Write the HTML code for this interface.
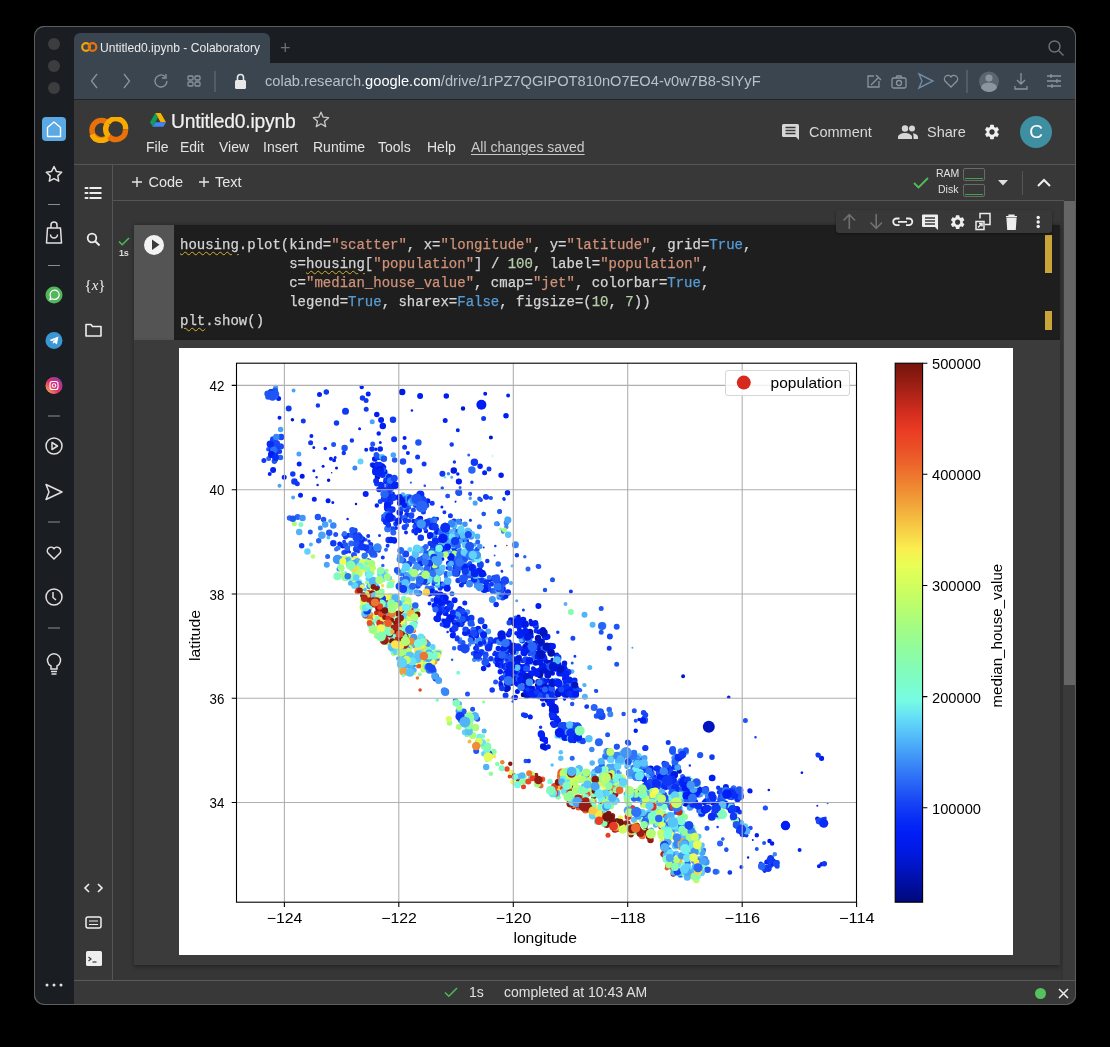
<!DOCTYPE html>
<html><head><meta charset="utf-8">
<style>
*{margin:0;padding:0;box-sizing:border-box}
html,body{width:1110px;height:1047px;background:#000;overflow:hidden;font-family:"Liberation Sans",sans-serif}
.a{position:absolute}
#win{left:34px;top:26px;width:1042px;height:979px;border-radius:10px;background:#1a1d21;overflow:hidden;box-shadow:inset 0 0 0 1px #4a4b4d}
.dot{width:12px;height:12px;border-radius:50%;background:#3c3d3f;left:14px}
#tab{left:40px;top:7px;width:196px;height:30px;background:#3b4550;border-radius:6px 6px 0 0}
#addr{left:40px;top:37px;width:1002px;height:36px;background:#3b4550}
#colab{left:40px;top:73px;width:1002px;height:906px;background:#383838;border-top:1px solid #232323}
.mi{color:#e3e3e3;font-size:14px}
.ic{fill:none;stroke:#8a949e;stroke-width:1.3}
.si{fill:none;stroke:#e0e0e0;stroke-width:1.5}
.code{font-family:"Liberation Mono",monospace;font-size:14px;color:#d4d4d4;white-space:pre;line-height:19px;-webkit-text-stroke:0.25px currentColor}
.s{color:#ce9178}.k{color:#569cd6}.n{color:#b5cea8}
.sq{text-decoration:underline wavy #d6b030;text-decoration-thickness:1px;text-underline-offset:1.5px}
</style></head><body>
<div id="root" style="position:absolute;left:0;top:0;width:1110px;height:1047px;will-change:transform">
<div id="win" class="a">
  <div class="a dot" style="top:12px"></div>
  <div class="a dot" style="top:34px"></div>
  <div class="a dot" style="top:56px"></div>
  <div id="tab" class="a">
    <svg class="a" style="left:7px;top:8px" width="17" height="12" viewBox="0 0 17 12"><circle cx="5" cy="6" r="3.8" fill="none" stroke="#f0a30a" stroke-width="2.2"/><circle cx="11.5" cy="6" r="3.8" fill="none" stroke="#e8710a" stroke-width="2.2"/></svg>
    <div class="a" style="left:26px;top:8px;font-size:12.1px;color:#ebebeb;white-space:nowrap">Untitled0.ipynb - Colaboratory</div>
  </div>
  <div class="a" style="left:246px;top:14px;color:#6b7178;font-size:18px;line-height:16px">+</div>
  <svg class="a" style="left:1013px;top:13px" width="18" height="18" viewBox="0 0 18 18"><circle cx="7.5" cy="7.5" r="5.5" fill="none" stroke="#6e7379" stroke-width="1.4"/><path d="M11.5 11.5l5 5" stroke="#6e7379" stroke-width="1.4"/></svg>
  <div id="addr" class="a">
    <svg class="a" style="left:0;top:0" width="1002" height="36">
      <path class="ic" d="M23 11l-5.5 7 5.5 7"/>
      <path class="ic" d="M50 11l5.5 7-5.5 7"/>
      <path class="ic" d="M91 13.5a6 6 0 1 0 2 4.5M92 11v4h-4"/>
      <rect class="ic" x="114" y="13" width="5" height="4" rx="1"/><rect class="ic" x="121" y="13" width="5" height="4" rx="1"/><rect class="ic" x="114" y="19" width="5" height="4" rx="1"/><rect class="ic" x="121" y="19" width="5" height="4" rx="1"/>
      <path d="M141 8v21" stroke="#6b7580" stroke-width="1"/>
      <rect x="161" y="17" width="11" height="9" rx="1.5" fill="#e8e8e8"/><path d="M163.5 17.5v-3a3 3 0 0 1 6 0v3" fill="none" stroke="#e8e8e8" stroke-width="1.6"/>
      <path class="ic" d="M800 13h-6v11h11v-6M797 22l8-8M802 12l5 5"/>
      <rect class="ic" x="818" y="15" width="14" height="10" rx="1.5"/><circle class="ic" cx="825" cy="20" r="2.5"/><path class="ic" d="M822 15l1-2h4l1 2"/>
      <path d="M845 11l14 7-14 7 3-7z" fill="none" stroke="#6f8ba3" stroke-width="1.4"/>
      <path class="ic" d="M877 24l-6-6a3.5 3.5 0 0 1 6-4a3.5 3.5 0 0 1 6 4z"/>
      <path d="M893 7v23" stroke="#6b7580" stroke-width="1"/>
      <circle cx="915" cy="18.5" r="10" fill="#5a6570"/><circle cx="915" cy="15" r="3.6" fill="#8c959e"/><path d="M907 25a8 5.5 0 0 1 16 0a10 10 0 0 1-16 0z" fill="#8c959e"/>
      <path class="ic" d="M947 10v11M943 17l4 4 4-4M941 23v3h12v-3"/>
      <path class="ic" d="M973 13h14M973 18h14M973 23h14M977 11v4M983 16v4M978 21v4"/>
    </svg>
    <div class="a" style="left:191px;top:10px;font-size:14.65px;color:#b9c0c7;white-space:nowrap;letter-spacing:0px">colab.research.<span style="color:#fff">google.com</span>/drive/1rPZ7QGIPOT810nO7EO4-v0w7B8-SIYyF</div>
  </div>
  <div id="colab" class="a"></div>
</div>
<!-- colab header -->
<div class="a" style="left:74px;top:164px;width:1002px;height:1px;background:#555"></div>
<svg class="a" style="left:88px;top:117px" width="42" height="26" viewBox="0 0 42 26">
  <path d="M21.2 7.2A9.6 9.6 0 1 0 21.2 18.8" fill="none" stroke="#e8710a" stroke-width="5.4"/>
  <path d="M4 17.5A9.6 9.6 0 0 0 21.2 18.8" fill="none" stroke="#f9ab00" stroke-width="5.4"/>
  <path d="M19.8 6.2A9.6 9.6 0 0 1 37.5 12.5" fill="none" stroke="#f9ab00" stroke-width="5.4"/>
  <path d="M19.8 6.2A9.6 9.6 0 0 0 21 19.5" fill="none" stroke="#f9ab00" stroke-width="5.4"/>
  <path d="M37.5 12.5A9.6 9.6 0 0 1 21 19.5" fill="none" stroke="#e8710a" stroke-width="5.4"/>
</svg>
<svg class="a" style="left:150px;top:113px" width="16" height="14" viewBox="0 0 16 14">
  <path d="M5.3 0h5.4l5.3 9.2h-5.4z" fill="#f4b400"/>
  <path d="M5.3 0l2.7 4.6-5.3 9.2L0 9.2z" fill="#0f9d58"/>
  <path d="M2.7 13.8l2.7-4.6H16l-2.7 4.6z" fill="#4285f4"/>
</svg>
<div class="a" style="left:171px;top:110.5px;font-size:19.3px;color:#f1f1f1;white-space:nowrap;letter-spacing:-0.2px;-webkit-text-stroke:0.2px #f1f1f1">Untitled0.ipynb</div>
<svg class="a" style="left:312px;top:111px" width="18" height="17" viewBox="0 0 18 17"><path d="M9 1.2l2.2 5 5.4.5-4.1 3.6 1.2 5.3L9 12.8l-4.7 2.8 1.2-5.3L1.4 6.7l5.4-.5z" fill="none" stroke="#c8c8c8" stroke-width="1.3" stroke-linejoin="round"/></svg>
<div class="a mi" style="left:146px;top:139px">File</div>
<div class="a mi" style="left:180px;top:139px">Edit</div>
<div class="a mi" style="left:219px;top:139px">View</div>
<div class="a mi" style="left:263px;top:139px">Insert</div>
<div class="a mi" style="left:313px;top:139px">Runtime</div>
<div class="a mi" style="left:378px;top:139px">Tools</div>
<div class="a mi" style="left:427px;top:139px">Help</div>
<div class="a mi" style="left:471px;top:139px;color:#c9c9c9;text-decoration:underline;text-underline-offset:2px">All changes saved</div>
<svg class="a" style="left:782px;top:124px" width="18" height="16" viewBox="0 0 18 16"><path d="M1.5 0h14a1.5 1.5 0 0 1 1.5 1.5V16l-3-3H1.5A1.5 1.5 0 0 1 0 11.5v-10A1.5 1.5 0 0 1 1.5 0z" fill="#d6d6d6"/><path d="M3.5 3.5h10M3.5 6.5h10M3.5 9.5h10" stroke="#383838" stroke-width="1.5"/></svg>
<div class="a mi" style="left:809px;top:124px;font-size:14.5px;color:#d8d8d8">Comment</div>
<svg class="a" style="left:898px;top:125px" width="20" height="14" viewBox="0 0 20 14"><circle cx="7" cy="3.5" r="3.2" fill="#d6d6d6"/><circle cx="14" cy="3.5" r="3" fill="#d6d6d6"/><path d="M0 14v-2c0-2.5 4-4 7-4s7 1.5 7 4v2z" fill="#d6d6d6"/><path d="M15 8.2c2.5.3 5 1.5 5 3.8v2h-4.5v-2c0-1.5-.2-2.7-.5-3.8z" fill="#d6d6d6"/></svg>
<div class="a mi" style="left:927px;top:124px;font-size:14.5px;color:#d8d8d8">Share</div>
<svg class="a" style="left:983px;top:123px" width="18" height="18" viewBox="0 0 24 24"><path fill="#f0f0f0" d="M19.14 12.94c.04-.3.06-.61.06-.94 0-.32-.02-.64-.07-.94l2.03-1.58a.49.49 0 0 0 .12-.61l-1.92-3.32a.488.488 0 0 0-.59-.22l-2.39.96c-.5-.38-1.03-.7-1.62-.94l-.36-2.54a.484.484 0 0 0-.48-.41h-3.84c-.24 0-.43.17-.47.41l-.36 2.54c-.59.24-1.13.57-1.62.94l-2.39-.96c-.22-.08-.47 0-.59.22L2.74 8.87c-.12.21-.08.47.12.61l2.03 1.58c-.05.3-.09.63-.09.94s.02.64.07.94l-2.03 1.58a.49.49 0 0 0-.12.61l1.92 3.32c.12.22.37.29.59.22l2.39-.96c.5.38 1.03.7 1.62.94l.36 2.54c.05.24.24.41.48.41h3.84c.24 0 .44-.17.47-.41l.36-2.54c.59-.24 1.13-.56 1.62-.94l2.39.96c.22.08.47 0 .59-.22l1.92-3.32c.12-.22.07-.47-.12-.61l-2.01-1.58zM12 15.6c-1.98 0-3.6-1.62-3.6-3.6s1.62-3.6 3.6-3.6 3.6 1.62 3.6 3.6-1.62 3.6-3.6 3.6z"/></svg>
<div class="a" style="left:1020px;top:116px;width:32px;height:32px;border-radius:50%;background:#3f8fa2;color:#fff;font-size:19px;text-align:center;line-height:32px">C</div>
<!-- left colab sidebar -->
<div class="a" style="left:112px;top:165px;width:1px;height:815px;background:#555"></div>
<div class="a" style="left:113px;top:200px;width:951px;height:1px;background:#555"></div>
<svg class="a" style="left:131.5px;top:177px" width="10" height="10"><path d="M5 0v10M0 5h10" stroke="#e6e6e6" stroke-width="1.4"/></svg><div class="a mi" style="left:148.5px;top:174px;font-size:14.5px;color:#e6e6e6">Code</div>
<svg class="a" style="left:198.5px;top:177px" width="10" height="10"><path d="M5 0v10M0 5h10" stroke="#e6e6e6" stroke-width="1.4"/></svg><div class="a mi" style="left:215px;top:174px;font-size:14.5px;color:#e6e6e6">Text</div>
<svg class="a" style="left:913px;top:177px" width="16" height="12" viewBox="0 0 16 12"><path d="M1 6l4.5 4.5L15 1" fill="none" stroke="#4fbf5a" stroke-width="1.8"/></svg>
<div class="a" style="left:936px;top:167px;font-size:10.5px;color:#e0e0e0">RAM</div>
<div class="a" style="left:938px;top:183px;font-size:10.5px;color:#e0e0e0">Disk</div>
<div class="a" style="left:963px;top:168px;width:22px;height:13px;border:1px solid #6a6a6a;border-radius:2px"><div class="a" style="left:1px;bottom:1px;width:18px;height:1px;background:#3fa34d"></div></div>
<div class="a" style="left:963px;top:184px;width:22px;height:13px;border:1px solid #6a6a6a;border-radius:2px"><div class="a" style="left:1px;bottom:1px;width:18px;height:1px;background:#3fa34d"></div></div>
<svg class="a" style="left:998px;top:180px" width="10" height="6"><path d="M0 0h10L5 5.5z" fill="#e0e0e0"/></svg>
<div class="a" style="left:1022px;top:171px;width:1px;height:24px;background:#555"></div>
<svg class="a" style="left:1037px;top:178px" width="14" height="9"><path d="M1 8l6-6 6 6" fill="none" stroke="#f0f0f0" stroke-width="2"/></svg>
<!-- opera sidebar icons -->
<div class="a" style="left:42px;top:117px;width:24px;height:24px;border-radius:4px;background:#5aa8e4"></div>
<svg class="a" style="left:34px;top:100px" width="40" height="900" viewBox="0 0 40 900">
  <path d="M13.5 27.5l6.5-5.5 6.5 5.5v9h-13z" fill="none" stroke="#fff" stroke-width="1.4" stroke-linejoin="round"/>
  <path class="si" stroke-linejoin="round" d="M20 66.5l2.4 4.9 5.3.8-3.9 3.7.9 5.3-4.7-2.5-4.7 2.5.9-5.3-3.9-3.7 5.3-.8z"/>
  <path d="M14 104.5h12M14 165.5h12M14 316h12M14 422h12M14 528h12" stroke="#8a8e93" stroke-width="1.2"/>
  <path class="si" stroke-linejoin="round" d="M13.5 128h13l1 15h-15zM17 128v-3a3 3 0 0 1 6 0v3M16.5 134.5a3.5 3.5 0 0 0 7 0"/>
  <circle cx="20" cy="195" r="8.5" fill="#52b65c"/><path d="M16 199.5l.7-2.3a4.6 4.6 0 1 1 1.7 1.6z" fill="none" stroke="#fff" stroke-width="1.2"/>
  <circle cx="20" cy="240.5" r="8.5" fill="#3b97d3"/><path d="M15.5 240l9-3.5-1.6 8-2.6-2-1.5 1.5.2-2.5 3-2.5-4 2.2z" fill="#fff"/>
  <defs><linearGradient id="ig" x1="0" y1="1" x2="1" y2="0"><stop offset="0" stop-color="#fdc549"/><stop offset=".45" stop-color="#e1306c"/><stop offset="1" stop-color="#833ab4"/></linearGradient></defs>
  <circle cx="20" cy="285.5" r="8.5" fill="url(#ig)"/><rect x="16" y="281.5" width="8" height="8" rx="2.3" fill="none" stroke="#fff" stroke-width="1.1"/><circle cx="20" cy="285.5" r="1.8" fill="none" stroke="#fff" stroke-width="1.1"/>
  <circle class="si" cx="20" cy="346" r="8"/><path class="si" stroke-linejoin="round" d="M18 342.5v7l5.5-3.5z"/>
  <path class="si" stroke-linejoin="round" d="M12 384.5l16 7.5-16 7.5 3-7.5z"/>
  <path class="si" d="M20 459l-6-6a3.6 3.6 0 0 1 6-4.3a3.6 3.6 0 0 1 6 4.3z" stroke-linejoin="round"/>
  <circle class="si" cx="20" cy="497" r="8"/><path class="si" d="M19 492v5.5l3 2.5"/>
  <path class="si" d="M17 566a6.5 6.5 0 1 1 6 0v3h-6zM17 571.5h6M17.5 574h5"/>
  <circle cx="13" cy="885" r="1.5" fill="#e0e0e0"/><circle cx="20" cy="885" r="1.5" fill="#e0e0e0"/><circle cx="27" cy="885" r="1.5" fill="#e0e0e0"/>
</svg>
<!-- colab sidebar icons -->
<svg class="a" style="left:74px;top:165px" width="38" height="815" viewBox="0 0 38 815">
  <path d="M11.5 23h2M11.5 28h2M11.5 33h2" stroke="#eee" stroke-width="2" stroke-linecap="round"/><path d="M15.5 23h12M15.5 28h12M15.5 33h12" stroke="#eee" stroke-width="1.8"/>
  <circle cx="18" cy="73" r="4.3" fill="none" stroke="#eee" stroke-width="1.8"/><path d="M21 76l4.5 4.5" stroke="#eee" stroke-width="2"/>
  
  <path d="M12 159.5h5l1.5 2h8.5v9.5h-15z" fill="none" stroke="#eee" stroke-width="1.6" stroke-linejoin="round"/>
  <path d="M15 719l-4 4 4 4M24 719l4 4-4 4" fill="none" stroke="#eee" stroke-width="1.6"/>
  <rect x="12" y="752" width="15" height="11" rx="2" fill="none" stroke="#eee" stroke-width="1.5"/><path d="M15 756h9M15 759.5h9" stroke="#eee" stroke-width="1.2"/>
  <rect x="12" y="786" width="16" height="15" rx="1.5" fill="#eee"/><path d="M14.5 792l2.5 2-2.5 2" fill="none" stroke="#383838" stroke-width="1.2"/><path d="M18.5 797h4" stroke="#383838" stroke-width="1.2"/>
</svg>
<div class="a" style="left:84px;top:276px;width:22px;text-align:center;font-family:'Liberation Serif',serif;font-size:15px;color:#eee;line-height:18px"><span style="font-style:normal">{</span><i>x</i><span>}</span></div>
<!-- scrollbar -->
<div class="a" style="left:1061px;top:201px;width:15px;height:779px;background:#3a3a3a"></div>
<div class="a" style="left:1061px;top:201px;width:2px;height:779px;background:#343434"></div>
<div class="a" style="left:1064px;top:201px;width:11.5px;height:484px;background:#656565"></div>
<!-- cell -->
<div class="a" style="left:113px;top:201px;width:948px;height:779px;background:#363636"></div>
<div class="a" style="left:134px;top:225px;width:926px;height:115px;background:#1e1e1e;box-shadow:0 0 4px rgba(0,0,0,.35)"></div>
<div class="a" style="left:134px;top:225px;width:40px;height:115px;background:#545454"></div>
<div class="a" style="left:144px;top:235px;width:20px;height:20px;border-radius:50%;background:#f3f3f3"></div>
<svg class="a" style="left:150px;top:239px" width="10" height="12"><path d="M2 0.5v10.5l7.5-5.25z" fill="#3a3a3a"/></svg>
<svg class="a" style="left:118px;top:237px" width="12" height="10"><path d="M1 4.5l3.2 3.2L11 1" fill="none" stroke="#4cbb55" stroke-width="1.5"/></svg>
<div class="a" style="left:119px;top:248px;font-size:9px;font-weight:bold;color:#ddd;letter-spacing:-0.3px">1s</div>
<div class="a" style="left:1045px;top:235px;width:7px;height:38px;background:#c9a53a"></div>
<div class="a" style="left:1045px;top:311px;width:7px;height:19px;background:#c9a53a"></div>
<div class="a code" style="left:180px;top:236px"><span class="sq">housing</span>.plot(kind=<span class="s">"scatter"</span>, x=<span class="s">"longitude"</span>, y=<span class="s">"latitude"</span>, grid=<span class="k">True</span>,
             s=<span class="sq">housing</span>[<span class="s">"population"</span>] / <span class="n">100</span>, label=<span class="s">"population"</span>,
             c=<span class="s">"median_house_value"</span>, cmap=<span class="s">"jet"</span>, colorbar=<span class="k">True</span>,
             legend=<span class="k">True</span>, sharex=<span class="k">False</span>, figsize=(<span class="n">10</span>, <span class="n">7</span>))
<span class="sq">plt</span>.show()</div>
<!-- cell toolbar -->
<div class="a" style="left:836px;top:210px;width:216px;height:23px;border-radius:3px;background:#383838;box-shadow:0 1px 3px rgba(0,0,0,.4)"></div>
<svg class="a" style="left:836px;top:210px" width="216" height="23" viewBox="0 0 216 23">
  <path d="M13.3 19V5M7.5 10.5l5.8-5.8 5.8 5.8" fill="none" stroke="#707070" stroke-width="1.6"/>
  <path d="M40.2 4v14M34.5 12.5l5.7 5.8 5.8-5.8" fill="none" stroke="#707070" stroke-width="1.6"/>
  <path d="M63.5 8.5h-3a3.3 3.3 0 0 0 0 6.6h3M70 8.5h3a3.3 3.3 0 0 1 0 6.6h-3M62 11.8h9" fill="none" stroke="#eee" stroke-width="1.8"/>
  <path d="M87 4.5h14a1 1 0 0 1 1 1V20l-3-3H87a1 1 0 0 1-1-1V5.5a1 1 0 0 1 1-1z" fill="#eee"/><path d="M89 8h10M89 11h10M89 14h10" stroke="#383838" stroke-width="1.3"/>
  <g transform="translate(113,3.5) scale(0.72)"><path fill="#eee" d="M19.14 12.94c.04-.3.06-.61.06-.94 0-.32-.02-.64-.07-.94l2.03-1.58a.49.49 0 0 0 .12-.61l-1.92-3.32a.488.488 0 0 0-.59-.22l-2.39.96c-.5-.38-1.03-.7-1.62-.94l-.36-2.54a.484.484 0 0 0-.48-.41h-3.84c-.24 0-.43.17-.47.41l-.36 2.54c-.59.24-1.13.57-1.62.94l-2.39-.96c-.22-.08-.47 0-.59.22L2.74 8.87c-.12.21-.08.47.12.61l2.03 1.58c-.05.3-.09.63-.09.94s.02.64.07.94l-2.03 1.58a.49.49 0 0 0-.12.61l1.92 3.32c.12.22.37.29.59.22l2.39-.96c.5.38 1.03.7 1.62.94l.36 2.54c.05.24.24.41.48.41h3.84c.24 0 .44-.17.47-.41l.36-2.54c.59-.24 1.13-.56 1.62-.94l2.39.96c.22.08.47 0 .59-.22l1.92-3.32c.12-.22.07-.47-.12-.61l-2.01-1.58zM12 15.6c-1.98 0-3.6-1.62-3.6-3.6s1.62-3.6 3.6-3.6 3.6 1.62 3.6 3.6-1.62 3.6-3.6 3.6z"/></g>
  <path d="M144 8.5V3.5h10v11h-5M140 11.5h8v8h-8zM142 17.5l4-4M143 13.5h3v3" fill="none" stroke="#eee" stroke-width="1.5"/>
  <path d="M170 6.5h11M173 6.5V5h5v1.5M171 8h9l-.8 11.5h-7.4z" fill="#eee" stroke="#eee" stroke-width="1.2"/>
  <circle cx="202.2" cy="7.5" r="1.7" fill="#eee"/><circle cx="202.2" cy="12" r="1.7" fill="#eee"/><circle cx="202.2" cy="16.5" r="1.7" fill="#eee"/>
</svg>
<!-- output card -->
<div class="a" style="left:134px;top:340px;width:926px;height:625px;background:#3b3b3b;box-shadow:0 2px 4px rgba(0,0,0,.35)"></div>
<!--FIG--><svg class="a" style="left:179px;top:348px" width="834" height="607" viewBox="179 348 834 607">
<rect x="179" y="348" width="834" height="607" fill="#fff"/>
<svg x="236.5" y="363.2" width="620.0" height="539.0" viewBox="236.5 363.2 620.0 539.0" overflow="hidden">
<g fill="none" stroke-linecap="round"><path stroke="#0017d2" stroke-width="1.5" d="M331.7 472.8h0"/><path stroke="#1039f5" stroke-width="1.5" d="M455.4 502h0"/><path stroke="#77fcdf" stroke-width="1.5" d="M492.5 455.9h0"/><path stroke="#a72116" stroke-width="1.5" d="M506.8 545.6h0"/><path stroke="#0323f5" stroke-width="2" d="M424.9 485.8h0"/><path stroke="#1039f5" stroke-width="2" d="M455.6 501.6h0m28.1 45.8h0"/><path stroke="#2864f6" stroke-width="2" d="M410.8 482.7h0m0.2-0.1h0m83.6 73h0"/><path stroke="#0017d2" stroke-width="2.5" d="M356 504.1h0"/><path stroke="#001df5" stroke-width="2.5" d="M411.9 410.5h0"/><path stroke="#0323f5" stroke-width="2.5" d="M316.6 477.3h0m1 7.6h0m30 34.1h0"/><path stroke="#1039f5" stroke-width="2.5" d="M495.3 546h0m6.5 25.1h0"/><path stroke="#2055f5" stroke-width="2.5" d="M424.7 485.8h0"/><path stroke="#49a4f8" stroke-width="2.5" d="M512.6 565.7h0"/><path stroke="#68e3f4" stroke-width="2.5" d="M444.9 477.3h0"/><path stroke="#0017d2" stroke-width="3" d="M336.5 468.1h0"/><path stroke="#001df5" stroke-width="3" d="M323.1 466.3h0"/><path stroke="#0323f5" stroke-width="3" d="M313.8 447.6h0m0 23.2h0m19 31.7h0m2.4-45.1h0m24.4-28.7h0m20.7 13.8h0m61.6 64.5h0"/><path stroke="#092df5" stroke-width="3" d="M446.4 528h0"/><path stroke="#1039f5" stroke-width="3" d="M442.4 487.9h0m18.2 32.4h0m0.1 0h0m3.4 23.2h0m6.2-23.2h0m0.2 0h0"/><path stroke="#2055f5" stroke-width="3" d="M442 487.9h0"/><path stroke="#2864f6" stroke-width="3" d="M460.1 487.5h0m8.6-32.6h0"/><path stroke="#3986f7" stroke-width="3" d="M470.3 498.1h0"/><path stroke="#49a4f8" stroke-width="3" d="M451.7 477.3h0m18.4 21.1h0"/><path stroke="#0017d2" stroke-width="3.5" d="M292.4 419.8h0m36.2 60.4h0"/><path stroke="#001df5" stroke-width="3.5" d="M375.9 449.2h0m60.2 89.8h0m21.7-64.9h0"/><path stroke="#0323f5" stroke-width="3.5" d="M325.2 448.6h0"/><path stroke="#092df5" stroke-width="3.5" d="M440.8 538.7h0"/><path stroke="#1039f5" stroke-width="3.5" d="M387.8 516.7h0m66.6-54.8h0m15.9 32.1h0m1.6-11.8h0m0 0h0m32 16.5h0m0.2 0.5h0"/><path stroke="#2864f6" stroke-width="3.5" d="M524.8 556.8h0"/><path stroke="#3986f7" stroke-width="3.5" d="M448.4 473.8h0m62.7 109.2h0"/><path stroke="#0017d2" stroke-width="4" d="M490.9 437.6h0"/><path stroke="#001df5" stroke-width="4" d="M435.4 536.5h0m49.8-142.7h0"/><path stroke="#001df5" stroke-width="4" d="M334.1 460.3h0m70.5-22.4h0m37.8 121h0m4.8-6.2h0"/><path stroke="#0323f5" stroke-width="4" d="M269.7 474.1h0m0.6-27h0m9.2-29.3h0m31.9 18.2h0m19.5 22.7h0m35.3-8.9h0m41.7 3.2h0m8.1 80.4h0m27.2 17h0m7.5 9.2h0m7.1-129.3h0m50.3-34.9h0"/><path stroke="#092df5" stroke-width="4" d="M395.9 528h0m33.4 9.3h0m30.3 11.7h0"/><path stroke="#1039f5" stroke-width="4" d="M276.4 449.6h0m109.5 51.2h0m5.7-4.5h0m9.8 20.8h0m35.7 1.6h0m7.3-6.5h0m36.5-12.2h0m2.7 13.8h0"/><path stroke="#1847f5" stroke-width="4" d="M386.4 479.5h0m16.5 15.7h0m6.3 12.5h0m37.2 28.1h0"/><path stroke="#2055f5" stroke-width="4" d="M376.5 463.3h0m13.5 64.1h0m80.1-33.7h0m20.5 4.4h0m0.4-0.1h0"/><path stroke="#2864f6" stroke-width="4" d="M271.1 454.8h0m3.8-9.3h0m133.1 61.4h0m11.3 13.9h0m42.9 19.9h0m3.1-0.9h0m7.6-5.3h0"/><path stroke="#49a4f8" stroke-width="4" d="M279.5 485.8h0m13.6 11.8h0m0.5-107h0"/><path stroke="#0017d2" stroke-width="4.5" d="M434.8 525h0m28.2-116.6h0"/><path stroke="#001ae3" stroke-width="4.5" d="M437.4 530h0"/><path stroke="#001df5" stroke-width="4.5" d="M270.5 454.6h0m104 15h0m9.6-2.4h0m29.3 53.8h0m39.8 16.3h0"/><path stroke="#001df5" stroke-width="4.5" d="M385.3 481.7h0m14.8 21.9h0"/><path stroke="#0323f5" stroke-width="4.5" d="M273.5 450h0m88.2-63h0m15.1 118.4h0m1.9-71.9h0m9.3 67.2h0m1-14.6h0m0.3 10h0m5.4 0.5h0m20.1 6h0m11.2 28.5h0"/><path stroke="#092df5" stroke-width="4.5" d="M385.7 489.4h0m7 4.4h0m26.2 9.1h0"/><path stroke="#1039f5" stroke-width="4.5" d="M275.5 452.4h0m42.4-46.9h0m25.9 47.5h0m8.1-12.6h0m26.1 17.7h0m11.9 49.4h0m17.1-2.4h0m2 15.6h0m38.6-24.7h0m4.1-51.6h0m2.9 107.7h0m32.7 8.9h0m12.2-49.6h0m17.4 43.8h0"/><path stroke="#1847f5" stroke-width="4.5" d="M276.2 452h0"/><path stroke="#2055f5" stroke-width="4.5" d="M268.3 449.2h0m5.4-57.2h0m116.9 148.2h0m16.3-14.9h0m40.8-29.4h0m5.8 25.2h0m25.9-22.4h0m4.3 15.2h0m54.1 52.3h0"/><path stroke="#2864f6" stroke-width="4.5" d="M416.4 523.3h0"/><path stroke="#3073f6" stroke-width="4.5" d="M408.9 502.4h0m45.2 47.6h0"/><path stroke="#3986f7" stroke-width="4.5" d="M411.2 517.2h0"/><path stroke="#4195f7" stroke-width="4.5" d="M412.4 503.3h0"/><path stroke="#49a4f8" stroke-width="4.5" d="M418.8 529h0"/><path stroke="#001ae3" stroke-width="5" d="M302.2 476.2h0m75.5-9.1h0"/><path stroke="#001df5" stroke-width="5" d="M387.6 495.6h0"/><path stroke="#001df5" stroke-width="5" d="M278.6 398.6h0m49.5 102.2h0m50.4-30.4h0m4.1-12h0m8.5 80.8h0"/><path stroke="#0323f5" stroke-width="5" d="M284.2 477.3h0m15-13.4h0m1.3 31.3h0m13.8 4h0m5.2-104.6h0m48.7-0.5h0m37.3 115.2h0m6.1-8.3h0m33.6-80.4h0m39.4 52.2h0m23 19.9h0"/><path stroke="#092df5" stroke-width="5" d="M387.3 504.6h0m2.1 8h0m10.2-9.3h0"/><path stroke="#1039f5" stroke-width="5" d="M263.9 460.6h0m9.6-9.1h0m6.1 0h0m17.7 32.3h0m6-62.9h0m7.3 21.9h0m55.5-42.2h0m0.1 8.6h0m16.2 79h0m3.3-8.4h0m6.2 1.3h0m2.5 58.5h0m10.2-92.3h0m9.2 83.8h0m3.8-74h0m5.8 54.9h0m0.7-48.1h0m7.7 59.4h0m0.4-20h0m7.6 36.5h0m10.6-24h0m3.7 5.3h0m29.5-102.6h0m3 78.8h0m2.4-28.4h0"/><path stroke="#1847f5" stroke-width="5" d="M275.6 459.6h0m96.6 5.1h0m2.3 6.6h0m5.7 30.1h0m6.3 4h0m6-25.5h0m0.5 48.9h0m7.4-19.2h0m13 0.5h0m3.2 12.9h0m4.1-26.9h0m6.1 9.3h0m11.8 48.1h0"/><path stroke="#2055f5" stroke-width="5" d="M270.9 391.4h0m4.7 60.6h0m58-7.6h0m39.1-0.3h0m15.1 41.2h0m2.7 7.7h0m65.2 47.1h0m43.9-28.7h0"/><path stroke="#2864f6" stroke-width="5" d="M268.7 458.4h0m114.9 57.8h0m32.6-14.2h0m63.2 24.8h0"/><path stroke="#3986f7" stroke-width="5" d="M354.9 468.1h0"/><path stroke="#4195f7" stroke-width="5" d="M434.8 534.2h0"/><path stroke="#49a4f8" stroke-width="5" d="M275.7 387.3h0m23.2 66.8h0m73.3-32.4h0m34.4 75.3h0m68.5 6.1h0m0.1 0.2h0"/><path stroke="#51b4f9" stroke-width="5" d="M386.8 474.9h0m16.1 19.8h0"/><path stroke="#58c3f9" stroke-width="5" d="M458.6 547.1h0"/><path stroke="#0014c0" stroke-width="5.5" d="M377.5 477.1h0"/><path stroke="#001ae3" stroke-width="5.5" d="M373.5 465.6h0m8.8 0.4h0"/><path stroke="#001df5" stroke-width="5.5" d="M276.1 445.9h0m98.6 13h0m1.6 9.6h0m0.5-53.9h0m14.2 71.6h0m29.4 32.2h0m31.5 17.7h0m49.2-60.9h0m4.9-59.5h0"/><path stroke="#001df5" stroke-width="5.5" d="M384.8 471.7h0m7.6 25.6h0m1.9 43.6h0m7.6-40.7h0m17.4 30.1h0m0.6-11.6h0m17 13.4h0m9.4-136.2h0"/><path stroke="#0323f5" stroke-width="5.5" d="M271.5 450.6h0m5.1-3.5h0m102.4 10.1h0m1.2-8.3h0m0.4 35.7h0m2.7-16.4h0m3.7 37.9h0m7-22.3h0m25.2 43.8h0m8.5-26.5h0m16.9 46.1h0m13.9-65.8h0m21.6-15.1h0m27.4 26.4h0"/><path stroke="#092df5" stroke-width="5.5" d="M275.5 448.8h0m0.2 5.4h0m4.5-7.9h0m91.8 2.6h0m4.8 24.5h0m0.3-8.6h0m1.9 24.7h0m0.6-25h0m0.3 0.5h0m8.9 34.9h0m2.7-16.5h0m15.5 31.5h0m12.6 5.7h0m25.4 23.8h0m6.2-1.5h0m2.8 5.1h0"/><path stroke="#1039f5" stroke-width="5.5" d="M274.9 441h0m17.9 33.1h0m33.5-82.2h0m10.2 31.1h0m26-25.1h0m14.3 85.9h0m10.5 13.8h0m0.3 23.3h0m2.3-24.6h0m0.7 6h0m1.1 37.7h0m14.9-29.8h0m10 16.2h0m13.6 17h0m13.8 8.9h0m41.7-55.5h0"/><path stroke="#1847f5" stroke-width="5.5" d="M377.3 456.9h0m6.5 62.7h0m3.3-15.9h0m1.1 2.1h0m33.4-1.7h0"/><path stroke="#2055f5" stroke-width="5.5" d="M272.4 445.6h0m2 15.6h0m101.9-6.5h0m7.2 15.1h0m4.6 39h0m1.7-24.5h0m4.8-24.3h0m10 39h0m0.6 8h0m1-8.1h0m2.1 4.1h0m25.8 16.3h0"/><path stroke="#2864f6" stroke-width="5.5" d="M275.2 396.8h0m0.8 60h0m0.2-14.1h0m0.3-48.1h0m4 62.9h0m130.8 58.2h0m14.6 31h0m72.3 17.2h0"/><path stroke="#3073f6" stroke-width="5.5" d="M273.9 442.1h0m160.6 97.1h0"/><path stroke="#3986f7" stroke-width="5.5" d="M274.4 447.9h0"/><path stroke="#49a4f8" stroke-width="5.5" d="M274.5 443h0m6.1-13.5h0m112.7 25.6h0m7.5 45.9h0"/><path stroke="#001df5" stroke-width="6" d="M270.4 444h0m167.9 103h0"/><path stroke="#001df5" stroke-width="6" d="M420.1 395.9h0m34.6 150.4h0m4.3-64.9h0"/><path stroke="#0323f5" stroke-width="6" d="M273.1 470h0m92.6 24h0m15.4-73.9h0m4.1 74.8h0m1.8 13.6h0m4.5-29h0"/><path stroke="#092df5" stroke-width="6" d="M376.1 481.1h0m2.8-7.1h0m3.7 1h0m3.6 15.5h0m0.6 16.2h0m4.7-8.5h0m24.4 32.1h0m0.1-25.3h0"/><path stroke="#1039f5" stroke-width="6" d="M288.7 408.4h0m100.7 74.1h0m4.3 15.5h0m0.4-58.8h0m11.1 60.5h0m4.3-28.9h0m2.6 30.2h0m30.3-27.2h0"/><path stroke="#1847f5" stroke-width="6" d="M274 448.5h0m7.1-1.9h0m106.6 82.6h0m21.7-30.2h0m2 16.2h0m4-15.5h0"/><path stroke="#2055f5" stroke-width="6" d="M273.7 445.6h0m1.3 3.9h0m0.1-59h0m171.8 145.8h0"/><path stroke="#2864f6" stroke-width="6" d="M393.3 532.5h0m11.1-14.6h0m1.7-15.6h0m4.5-0.2h0"/><path stroke="#3073f6" stroke-width="6" d="M408.3 498.1h0m26.1 22.6h0"/><path stroke="#3986f7" stroke-width="6" d="M409.9 503.3h0m10.2-6.6h0"/><path stroke="#4195f7" stroke-width="6" d="M408.8 497.9h0"/><path stroke="#49a4f8" stroke-width="6" d="M402.9 502.2h0"/><path stroke="#58c3f9" stroke-width="6" d="M381.9 457.1h0"/><path stroke="#60d3fa" stroke-width="6" d="M360.5 461.4h0"/><path stroke="#001ae3" stroke-width="6.5" d="M402.2 391.9h0m51.6 78.5h0"/><path stroke="#001df5" stroke-width="6.5" d="M430.2 535.3h0"/><path stroke="#001df5" stroke-width="6.5" d="M382.8 425.9h0m7.7 91.9h0m30.8-18.8h0"/><path stroke="#0323f5" stroke-width="6.5" d="M399.8 512.4h0m0.5-9.5h0m7-2h0m58.4 40.1h0"/><path stroke="#092df5" stroke-width="6.5" d="M271.8 443.8h0m109.7 41.8h0m7 11.3h0m0.7-19.8h0m3.2 32.3h0"/><path stroke="#1039f5" stroke-width="6.5" d="M271.1 392.2h0m23.3 89.2h0m93.9 7.6h0m0.3 51.1h0m4.4-120.3h0m9.9 85.5h0m21.1-1.9h0m34.5-11.2h0"/><path stroke="#1847f5" stroke-width="6.5" d="M273.2 439.5h0m3.6 3.9h0m4.4-6.4h0m111.5 81.3h0m10.3-56.9h0"/><path stroke="#2055f5" stroke-width="6.5" d="M267.6 393.8h0m0.8 2.8h0m7.2-3.2h0m69 54.7h0m39.3 10.6h0m34.5-16.2h0m6.1 83.4h0m15.6 14.5h0m18.9-47.7h0"/><path stroke="#2864f6" stroke-width="6.5" d="M273.9 450.5h0m169.4 84.6h0"/><path stroke="#3073f6" stroke-width="6.5" d="M273.4 449.5h0m116.8 31.1h0"/><path stroke="#3986f7" stroke-width="6.5" d="M276.3 437h0m128.7 64.5h0"/><path stroke="#4195f7" stroke-width="6.5" d="M403 506.6h0"/><path stroke="#49a4f8" stroke-width="6.5" d="M408.8 496.9h0"/><path stroke="#001df5" stroke-width="7" d="M416.6 526.1h0"/><path stroke="#001df5" stroke-width="7" d="M271.5 454.5h0m116 50.3h0m11.9-7.3h0"/><path stroke="#0323f5" stroke-width="7" d="M375.6 471.9h0m68.6 79.5h0m14.2-12h0"/><path stroke="#092df5" stroke-width="7" d="M270.1 443.9h0m5.4 13.7h0m115.6 30h0m27.2 15.3h0m17 38.4h0"/><path stroke="#1039f5" stroke-width="7" d="M345.5 411.3h0m38.8 87.5h0m5 12.6h0m1.1 5.8h0m19.8-18.7h0"/><path stroke="#1847f5" stroke-width="7" d="M394.3 478.3h0"/><path stroke="#2055f5" stroke-width="7" d="M272 393.9h0"/><path stroke="#2864f6" stroke-width="7" d="M429.6 521.3h0"/><path stroke="#3073f6" stroke-width="7" d="M387.7 528.7h0m27.8-26h0"/><path stroke="#3986f7" stroke-width="7" d="M515.4 544.8h0"/><path stroke="#4195f7" stroke-width="7" d="M448 534.8h0"/><path stroke="#49a4f8" stroke-width="7" d="M419.4 495.6h0"/><path stroke="#58c3f9" stroke-width="7" d="M411.4 501.7h0"/><path stroke="#0017d2" stroke-width="7.5" d="M450.1 543.5h0m11.2-4.4h0"/><path stroke="#001ae3" stroke-width="7.5" d="M380.1 469.8h0m21.6 31.4h0"/><path stroke="#0323f5" stroke-width="7.5" d="M379.8 471.7h0m15.5 13.6h0m23.2 35.9h0m25.6 17.4h0"/><path stroke="#092df5" stroke-width="7.5" d="M386.5 521.5h0m45.7 5h0m25.6 13.3h0"/><path stroke="#1039f5" stroke-width="7.5" d="M387.1 492h0m87.3-29.8h0"/><path stroke="#2055f5" stroke-width="7.5" d="M272.5 397.1h0"/><path stroke="#2864f6" stroke-width="7.5" d="M471.9 470h0"/><path stroke="#092df5" stroke-width="8" d="M420.4 494.4h0"/><path stroke="#1039f5" stroke-width="8" d="M422.2 499.8h0"/><path stroke="#2864f6" stroke-width="8.5" d="M384.6 493.9h0"/><path stroke="#3073f6" stroke-width="8.5" d="M387.2 515.3h0"/><path stroke="#49a4f8" stroke-width="8.5" d="M420.7 503.2h0"/><path stroke="#001ae3" stroke-width="9" d="M418.9 500.8h0"/><path stroke="#51b4f9" stroke-width="9" d="M420.5 502.6h0"/><path stroke="#0323f5" stroke-width="9.5" d="M389.6 517.3h0"/><path stroke="#1039f5" stroke-width="9.5" d="M458.5 538.6h0"/><path stroke="#3986f7" stroke-width="9.5" d="M414.4 499.8h0"/><path stroke="#001df5" stroke-width="10" d="M481.4 404.8h0"/><path stroke="#1847f5" stroke-width="10" d="M422.1 501.2h0"/><path stroke="#2055f5" stroke-width="10.5" d="M416.7 498.8h0"/><path stroke="#2864f6" stroke-width="12" d="M421.7 506.5h0"/><path stroke="#1039f5" stroke-width="3" d="M349.7 551.9h0m6-5.5h0m23.8-10.8h0m86.9 35.1h0m19.8 10.1h0"/><path stroke="#2055f5" stroke-width="3" d="M348.8 547h0m9.6-13.5h0m12.2 12.5h0"/><path stroke="#2864f6" stroke-width="3" d="M463.6 572.1h0"/><path stroke="#51b4f9" stroke-width="3" d="M498.5 524.2h0"/><path stroke="#001df5" stroke-width="3.5" d="M359.3 542.2h0"/><path stroke="#0323f5" stroke-width="3.5" d="M479.4 581.9h0"/><path stroke="#092df5" stroke-width="3.5" d="M502.5 593.1h0"/><path stroke="#1039f5" stroke-width="3.5" d="M356.6 545.3h0m12.4-4.1h0m115 41.3h0"/><path stroke="#1847f5" stroke-width="3.5" d="M493.1 577.1h0"/><path stroke="#2055f5" stroke-width="3.5" d="M365.9 539.7h0"/><path stroke="#2864f6" stroke-width="3.5" d="M382.8 565.5h0"/><path stroke="#3073f6" stroke-width="3.5" d="M362 539.4h0m92.8 19.5h0m49.1 39.6h0"/><path stroke="#3986f7" stroke-width="3.5" d="M461 523.5h0m4.4 32.7h0m32.2-33.3h0"/><path stroke="#51b4f9" stroke-width="3.5" d="M453.1 558.6h0"/><path stroke="#81fcbc" stroke-width="3.5" d="M353.3 571.8h0"/><path stroke="#92fc9b" stroke-width="3.5" d="M360.3 581.8h0"/><path stroke="#99fc91" stroke-width="3.5" d="M500.9 529.2h0"/><path stroke="#abfc7b" stroke-width="3.5" d="M366.6 582.5h0"/><path stroke="#b4fd73" stroke-width="3.5" d="M462.3 525.8h0"/><path stroke="#fbe74d" stroke-width="3.5" d="M363 568.8h0"/><path stroke="#f9d849" stroke-width="3.5" d="M382.6 585.7h0"/><path stroke="#001ae3" stroke-width="4" d="M460.8 565.9h0"/><path stroke="#001df5" stroke-width="4" d="M467.4 571.4h0"/><path stroke="#001df5" stroke-width="4" d="M458.5 565.4h0m14.9 6h0"/><path stroke="#0323f5" stroke-width="4" d="M453.7 543.4h0m33.4 42.9h0m6.3-8.8h0"/><path stroke="#092df5" stroke-width="4" d="M375.3 551h0m30.7-18.5h0m41.7 35.6h0m8-13h0m0.7 8.1h0m2-1.6h0m5.9 16.2h0m2.4-1.5h0m18.1 6h0"/><path stroke="#1039f5" stroke-width="4" d="M368.2 536h0m14.6 21.4h0m4.8-11.7h0"/><path stroke="#1847f5" stroke-width="4" d="M344.1 541.8h0m2.4 10.3h0m110.4 6.3h0"/><path stroke="#2055f5" stroke-width="4" d="M358.2 551.6h0m66.9-22.7h0m28.8 28.1h0m7.7 5h0m36.5 29.9h0"/><path stroke="#2864f6" stroke-width="4" d="M350.5 543.8h0m35.5 6h0"/><path stroke="#3073f6" stroke-width="4" d="M503 531.7h0"/><path stroke="#3986f7" stroke-width="4" d="M454.4 529h0m16.4 18.9h0"/><path stroke="#4195f7" stroke-width="4" d="M442.7 530.7h0"/><path stroke="#49a4f8" stroke-width="4" d="M330.1 521.1h0m122 16.6h0m22.6 7h0"/><path stroke="#51b4f9" stroke-width="4" d="M310.9 544.4h0m140.8-0.4h0m3.4-13.2h0m6.5 21.5h0m20.4 25.9h0m17.6 17.5h0"/><path stroke="#58c3f9" stroke-width="4" d="M328.4 537.6h0m55.2 103.5h0m59.1-99.5h0"/><path stroke="#60d3fa" stroke-width="4" d="M463.7 544h0"/><path stroke="#68e3f4" stroke-width="4" d="M345.5 573.3h0m115.5-31.3h0"/><path stroke="#7dfcc8" stroke-width="4" d="M383.4 580.3h0m122.4-55.4h0"/><path stroke="#99fc91" stroke-width="4" d="M386.7 570.7h0"/><path stroke="#a3fc85" stroke-width="4" d="M507.8 533.2h0"/><path stroke="#b4fd73" stroke-width="4" d="M355.2 569.5h0"/><path stroke="#001df5" stroke-width="4.5" d="M421.4 521.6h0"/><path stroke="#001df5" stroke-width="4.5" d="M445.9 546.2h0m50.4 58.3h0m8.9-8.9h0"/><path stroke="#0323f5" stroke-width="4.5" d="M465.6 579.1h0m4.7-29.1h0"/><path stroke="#092df5" stroke-width="4.5" d="M378.7 550.4h0m39.4-26.9h0m20.8 26.6h0m14.6 7.3h0m1.9-5.7h0m19.9 30.2h0m9.1-7.5h0"/><path stroke="#1039f5" stroke-width="4.5" d="M355.1 533.3h0m3.4 6.2h0m115.4 19h0m12.8 25.3h0"/><path stroke="#1847f5" stroke-width="4.5" d="M356.9 536.4h0m17.6 12h0m26.3-39.2h0m13.7 17.2h0m49.4 33.9h0m0.7 12.2h0m3.7-7.8h0"/><path stroke="#2055f5" stroke-width="4.5" d="M341.5 545.5h0m2.1-10.8h0m113.9-3.7h0m8.5 5.2h0m4 27h0m27.3-39.2h0"/><path stroke="#2864f6" stroke-width="4.5" d="M344.6 577h0"/><path stroke="#3073f6" stroke-width="4.5" d="M336.2 549.2h0m18.5 26.5h0m4.4-41.1h0m112.4 42h0m1.4-25.8h0m14.9 34.7h0m9.8-8.9h0"/><path stroke="#3986f7" stroke-width="4.5" d="M454.3 546.6h0m25.8 24.7h0m26.2-44.3h0"/><path stroke="#4195f7" stroke-width="4.5" d="M499.5 582.9h0"/><path stroke="#49a4f8" stroke-width="4.5" d="M462.6 536.5h0m1.3 45.7h0m4.5-49.8h0m3 23.3h0"/><path stroke="#51b4f9" stroke-width="4.5" d="M359.4 585.1h0m90.9-32.6h0m22.7 7.7h0"/><path stroke="#58c3f9" stroke-width="4.5" d="M369 585.5h0m72.5-56.6h0m29.2 29.7h0"/><path stroke="#60d3fa" stroke-width="4.5" d="M367.6 578.9h0m110.7-18.9h0"/><path stroke="#7afcd3" stroke-width="4.5" d="M355.6 568.4h0m4.2 12.8h0m29.4 2.8h0"/><path stroke="#92fc9b" stroke-width="4.5" d="M340 575.9h0"/><path stroke="#99fc91" stroke-width="4.5" d="M473.1 534.4h0"/><path stroke="#a3fc85" stroke-width="4.5" d="M373.3 587h0"/><path stroke="#abfc7b" stroke-width="4.5" d="M341.2 567.1h0m1.8 6.9h0"/><path stroke="#bdfd6b" stroke-width="4.5" d="M313 556.6h0"/><path stroke="#e4fe56" stroke-width="4.5" d="M353.9 580.4h0"/><path stroke="#001df5" stroke-width="5" d="M489.9 579.5h0"/><path stroke="#0323f5" stroke-width="5" d="M343 546h0m24.3 14.5h0m80.9-19.7h0m0.3 22.2h0m12.8-5h0"/><path stroke="#092df5" stroke-width="5" d="M339.7 544.1h0m9-8.9h0m3.4 0.1h0m3 8.3h0m106.3 41.3h0m2.9-3.2h0m12.5 3.4h0m11.1 2.3h0m15.5 1h0m0.8 7.7h0"/><path stroke="#1039f5" stroke-width="5" d="M345.5 537h0m11.7 10.4h0m0.8-6.5h0m12.8 3.7h0m24.9-20.8h0m49.3 24.5h0m10.1 19.4h0m3.3 0.4h0m4.5 10.3h0m8.3-5.8h0m20.3 11.6h0"/><path stroke="#1847f5" stroke-width="5" d="M343.8 552.5h0m8.6 14.8h0m2.8-37.1h0m103.7 39.9h0m6.2 5.4h0m35.4 13.7h0m2 8.7h0"/><path stroke="#2055f5" stroke-width="5" d="M310.3 531.9h0m25.4 2.5h0m15.5 0.5h0m16.7 16h0m48.9-29.7h0m44.7 35.5h0m8.4 25.5h0m7.3-33h0m1.3 10h0m28 22h0"/><path stroke="#2864f6" stroke-width="5" d="M327.6 556.6h0m43-9h0m78.6-6.5h0m28.5 0.9h0m3.1 23.9h0m19 20.3h0"/><path stroke="#3073f6" stroke-width="5" d="M338.1 548h0m6.4-14.6h0m102.9-1.6h0m9.1 37.6h0m13.5-14.8h0m19.3 23h0"/><path stroke="#3986f7" stroke-width="5" d="M320.3 527.9h0m18.7 41h0m130.1-34.8h0m8.1 37.9h0m7.2 8.6h0m9.4 10.9h0m5.2 5.8h0"/><path stroke="#4195f7" stroke-width="5" d="M447.8 539.2h0m4.5 19.1h0m0.7-5h0m1.6-11.4h0m4.8 16.5h0m5 4.5h0m10.9-6.2h0m21.1-33h0m1 68.2h0"/><path stroke="#49a4f8" stroke-width="5" d="M351.8 581h0m16.6-11.4h0m79.9-17.2h0m3.5 9.8h0m8.7-21.3h0"/><path stroke="#51b4f9" stroke-width="5" d="M451.1 531.4h0"/><path stroke="#58c3f9" stroke-width="5" d="M443.7 544.3h0m35.3 14.1h0"/><path stroke="#60d3fa" stroke-width="5" d="M450.5 554.3h0"/><path stroke="#68e3f4" stroke-width="5" d="M382.9 571.8h0"/><path stroke="#71f2ea" stroke-width="5" d="M348.9 558.5h0"/><path stroke="#77fcdf" stroke-width="5" d="M351.4 578.5h0"/><path stroke="#7afcd3" stroke-width="5" d="M343 560.7h0m42.6 16.7h0"/><path stroke="#7dfcc8" stroke-width="5" d="M300.9 524.6h0m206-5.8h0"/><path stroke="#81fcbc" stroke-width="5" d="M349.6 565.5h0m6.9-3h0"/><path stroke="#92fc9b" stroke-width="5" d="M353.8 574.4h0"/><path stroke="#99fc91" stroke-width="5" d="M349.3 558.8h0m101-3.8h0"/><path stroke="#a3fc85" stroke-width="5" d="M504.5 530h0"/><path stroke="#abfc7b" stroke-width="5" d="M294.4 523.8h0"/><path stroke="#bdfd6b" stroke-width="5" d="M376.3 635.7h0"/><path stroke="#c6fd64" stroke-width="5" d="M340.6 574.9h0m15.3 7.3h0"/><path stroke="#fbe74d" stroke-width="5" d="M389.7 578.5h0"/><path stroke="#001df5" stroke-width="5.5" d="M404.4 505.2h0m54.6 56.1h0"/><path stroke="#0323f5" stroke-width="5.5" d="M355.9 549.1h0m109.2 21.2h0m40.6 26h0"/><path stroke="#092df5" stroke-width="5.5" d="M364.7 555.5h0m87.2-11.3h0m5.3 29.7h0m21.3-3.4h0m17.6 33.9h0"/><path stroke="#1039f5" stroke-width="5.5" d="M301.7 545.7h0m45.6 4.5h0m11.5-4.7h0m2.5-4.3h0m4.3 7h0m22.8-23.3h0m17.1-4.5h0m52.6 60.2h0m2-12.6h0"/><path stroke="#1847f5" stroke-width="5.5" d="M456.4 565.9h0m17.6 8h0m5.2 6.7h0"/><path stroke="#2055f5" stroke-width="5.5" d="M323.6 519.5h0m21.9 25.6h0m29.3 10h0m94.2-3.3h0"/><path stroke="#2864f6" stroke-width="5.5" d="M289.5 517.9h0m29.2 22.9h0m28.6 7.4h0m17.6 7.2h0m7.6-0.4h0m96.9-23.3h0"/><path stroke="#3073f6" stroke-width="5.5" d="M368.9 561.2h0m88.6-18.2h0m1.9 8.7h0m18.7 22.9h0"/><path stroke="#3986f7" stroke-width="5.5" d="M462.1 534.4h0m44.3-11.6h0"/><path stroke="#4195f7" stroke-width="5.5" d="M446.6 547.8h0m18.4-23.6h0m6.2 12.9h0m5.4 48.9h0m3.1-39.5h0"/><path stroke="#49a4f8" stroke-width="5.5" d="M447.4 542.8h0"/><path stroke="#51b4f9" stroke-width="5.5" d="M342.8 560.3h0m108.5-19.7h0m7.4 30.6h0m9.1-24.1h0m31.5 48.2h0"/><path stroke="#58c3f9" stroke-width="5.5" d="M361.9 585.5h0"/><path stroke="#60d3fa" stroke-width="5.5" d="M452.7 545.5h0"/><path stroke="#7afcd3" stroke-width="5.5" d="M460.2 532.1h0"/><path stroke="#8cfca6" stroke-width="5.5" d="M386.8 576.6h0"/><path stroke="#92fc9b" stroke-width="5.5" d="M381.9 591.3h0"/><path stroke="#a3fc85" stroke-width="5.5" d="M365 559.5h0"/><path stroke="#abfc7b" stroke-width="5.5" d="M371.9 573.1h0"/><path stroke="#b4fd73" stroke-width="5.5" d="M370.1 587.2h0"/><path stroke="#bdfd6b" stroke-width="5.5" d="M348.1 564.1h0"/><path stroke="#c6fd64" stroke-width="5.5" d="M369.8 565.4h0m6.6 16.4h0"/><path stroke="#d0fd5e" stroke-width="5.5" d="M392.2 581.8h0"/><path stroke="#e4fe56" stroke-width="5.5" d="M353.9 583.3h0"/><path stroke="#f7f551" stroke-width="5.5" d="M364.2 570.1h0"/><path stroke="#fbe74d" stroke-width="5.5" d="M369 571.1h0"/><path stroke="#001df5" stroke-width="6" d="M502 590h0"/><path stroke="#0323f5" stroke-width="6" d="M452.6 554.9h0m13.7 20.4h0m13.4-4.7h0m5.4 16.8h0"/><path stroke="#092df5" stroke-width="6" d="M362.4 539.2h0m123.8 43.2h0"/><path stroke="#1039f5" stroke-width="6" d="M356.3 549.6h0m3.5-4.6h0m121.8 35.8h0"/><path stroke="#1847f5" stroke-width="6" d="M356.8 547.4h0m17.6 1.9h0m30.2-22.1h0"/><path stroke="#2055f5" stroke-width="6" d="M354 555.1h0m6.3-17.6h0m108.2 38h0m24.3 15.4h0m8.6 3.4h0"/><path stroke="#2864f6" stroke-width="6" d="M297.6 517.1h0m53.6 26.3h0m25.9 44.6h0m80.7-42.4h0m37.2 45.7h0m7.7-6.8h0"/><path stroke="#3073f6" stroke-width="6" d="M364.4 556.1h0m89.1-11.7h0m21.2 9.5h0"/><path stroke="#3986f7" stroke-width="6" d="M369.3 586.3h0m89.1-64.5h0m6.9 16.1h0m11.4 43.9h0"/><path stroke="#4195f7" stroke-width="6" d="M453.5 542.2h0"/><path stroke="#49a4f8" stroke-width="6" d="M326.8 564.8h0m134.6-35.1h0m10.3 24.4h0"/><path stroke="#51b4f9" stroke-width="6" d="M477.3 536.6h0m0.7 21.5h0m20.4 32.8h0"/><path stroke="#58c3f9" stroke-width="6" d="M441.5 533.4h0m0.5 5.8h0m19.7-7.8h0m0.9 4.4h0m9.5-1.7h0"/><path stroke="#60d3fa" stroke-width="6" d="M443.7 528.3h0m16 32.9h0"/><path stroke="#68e3f4" stroke-width="6" d="M342.4 558.8h0m37.7 15.7h0"/><path stroke="#71f2ea" stroke-width="6" d="M345.6 576.4h0m12 6h0"/><path stroke="#77fcdf" stroke-width="6" d="M364.8 562h0m22.8 16.1h0"/><path stroke="#7dfcc8" stroke-width="6" d="M352.6 564.5h0"/><path stroke="#86fcb1" stroke-width="6" d="M357 571.1h0m1.6-3.3h0"/><path stroke="#92fc9b" stroke-width="6" d="M370.5 584.9h0"/><path stroke="#abfc7b" stroke-width="6" d="M454.5 553.4h0"/><path stroke="#b4fd73" stroke-width="6" d="M349.3 565.7h0"/><path stroke="#c6fd64" stroke-width="6" d="M369.9 566.2h0m3.2 1.9h0"/><path stroke="#001df5" stroke-width="6.5" d="M499.2 587.7h0"/><path stroke="#0323f5" stroke-width="6.5" d="M390.9 540h0"/><path stroke="#092df5" stroke-width="6.5" d="M474.1 579.6h0m33.7 12.8h0"/><path stroke="#1039f5" stroke-width="6.5" d="M333.3 543.3h0m25.7-6.9h0m7 11h0m54.8-9.6h0m42.6 42.3h0"/><path stroke="#1847f5" stroke-width="6.5" d="M472.9 569.5h0m15.2 19.2h0"/><path stroke="#2055f5" stroke-width="6.5" d="M292.8 518.7h0m25.1-1.6h0m11.3 15.6h0m23.2-2.4h0m3.9 13.6h0m108.6 14.9h0m8.4 9.3h0"/><path stroke="#2864f6" stroke-width="6.5" d="M441 532.4h0m18.5 22.2h0"/><path stroke="#3073f6" stroke-width="6.5" d="M467.9 553h0"/><path stroke="#3986f7" stroke-width="6.5" d="M333.3 525.4h0"/><path stroke="#4195f7" stroke-width="6.5" d="M302.5 517.9h0m151.5 41.3h0m1.9-24h0m9.5 18.5h0m3.8 18.7h0"/><path stroke="#49a4f8" stroke-width="6.5" d="M325.2 524.6h0"/><path stroke="#51b4f9" stroke-width="6.5" d="M299.2 531.9h0"/><path stroke="#58c3f9" stroke-width="6.5" d="M357.2 566.2h0m27.5 9.2h0m83.2-44.7h0m7.8 45.1h0m32.5-41h0"/><path stroke="#60d3fa" stroke-width="6.5" d="M307.4 551.4h0m136.5-22.2h0"/><path stroke="#68e3f4" stroke-width="6.5" d="M452 536.6h0"/><path stroke="#77fcdf" stroke-width="6.5" d="M340.6 566.9h0"/><path stroke="#81fcbc" stroke-width="6.5" d="M352.5 568.6h0"/><path stroke="#86fcb1" stroke-width="6.5" d="M372.7 580.8h0"/><path stroke="#a3fc85" stroke-width="6.5" d="M341.4 568.4h0m123.6-23.2h0"/><path stroke="#f7f551" stroke-width="6.5" d="M355.6 559.1h0"/><path stroke="#001df5" stroke-width="7" d="M447.5 547.1h0"/><path stroke="#001df5" stroke-width="7" d="M398.4 520.9h0m46.9 5.4h0"/><path stroke="#0323f5" stroke-width="7" d="M464.6 566.9h0m34.5 21.6h0"/><path stroke="#092df5" stroke-width="7" d="M456.6 565.8h0"/><path stroke="#1039f5" stroke-width="7" d="M465.4 571.6h0"/><path stroke="#1847f5" stroke-width="7" d="M454.2 562.8h0m14.1-28.4h0m12.1 30.2h0"/><path stroke="#2055f5" stroke-width="7" d="M372.1 552.4h0m128.8 36.5h0"/><path stroke="#2864f6" stroke-width="7" d="M454.9 542.7h0m3.2 17.3h0"/><path stroke="#3986f7" stroke-width="7" d="M469.5 583.9h0m2.9-28.7h0"/><path stroke="#4195f7" stroke-width="7" d="M358.7 583.9h0m133.7 15.7h0"/><path stroke="#49a4f8" stroke-width="7" d="M507.9 520.1h0"/><path stroke="#51b4f9" stroke-width="7" d="M357.4 561.4h0m96.5-36.4h0"/><path stroke="#58c3f9" stroke-width="7" d="M465.5 544.7h0"/><path stroke="#60d3fa" stroke-width="7" d="M354.6 585.4h0m13.8-11.5h0m92.5-44.8h0m3.2 23.2h0"/><path stroke="#71f2ea" stroke-width="7" d="M477.7 559.3h0"/><path stroke="#7dfcc8" stroke-width="7" d="M390.8 584.8h0"/><path stroke="#c6fd64" stroke-width="7" d="M359.3 573.6h0m9.5-10.6h0"/><path stroke="#001ae3" stroke-width="7.5" d="M456.5 571.8h0"/><path stroke="#001df5" stroke-width="7.5" d="M450.9 557h0m31.2 16.5h0"/><path stroke="#0323f5" stroke-width="7.5" d="M471.9 567.6h0"/><path stroke="#1039f5" stroke-width="7.5" d="M361.9 546.7h0m64.8-23.9h0m7 24.7h0m1.3-20.5h0"/><path stroke="#1847f5" stroke-width="7.5" d="M356.3 537.8h0"/><path stroke="#2055f5" stroke-width="7.5" d="M458 567.5h0"/><path stroke="#3986f7" stroke-width="7.5" d="M451.6 523.6h0"/><path stroke="#49a4f8" stroke-width="7.5" d="M321.9 535.2h0"/><path stroke="#60d3fa" stroke-width="7.5" d="M336.9 559.7h0"/><path stroke="#7afcd3" stroke-width="7.5" d="M346.1 560.3h0m27.9 22.1h0"/><path stroke="#7dfcc8" stroke-width="7.5" d="M377.3 591.6h0"/><path stroke="#8cfca6" stroke-width="7.5" d="M345.4 577.6h0m35.2-6.8h0"/><path stroke="#0323f5" stroke-width="8" d="M474.7 573.3h0m9.7 15.8h0"/><path stroke="#1039f5" stroke-width="8" d="M455 541.1h0m43.4 43.7h0"/><path stroke="#2055f5" stroke-width="8" d="M455.3 572.8h0m7.8 5.7h0"/><path stroke="#3073f6" stroke-width="8" d="M497.6 586.4h0"/><path stroke="#4195f7" stroke-width="8" d="M479.8 587.3h0"/><path stroke="#49a4f8" stroke-width="8" d="M353.6 563.9h0"/><path stroke="#60d3fa" stroke-width="8" d="M375.4 582h0"/><path stroke="#81fcbc" stroke-width="8" d="M337.4 576.2h0"/><path stroke="#dafe59" stroke-width="8" d="M345.5 559.3h0m17.3 3.8h0"/><path stroke="#001df5" stroke-width="8.5" d="M440.1 548.4h0"/><path stroke="#1847f5" stroke-width="8.5" d="M504.8 580.4h0"/><path stroke="#3073f6" stroke-width="8.5" d="M459.7 562.6h0m10.5-6.8h0"/><path stroke="#3986f7" stroke-width="8.5" d="M377.5 547.5h0"/><path stroke="#4195f7" stroke-width="8.5" d="M476.8 555h0"/><path stroke="#60d3fa" stroke-width="8.5" d="M472.8 554.9h0"/><path stroke="#2055f5" stroke-width="9" d="M469.6 546.2h0m26.4 32.9h0"/><path stroke="#51b4f9" stroke-width="9" d="M373 581.2h0"/><path stroke="#001df5" stroke-width="9.5" d="M442.9 538.4h0"/><path stroke="#4195f7" stroke-width="9.5" d="M337.5 559.4h0m83.7-35.4h0"/><path stroke="#092df5" stroke-width="10" d="M445.2 527.8h0"/><path stroke="#b4fd73" stroke-width="2.5" d="M392.8 637.8h0"/><path stroke="#7afcd3" stroke-width="3" d="M387.4 578.4h0"/><path stroke="#d0fd5e" stroke-width="3" d="M389.4 634.9h0"/><path stroke="#eefe55" stroke-width="3" d="M400.2 607.5h0"/><path stroke="#f7f551" stroke-width="3" d="M383.3 627.6h0"/><path stroke="#eb4726" stroke-width="3" d="M401.3 637.8h0"/><path stroke="#85190f" stroke-width="3" d="M402 641h0"/><path stroke="#49a4f8" stroke-width="3.5" d="M347.8 565h0"/><path stroke="#60d3fa" stroke-width="3.5" d="M391.3 618.5h0"/><path stroke="#68e3f4" stroke-width="3.5" d="M368.9 625.5h0"/><path stroke="#7afcd3" stroke-width="3.5" d="M400.2 611.7h0"/><path stroke="#86fcb1" stroke-width="3.5" d="M367.5 601.9h0m14.4 33.3h0"/><path stroke="#99fc91" stroke-width="3.5" d="M401.7 651.8h0"/><path stroke="#a3fc85" stroke-width="3.5" d="M407.8 613.5h0"/><path stroke="#abfc7b" stroke-width="3.5" d="M397.8 625.2h0"/><path stroke="#c6fd64" stroke-width="3.5" d="M384.3 641h0"/><path stroke="#fbe74d" stroke-width="3.5" d="M394.2 616.7h0"/><path stroke="#f6ca45" stroke-width="3.5" d="M404.2 646.8h0"/><path stroke="#ee8231" stroke-width="3.5" d="M398.7 644.9h0"/><path stroke="#ec682c" stroke-width="3.5" d="M374.8 601h0"/><path stroke="#ea3e25" stroke-width="3.5" d="M370.6 597h0"/><path stroke="#ea3824" stroke-width="3.5" d="M405.8 641.2h0"/><path stroke="#a72116" stroke-width="3.5" d="M382.4 617.2h0"/><path stroke="#961d13" stroke-width="3.5" d="M394.1 626.3h0m7.2-13.9h0"/><path stroke="#85190f" stroke-width="3.5" d="M388 622h0"/><path stroke="#74140c" stroke-width="3.5" d="M397.2 630.4h0"/><path stroke="#3073f6" stroke-width="4" d="M403.9 642.4h0"/><path stroke="#49a4f8" stroke-width="4" d="M371.4 600.5h0"/><path stroke="#51b4f9" stroke-width="4" d="M364.8 589.5h0"/><path stroke="#58c3f9" stroke-width="4" d="M368.1 602.4h0m34.4 14.9h0m2.2 35.6h0m6.3-46.7h0"/><path stroke="#68e3f4" stroke-width="4" d="M363.6 613.4h0"/><path stroke="#77fcdf" stroke-width="4" d="M390.7 628.5h0"/><path stroke="#7afcd3" stroke-width="4" d="M368.7 610.7h0m33.9-10h0"/><path stroke="#8cfca6" stroke-width="4" d="M378.9 619h0m28.4 9.9h0"/><path stroke="#99fc91" stroke-width="4" d="M363 599.2h0"/><path stroke="#a3fc85" stroke-width="4" d="M364.2 602.7h0m36.8 4h0m13.8 19.7h0m15.6 26.3h0"/><path stroke="#b4fd73" stroke-width="4" d="M391 645.4h0m3.2-42.2h0m18.8 60.3h0"/><path stroke="#e4fe56" stroke-width="4" d="M385.1 628.5h0"/><path stroke="#eefe55" stroke-width="4" d="M410.5 612.7h0"/><path stroke="#f7f551" stroke-width="4" d="M371.7 589.3h0"/><path stroke="#fbe74d" stroke-width="4" d="M419.2 653.7h0"/><path stroke="#f3ae3d" stroke-width="4" d="M377.6 608h0"/><path stroke="#ee8231" stroke-width="4" d="M387.8 612.7h0"/><path stroke="#ec5c29" stroke-width="4" d="M395.4 632.4h0"/><path stroke="#eb4726" stroke-width="4" d="M369.3 597h0"/><path stroke="#ea3e25" stroke-width="4" d="M373.8 587.9h0"/><path stroke="#ea3824" stroke-width="4" d="M400.8 633.3h0m13.1-2.2h0"/><path stroke="#d93020" stroke-width="4" d="M412 609.7h0"/><path stroke="#961d13" stroke-width="4" d="M404.5 642.8h0"/><path stroke="#85190f" stroke-width="4" d="M383.4 610h0m13.5 9.9h0"/><path stroke="#74140c" stroke-width="4" d="M364.7 595.8h0m10 32.9h0m9.7-13.3h0m9.9 12.8h0m10.6 12.9h0"/><path stroke="#2864f6" stroke-width="4.5" d="M385.3 616.3h0"/><path stroke="#3073f6" stroke-width="4.5" d="M371.3 619.4h0"/><path stroke="#3986f7" stroke-width="4.5" d="M437.5 659h0"/><path stroke="#4195f7" stroke-width="4.5" d="M394.5 602.9h0"/><path stroke="#49a4f8" stroke-width="4.5" d="M376.7 621.3h0"/><path stroke="#51b4f9" stroke-width="4.5" d="M368.7 611.9h0m29.5 46.5h0"/><path stroke="#60d3fa" stroke-width="4.5" d="M370.7 605.5h0m19.1-27.6h0m16.7 89.3h0"/><path stroke="#68e3f4" stroke-width="4.5" d="M406.6 661.3h0m15.9-10.6h0"/><path stroke="#71f2ea" stroke-width="4.5" d="M403 657.1h0"/><path stroke="#77fcdf" stroke-width="4.5" d="M366.8 615.7h0m7.8 5.4h0m5.9-43.6h0"/><path stroke="#7dfcc8" stroke-width="4.5" d="M400.9 628.7h0"/><path stroke="#81fcbc" stroke-width="4.5" d="M383.4 637.1h0m20.7-6.6h0"/><path stroke="#86fcb1" stroke-width="4.5" d="M366.1 563.5h0m50.1 51.9h0"/><path stroke="#92fc9b" stroke-width="4.5" d="M372.3 621.8h0m16.2-35.5h0m5.7 24.3h0m3.4 16.3h0"/><path stroke="#99fc91" stroke-width="4.5" d="M387.8 643.3h0m19.9 18.6h0"/><path stroke="#a3fc85" stroke-width="4.5" d="M374.5 630.8h0m19.2 10.9h0m26.5 1.6h0"/><path stroke="#abfc7b" stroke-width="4.5" d="M343.3 574.7h0m63.1 33.1h0m15.8 48.8h0"/><path stroke="#b4fd73" stroke-width="4.5" d="M376.6 594.6h0"/><path stroke="#bdfd6b" stroke-width="4.5" d="M406.4 630.6h0m7.9 42.1h0"/><path stroke="#c6fd64" stroke-width="4.5" d="M394 654.1h0m13.6-7.2h0"/><path stroke="#eefe55" stroke-width="4.5" d="M374.1 603.5h0"/><path stroke="#f7f551" stroke-width="4.5" d="M391.4 614.8h0m37 40.8h0m0.2-3.3h0"/><path stroke="#fbe74d" stroke-width="4.5" d="M389.7 606.8h0"/><path stroke="#f3ae3d" stroke-width="4.5" d="M404.2 607.5h0"/><path stroke="#f1a039" stroke-width="4.5" d="M408.3 608.2h0"/><path stroke="#ee8231" stroke-width="4.5" d="M400.6 643.6h0"/><path stroke="#eb4726" stroke-width="4.5" d="M405.4 645.9h0"/><path stroke="#ea3824" stroke-width="4.5" d="M380.3 609.8h0"/><path stroke="#c82a1d" stroke-width="4.5" d="M395 624.5h0m0.9 6.1h0m17.2 15.5h0"/><path stroke="#85190f" stroke-width="4.5" d="M383.3 616.2h0m19.5-5.9h0m13.1 31.4h0"/><path stroke="#74140c" stroke-width="4.5" d="M380.4 609.2h0m7.6 8.3h0m1.3 1.4h0m5.3 9h0m3.5-25.1h0m1.1 26h0"/><path stroke="#3986f7" stroke-width="5" d="M412.4 668.5h0"/><path stroke="#49a4f8" stroke-width="5" d="M392.2 601.7h0m9.2 59.5h0"/><path stroke="#51b4f9" stroke-width="5" d="M350.4 583.3h0m63.9 86.6h0"/><path stroke="#60d3fa" stroke-width="5" d="M394.1 628.4h0"/><path stroke="#68e3f4" stroke-width="5" d="M406.3 631h0m8.4-19.2h0"/><path stroke="#71f2ea" stroke-width="5" d="M396.1 620.5h0m2.6 10.1h0m11.5-24.5h0"/><path stroke="#77fcdf" stroke-width="5" d="M402.6 605.4h0m5.3 57.6h0m1-51.6h0m8 30.7h0"/><path stroke="#7afcd3" stroke-width="5" d="M380.5 606h0m15.9 42.9h0"/><path stroke="#81fcbc" stroke-width="5" d="M366.8 616.8h0m16.2-8.6h0m53.5 44.2h0"/><path stroke="#86fcb1" stroke-width="5" d="M381.8 614.6h0"/><path stroke="#8cfca6" stroke-width="5" d="M401.4 669.1h0"/><path stroke="#92fc9b" stroke-width="5" d="M395 641.7h0m11.9 30h0m3.3-65.1h0m7.3 4h0"/><path stroke="#99fc91" stroke-width="5" d="M385 602.2h0m18.3 14.5h0m1.6 3.4h0m4.6 21.9h0m1.6-36.6h0"/><path stroke="#a3fc85" stroke-width="5" d="M393.2 653.1h0m1.9-38.2h0m6.5 14.9h0m6.6 28.8h0"/><path stroke="#abfc7b" stroke-width="5" d="M374 599.7h0m40.1 44h0"/><path stroke="#b4fd73" stroke-width="5" d="M382.4 609.7h0m25.8 23.6h0"/><path stroke="#bdfd6b" stroke-width="5" d="M407.7 608.4h0m10.4 35.8h0"/><path stroke="#c6fd64" stroke-width="5" d="M365.7 605.8h0m21 11.9h0"/><path stroke="#d0fd5e" stroke-width="5" d="M382.1 618.7h0"/><path stroke="#dafe59" stroke-width="5" d="M362.3 586.8h0"/><path stroke="#e4fe56" stroke-width="5" d="M373.8 616.1h0"/><path stroke="#eefe55" stroke-width="5" d="M369.7 600.4h0"/><path stroke="#f7f551" stroke-width="5" d="M388.3 609.2h0m16.3 32.1h0"/><path stroke="#fbe74d" stroke-width="5" d="M397.3 599.2h0m3.5 10.3h0m2.6-2.9h0"/><path stroke="#f9d849" stroke-width="5" d="M402.8 648.7h0"/><path stroke="#f5bc41" stroke-width="5" d="M396.9 642.2h0"/><path stroke="#f1a039" stroke-width="5" d="M386.6 640.8h0"/><path stroke="#ee8231" stroke-width="5" d="M414 643.4h0"/><path stroke="#eb4726" stroke-width="5" d="M380.6 615.9h0m9.6 3.1h0"/><path stroke="#ea3824" stroke-width="5" d="M368.5 592.6h0m4 33.4h0m35.3-19.3h0"/><path stroke="#d93020" stroke-width="5" d="M383.9 614.2h0m6.3 7.1h0m2.7 4.8h0m3.2-2h0"/><path stroke="#c82a1d" stroke-width="5" d="M376.5 612.8h0"/><path stroke="#b72619" stroke-width="5" d="M400.9 636.5h0"/><path stroke="#961d13" stroke-width="5" d="M366.5 603.3h0m4.8-2h0m23 26.4h0m2.7-1.2h0m1.1 8.4h0m3.4 8.9h0m10.2-3.8h0"/><path stroke="#85190f" stroke-width="5" d="M377 588.6h0m18.6 41.2h0m12.5 11.7h0"/><path stroke="#74140c" stroke-width="5" d="M386.8 605.8h0m8.8-8.7h0"/><path stroke="#49a4f8" stroke-width="5.5" d="M381.7 624h0m23.5 18.7h0"/><path stroke="#58c3f9" stroke-width="5.5" d="M392.2 637.2h0m17.5 29.1h0m19.7-19.9h0"/><path stroke="#60d3fa" stroke-width="5.5" d="M395.3 643.9h0m11.9-41.5h0m7.8 20.6h0"/><path stroke="#68e3f4" stroke-width="5.5" d="M417.6 652.1h0m14.8 4.3h0"/><path stroke="#71f2ea" stroke-width="5.5" d="M392.5 649.9h0"/><path stroke="#77fcdf" stroke-width="5.5" d="M385.5 608.4h0m16 39.1h0"/><path stroke="#7afcd3" stroke-width="5.5" d="M394.4 634h0m26.4 22h0"/><path stroke="#7dfcc8" stroke-width="5.5" d="M372.2 627h0m31.4-28.6h0m30.9 54.9h0"/><path stroke="#81fcbc" stroke-width="5.5" d="M367.5 569.3h0m30.7 65.9h0m26.2 8.6h0"/><path stroke="#86fcb1" stroke-width="5.5" d="M384 633.1h0m8.6-16.8h0"/><path stroke="#8cfca6" stroke-width="5.5" d="M364.2 567.7h0m15.5 61.8h0m5.9-17.3h0"/><path stroke="#92fc9b" stroke-width="5.5" d="M364.2 604.3h0m14.3 17h0m10.5-15.1h0"/><path stroke="#99fc91" stroke-width="5.5" d="M399.3 635.9h0"/><path stroke="#abfc7b" stroke-width="5.5" d="M398.5 627.4h0"/><path stroke="#b4fd73" stroke-width="5.5" d="M349.7 576.8h0m14.2 34.5h0m2.5-17.7h0m37.8 63h0m2.6-40.9h0m14.7 41.3h0m13.6-4.9h0"/><path stroke="#d0fd5e" stroke-width="5.5" d="M414.6 615.6h0m24.7 36.3h0"/><path stroke="#dafe59" stroke-width="5.5" d="M378.9 604.2h0m32.3 20.9h0m13.6 30.8h0"/><path stroke="#eefe55" stroke-width="5.5" d="M376.8 605.1h0m31.4 13h0m18.6 41.1h0"/><path stroke="#f6ca45" stroke-width="5.5" d="M364.2 597.7h0"/><path stroke="#f3ae3d" stroke-width="5.5" d="M369.5 609.2h0m9.9-2.5h0"/><path stroke="#ef8f35" stroke-width="5.5" d="M370.5 614.5h0m21.3-8.5h0"/><path stroke="#ee8231" stroke-width="5.5" d="M385.3 603.6h0m13.8 23.7h0"/><path stroke="#ed752f" stroke-width="5.5" d="M370.1 618.3h0"/><path stroke="#ec682c" stroke-width="5.5" d="M396.3 627.9h0"/><path stroke="#eb5127" stroke-width="5.5" d="M426.2 641.9h0"/><path stroke="#ea3e25" stroke-width="5.5" d="M357.4 591.6h0"/><path stroke="#ea3824" stroke-width="5.5" d="M363.7 596h0m18.9 17.5h0"/><path stroke="#d93020" stroke-width="5.5" d="M358.5 590h0m26 24.7h0m14.6 22.4h0"/><path stroke="#c82a1d" stroke-width="5.5" d="M367.4 599.5h0m38 46.4h0"/><path stroke="#a72116" stroke-width="5.5" d="M380.5 602.3h0"/><path stroke="#961d13" stroke-width="5.5" d="M370.8 601h0m14.3 12.8h0m0.1-12.8h0m6.3 19.4h0m3.4 8.4h0"/><path stroke="#85190f" stroke-width="5.5" d="M372.2 592.9h0m1.1-6.2h0m10.2 52.8h0m10.7-15.7h0"/><path stroke="#74140c" stroke-width="5.5" d="M386.4 621.3h0m3.2-2.4h0"/><path stroke="#3073f6" stroke-width="6" d="M373.6 602.5h0"/><path stroke="#4195f7" stroke-width="6" d="M371.6 625h0m14.6-20.6h0m41.6 39.5h0"/><path stroke="#49a4f8" stroke-width="6" d="M388.8 611.5h0m45.7 47.7h0"/><path stroke="#51b4f9" stroke-width="6" d="M347.8 560h0m41.2 74.2h0m23.3-16.2h0"/><path stroke="#60d3fa" stroke-width="6" d="M395.6 651.9h0m8.4-20h0m28.6 15.1h0"/><path stroke="#68e3f4" stroke-width="6" d="M404 603.3h0m20.4 57.8h0"/><path stroke="#7afcd3" stroke-width="6" d="M406.3 630.9h0"/><path stroke="#7dfcc8" stroke-width="6" d="M384.9 618.6h0m10.8 19h0"/><path stroke="#81fcbc" stroke-width="6" d="M367.6 599h0m15.7 6.8h0"/><path stroke="#86fcb1" stroke-width="6" d="M371.4 626.8h0m6.5-8.1h0m9.4-4.5h0"/><path stroke="#8cfca6" stroke-width="6" d="M386.7 624.3h0"/><path stroke="#99fc91" stroke-width="6" d="M362.9 598.2h0m33.2 43.1h0m11.8-30h0m5.4 28.1h0"/><path stroke="#a3fc85" stroke-width="6" d="M371.6 630.4h0m18.7-32.2h0m18.7 38.8h0"/><path stroke="#abfc7b" stroke-width="6" d="M409.3 630h0"/><path stroke="#bdfd6b" stroke-width="6" d="M396.8 641h0"/><path stroke="#c6fd64" stroke-width="6" d="M397.8 630.2h0"/><path stroke="#d0fd5e" stroke-width="6" d="M392.4 641.6h0m19.5-11.9h0"/><path stroke="#e4fe56" stroke-width="6" d="M363.4 604.7h0"/><path stroke="#eefe55" stroke-width="6" d="M369.6 621.9h0m9.8-16h0m35.1 58.4h0"/><path stroke="#f7f551" stroke-width="6" d="M403.7 642.4h0m4.1-0.5h0"/><path stroke="#f6ca45" stroke-width="6" d="M399.8 636.4h0m0.2 1.6h0m3.1 4.6h0"/><path stroke="#f5bc41" stroke-width="6" d="M416.5 638.9h0"/><path stroke="#f1a039" stroke-width="6" d="M434.5 661.7h0"/><path stroke="#ee8231" stroke-width="6" d="M385.1 605.3h0"/><path stroke="#ed752f" stroke-width="6" d="M404.6 646.6h0"/><path stroke="#eb5127" stroke-width="6" d="M369.7 622.9h0"/><path stroke="#ea3824" stroke-width="6" d="M401 625.2h0"/><path stroke="#d93020" stroke-width="6" d="M365.2 615.5h0"/><path stroke="#b72619" stroke-width="6" d="M422.5 647.3h0"/><path stroke="#a72116" stroke-width="6" d="M386.4 619.4h0m1.6 1.7h0"/><path stroke="#961d13" stroke-width="6" d="M359.9 590.5h0m20.2 12.8h0m0.5 2.5h0m6.4 11.9h0m4 3.6h0"/><path stroke="#85190f" stroke-width="6" d="M375.6 603.3h0m17.1-2.2h0m10.6 37.4h0"/><path stroke="#74140c" stroke-width="6" d="M363.1 595.3h0m26.6 23.6h0m2.4 22.3h0m6.2-27.6h0m19.2 0.9h0"/><path stroke="#2864f6" stroke-width="6.5" d="M415.3 605.6h0"/><path stroke="#3073f6" stroke-width="6.5" d="M347.8 576.3h0"/><path stroke="#4195f7" stroke-width="6.5" d="M383.9 604.7h0m1.2-7.3h0m19.2 51.7h0m4.5 16h0m1.2-51.9h0"/><path stroke="#49a4f8" stroke-width="6.5" d="M398.7 603.2h0m3.3 51.4h0m8.8 14.5h0"/><path stroke="#51b4f9" stroke-width="6.5" d="M392.9 645.7h0m11.5 21.5h0"/><path stroke="#58c3f9" stroke-width="6.5" d="M364.6 614.3h0m73.6 39.5h0"/><path stroke="#60d3fa" stroke-width="6.5" d="M356.3 577.6h0m43.8 87.2h0m4.4-48.9h0m1.5 34.3h0m7.6 13.6h0m4.6-5.4h0"/><path stroke="#7afcd3" stroke-width="6.5" d="M364 599.2h0"/><path stroke="#7dfcc8" stroke-width="6.5" d="M384.6 611h0"/><path stroke="#81fcbc" stroke-width="6.5" d="M405 651.7h0"/><path stroke="#86fcb1" stroke-width="6.5" d="M384.4 611.5h0m28.8 14.1h0"/><path stroke="#8cfca6" stroke-width="6.5" d="M392.5 614.2h0"/><path stroke="#92fc9b" stroke-width="6.5" d="M400.1 630.3h0"/><path stroke="#99fc91" stroke-width="6.5" d="M377.4 635.7h0m26.7-11.9h0"/><path stroke="#a3fc85" stroke-width="6.5" d="M375 628.8h0m34.4-10.9h0m14.2 51.3h0"/><path stroke="#abfc7b" stroke-width="6.5" d="M386.1 631h0m21 6.8h0"/><path stroke="#b4fd73" stroke-width="6.5" d="M391 596.6h0m14.3 51.9h0"/><path stroke="#d0fd5e" stroke-width="6.5" d="M411.6 655.2h0"/><path stroke="#dafe59" stroke-width="6.5" d="M437.7 655.4h0"/><path stroke="#f7f551" stroke-width="6.5" d="M386.8 596.9h0m15.2 24.2h0"/><path stroke="#f1a039" stroke-width="6.5" d="M422.3 638.4h0"/><path stroke="#ee8231" stroke-width="6.5" d="M388.3 615.1h0"/><path stroke="#d93020" stroke-width="6.5" d="M381.8 613.2h0"/><path stroke="#961d13" stroke-width="6.5" d="M368.2 598.3h0m10.6 6.3h0m19.3 15.8h0"/><path stroke="#85190f" stroke-width="6.5" d="M400.7 618.1h0m4.5 18.5h0"/><path stroke="#1039f5" stroke-width="7" d="M382.5 598.7h0"/><path stroke="#4195f7" stroke-width="7" d="M413.7 637.2h0"/><path stroke="#51b4f9" stroke-width="7" d="M387 608.2h0"/><path stroke="#68e3f4" stroke-width="7" d="M397.3 632.1h0m23.6 4.8h0"/><path stroke="#71f2ea" stroke-width="7" d="M359.8 565.9h0m9.6 8.8h0m11.4 19.3h0"/><path stroke="#7afcd3" stroke-width="7" d="M422.3 655.9h0"/><path stroke="#7dfcc8" stroke-width="7" d="M389.6 611h0m20.9 34.1h0"/><path stroke="#86fcb1" stroke-width="7" d="M368.2 611.6h0m38 52h0"/><path stroke="#92fc9b" stroke-width="7" d="M403.7 648.5h0"/><path stroke="#99fc91" stroke-width="7" d="M404.2 636.9h0"/><path stroke="#a3fc85" stroke-width="7" d="M371.8 563.5h0m2.1 67.2h0m13.4-54h0"/><path stroke="#b4fd73" stroke-width="7" d="M363 607.3h0m45.1-6.7h0"/><path stroke="#e4fe56" stroke-width="7" d="M406.3 604.9h0m5.7 50.9h0"/><path stroke="#eefe55" stroke-width="7" d="M342.8 561.6h0"/><path stroke="#fbe74d" stroke-width="7" d="M423.6 642.2h0"/><path stroke="#f9d849" stroke-width="7" d="M393.5 645.6h0"/><path stroke="#ee8231" stroke-width="7" d="M388.2 632h0"/><path stroke="#eb4726" stroke-width="7" d="M389.9 626.4h0"/><path stroke="#d93020" stroke-width="7" d="M379.8 622.9h0"/><path stroke="#961d13" stroke-width="7" d="M378.7 608.3h0"/><path stroke="#85190f" stroke-width="7" d="M389.6 634.1h0"/><path stroke="#74140c" stroke-width="7" d="M374.3 599.1h0m18 31.7h0"/><path stroke="#1039f5" stroke-width="7.5" d="M367.2 611h0"/><path stroke="#3986f7" stroke-width="7.5" d="M387.4 629.5h0"/><path stroke="#51b4f9" stroke-width="7.5" d="M412.7 664.3h0m7.9-1.8h0"/><path stroke="#58c3f9" stroke-width="7.5" d="M374.6 595.8h0"/><path stroke="#60d3fa" stroke-width="7.5" d="M424.9 666h0"/><path stroke="#68e3f4" stroke-width="7.5" d="M365.6 607.7h0m35.1 30.9h0"/><path stroke="#71f2ea" stroke-width="7.5" d="M369.7 605.4h0"/><path stroke="#7afcd3" stroke-width="7.5" d="M405.4 629.2h0"/><path stroke="#7dfcc8" stroke-width="7.5" d="M389.4 632.2h0m3.1 14.8h0"/><path stroke="#81fcbc" stroke-width="7.5" d="M383 639.6h0"/><path stroke="#92fc9b" stroke-width="7.5" d="M407.5 610.1h0"/><path stroke="#b4fd73" stroke-width="7.5" d="M357.2 569.2h0"/><path stroke="#bdfd6b" stroke-width="7.5" d="M394.8 605.6h0"/><path stroke="#d0fd5e" stroke-width="7.5" d="M363.7 601.1h0"/><path stroke="#dafe59" stroke-width="7.5" d="M411.3 616.3h0"/><path stroke="#eefe55" stroke-width="7.5" d="M431.5 661.3h0"/><path stroke="#fbe74d" stroke-width="7.5" d="M383.1 617.7h0"/><path stroke="#f9d849" stroke-width="7.5" d="M353.8 568.2h0m73.2 86.5h0"/><path stroke="#f6ca45" stroke-width="7.5" d="M366.7 597h0"/><path stroke="#f5bc41" stroke-width="7.5" d="M410.7 613.2h0"/><path stroke="#b72619" stroke-width="7.5" d="M398.3 639.7h0"/><path stroke="#4195f7" stroke-width="8" d="M389.9 612h0"/><path stroke="#51b4f9" stroke-width="8" d="M395.4 597.7h0"/><path stroke="#58c3f9" stroke-width="8" d="M391.7 647.2h0"/><path stroke="#68e3f4" stroke-width="8" d="M420.6 643.6h0"/><path stroke="#71f2ea" stroke-width="8" d="M405.8 607.5h0"/><path stroke="#7dfcc8" stroke-width="8" d="M413.3 625.6h0"/><path stroke="#81fcbc" stroke-width="8" d="M384 630.5h0"/><path stroke="#86fcb1" stroke-width="8" d="M405.9 671.8h0"/><path stroke="#abfc7b" stroke-width="8" d="M379.4 580.2h0"/><path stroke="#b4fd73" stroke-width="8" d="M414.4 617.2h0"/><path stroke="#f7f551" stroke-width="8" d="M380.9 628.3h0"/><path stroke="#f1a039" stroke-width="8" d="M409.5 655.4h0"/><path stroke="#ed752f" stroke-width="8" d="M391.8 613.6h0"/><path stroke="#eb4726" stroke-width="8" d="M382.4 613.6h0"/><path stroke="#49a4f8" stroke-width="8.5" d="M404.6 642.3h0"/><path stroke="#81fcbc" stroke-width="8.5" d="M381.5 603.8h0"/><path stroke="#8cfca6" stroke-width="8.5" d="M391.3 603.5h0"/><path stroke="#a3fc85" stroke-width="8.5" d="M379.3 594.4h0"/><path stroke="#abfc7b" stroke-width="8.5" d="M409.6 645.5h0"/><path stroke="#fbe74d" stroke-width="8.5" d="M395.2 644.5h0"/><path stroke="#f1a039" stroke-width="8.5" d="M403.5 671.6h0"/><path stroke="#2864f6" stroke-width="9" d="M409.6 629.6h0"/><path stroke="#58c3f9" stroke-width="9" d="M410 672.2h0"/><path stroke="#7afcd3" stroke-width="9" d="M433.4 655.5h0"/><path stroke="#7dfcc8" stroke-width="9" d="M404.2 640.5h0"/><path stroke="#8cfca6" stroke-width="9" d="M389.8 626.1h0"/><path stroke="#961d13" stroke-width="9" d="M373.5 602.1h0m10.8 38.1h0"/><path stroke="#49a4f8" stroke-width="9.5" d="M406.4 650.3h0"/><path stroke="#86fcb1" stroke-width="9.5" d="M350.8 565.3h0"/><path stroke="#a3fc85" stroke-width="9.5" d="M391.9 608.6h0"/><path stroke="#86fcb1" stroke-width="10" d="M380.9 636.5h0"/><path stroke="#dafe59" stroke-width="10" d="M425.6 666.4h0"/><path stroke="#fbe74d" stroke-width="10" d="M418.8 650.2h0"/><path stroke="#2055f5" stroke-width="2.5" d="M452.1 659.8h0"/><path stroke="#001ae3" stroke-width="3" d="M497.3 638.7h0"/><path stroke="#092df5" stroke-width="3" d="M483 636.9h0m31.5 26.7h0"/><path stroke="#2864f6" stroke-width="3" d="M500.3 664.3h0"/><path stroke="#3986f7" stroke-width="3" d="M484.3 660.5h0"/><path stroke="#92fc9b" stroke-width="3" d="M483.6 701.9h0"/><path stroke="#85190f" stroke-width="3" d="M381.1 610.3h0"/><path stroke="#74140c" stroke-width="3" d="M377.1 607.9h0"/><path stroke="#001df5" stroke-width="3.5" d="M486.6 655.5h0"/><path stroke="#001df5" stroke-width="3.5" d="M508.9 663.7h0m5.5 13.3h0"/><path stroke="#0323f5" stroke-width="3.5" d="M510.9 650h0"/><path stroke="#092df5" stroke-width="3.5" d="M481.2 643.7h0m13.8 8.5h0m14.5 23.1h0"/><path stroke="#1039f5" stroke-width="3.5" d="M448.7 602.8h0"/><path stroke="#2055f5" stroke-width="3.5" d="M438.3 572h0"/><path stroke="#7afcd3" stroke-width="3.5" d="M403.3 675.4h0m33.9 24.5h0"/><path stroke="#dafe59" stroke-width="3.5" d="M488.2 740.3h0"/><path stroke="#ed752f" stroke-width="3.5" d="M417.4 678.1h0"/><path stroke="#ea3e25" stroke-width="3.5" d="M420.1 689.9h0"/><path stroke="#85190f" stroke-width="3.5" d="M406.5 644.3h0"/><path stroke="#74140c" stroke-width="3.5" d="M364 598.4h0"/><path stroke="#001df5" stroke-width="4" d="M442.6 608h0m16.1 17.2h0"/><path stroke="#001df5" stroke-width="4" d="M431.5 593.8h0m33.5 21.7h0"/><path stroke="#0323f5" stroke-width="4" d="M446.2 599.5h0m14.1 23.8h0"/><path stroke="#092df5" stroke-width="4" d="M437.9 599.1h0m5.3 5.4h0m26.1 30h0m24.8 19.7h0"/><path stroke="#1039f5" stroke-width="4" d="M482.6 632h0m13.3 7.2h0m28.8 26.3h0m3 24h0"/><path stroke="#1847f5" stroke-width="4" d="M460.9 620.5h0m58.2 52.7h0"/><path stroke="#2055f5" stroke-width="4" d="M488.2 645.3h0m8.7 19.1h0"/><path stroke="#2864f6" stroke-width="4" d="M421.9 559.3h0m9.1 11.9h0m1.3 28.9h0m7.2-5.7h0m45.5 41.1h0"/><path stroke="#3073f6" stroke-width="4" d="M414 568.5h0m53.8 65.7h0m29.9 25.6h0"/><path stroke="#3986f7" stroke-width="4" d="M469.5 644.7h0"/><path stroke="#4195f7" stroke-width="4" d="M437 675.8h0"/><path stroke="#51b4f9" stroke-width="4" d="M400.4 550.7h0"/><path stroke="#58c3f9" stroke-width="4" d="M422.3 573.6h0m2.3-24.1h0"/><path stroke="#77fcdf" stroke-width="4" d="M493.6 751h0"/><path stroke="#7afcd3" stroke-width="4" d="M458.2 672.8h0"/><path stroke="#7dfcc8" stroke-width="4" d="M486.9 760.3h0"/><path stroke="#86fcb1" stroke-width="4" d="M419.8 674.5h0"/><path stroke="#fbe74d" stroke-width="4" d="M494.3 756.3h0"/><path stroke="#f5bc41" stroke-width="4" d="M469.5 741.6h0"/><path stroke="#ef8f35" stroke-width="4" d="M403.8 644.7h0"/><path stroke="#ea3e25" stroke-width="4" d="M368.8 600.1h0m140.8 176.3h0"/><path stroke="#a72116" stroke-width="4" d="M392.6 626.8h0"/><path stroke="#961d13" stroke-width="4" d="M367.7 600h0"/><path stroke="#85190f" stroke-width="4" d="M372.8 603.4h0m22.4 22.3h0"/><path stroke="#001df5" stroke-width="4.5" d="M440.2 603h0m22.6 17.4h0"/><path stroke="#001df5" stroke-width="4.5" d="M450.4 616.7h0m12-6.8h0"/><path stroke="#0323f5" stroke-width="4.5" d="M453.8 622.7h0m7.6-7.6h0m9.5 21.7h0m6-4.3h0m14.6 10h0m13.7 30.3h0m8.4 24.7h0"/><path stroke="#092df5" stroke-width="4.5" d="M440.7 609.5h0m9.6-6.2h0m4 26.5h0m45.4 31.3h0m14.5 8.8h0"/><path stroke="#1039f5" stroke-width="4.5" d="M510.2 660.1h0m26.2 32h0"/><path stroke="#2055f5" stroke-width="4.5" d="M424.9 577.7h0m48 75.7h0m28 3.7h0m24.8 103.9h0"/><path stroke="#2864f6" stroke-width="4.5" d="M403 570.9h0m11 93.3h0m14.2-97.1h0m25.9 81.2h0m56.3 24.2h0"/><path stroke="#3073f6" stroke-width="4.5" d="M437.7 680.2h0m8.3-103.6h0m64.5 80.4h0"/><path stroke="#3986f7" stroke-width="4.5" d="M400.2 572.2h0m74 87.6h0"/><path stroke="#4195f7" stroke-width="4.5" d="M399.3 555.9h0m32.6-6h0"/><path stroke="#49a4f8" stroke-width="4.5" d="M421.6 568.5h0"/><path stroke="#51b4f9" stroke-width="4.5" d="M399.6 582.9h0m16.9-13.5h0m10.5-15.8h0m39.8 181.1h0"/><path stroke="#58c3f9" stroke-width="4.5" d="M410.7 593h0m36.3-38.8h0"/><path stroke="#77fcdf" stroke-width="4.5" d="M411.4 643.1h0"/><path stroke="#7afcd3" stroke-width="4.5" d="M416.6 585.9h0"/><path stroke="#7dfcc8" stroke-width="4.5" d="M408.5 590h0"/><path stroke="#81fcbc" stroke-width="4.5" d="M409.3 652.4h0"/><path stroke="#86fcb1" stroke-width="4.5" d="M482.9 736.3h0m14.4 27.8h0"/><path stroke="#92fc9b" stroke-width="4.5" d="M490.9 773.7h0"/><path stroke="#abfc7b" stroke-width="4.5" d="M466.6 727.4h0"/><path stroke="#b4fd73" stroke-width="4.5" d="M466.3 718.3h0"/><path stroke="#bdfd6b" stroke-width="4.5" d="M412.6 571.1h0"/><path stroke="#f3ae3d" stroke-width="4.5" d="M392.4 631.8h0"/><path stroke="#ee8231" stroke-width="4.5" d="M502.3 762.3h0"/><path stroke="#a72116" stroke-width="4.5" d="M363.6 595.4h0"/><path stroke="#961d13" stroke-width="4.5" d="M389.9 619.8h0"/><path stroke="#85190f" stroke-width="4.5" d="M363.3 598.5h0m37.4 39.7h0m1.1 3.6h0m108.5 121.9h0"/><path stroke="#74140c" stroke-width="4.5" d="M379.6 606.9h0m23 26.5h0"/><path stroke="#0017d2" stroke-width="5" d="M455.9 623.1h0"/><path stroke="#001ae3" stroke-width="5" d="M501.9 659.6h0"/><path stroke="#001df5" stroke-width="5" d="M459.7 608.6h0m38.7 45.8h0"/><path stroke="#001df5" stroke-width="5" d="M435.2 608.4h0m11.2 0.2h0m29.2 39.7h0"/><path stroke="#0323f5" stroke-width="5" d="M436.4 601.6h0m4.1-15.8h0m10.3 21.5h0m12.7 13.4h0m66.8 96.2h0"/><path stroke="#092df5" stroke-width="5" d="M437.9 596.8h0m0.6 18.6h0m26.1 17.6h0m0.2-29.9h0m52.7 61.4h0m5.3-3.8h0"/><path stroke="#1039f5" stroke-width="5" d="M434 583.4h0m5.7 14.7h0m0.4-9.9h0m68.7 75.6h0"/><path stroke="#1847f5" stroke-width="5" d="M437.1 564.8h0m5.5 37.7h0m69.2 80.4h0"/><path stroke="#2055f5" stroke-width="5" d="M426.9 566.4h0m19.1 7.2h0m9.4 41.2h0m12.1 79.1h0m5.1 15.4h0m23-27.2h0"/><path stroke="#2864f6" stroke-width="5" d="M410.5 578.5h0m9.9 2.7h0m5.7 1.8h0m21.7 1.1h0m4.2 9.7h0"/><path stroke="#3073f6" stroke-width="5" d="M401.9 578.9h0m36.7 3.4h0m58.7 76.6h0"/><path stroke="#3986f7" stroke-width="5" d="M501.5 640h0"/><path stroke="#4195f7" stroke-width="5" d="M449.2 565h0"/><path stroke="#49a4f8" stroke-width="5" d="M435.3 552.2h0m9.4 33.7h0m32.8 155.7h0"/><path stroke="#51b4f9" stroke-width="5" d="M427.3 556.1h0m56.9 174.8h0"/><path stroke="#58c3f9" stroke-width="5" d="M410.4 570.9h0m11.3-11.8h0m9.6 3.3h0"/><path stroke="#60d3fa" stroke-width="5" d="M409.9 549.4h0"/><path stroke="#77fcdf" stroke-width="5" d="M478.2 742.3h0"/><path stroke="#81fcbc" stroke-width="5" d="M416 557.6h0m16.8 4.1h0"/><path stroke="#8cfca6" stroke-width="5" d="M467.9 734.8h0"/><path stroke="#92fc9b" stroke-width="5" d="M407.5 650h0"/><path stroke="#a3fc85" stroke-width="5" d="M410.4 572.7h0m12.3-11.8h0"/><path stroke="#abfc7b" stroke-width="5" d="M427.5 552.3h0"/><path stroke="#e4fe56" stroke-width="5" d="M412.2 575.6h0"/><path stroke="#eb5127" stroke-width="5" d="M418.6 666h0"/><path stroke="#a72116" stroke-width="5" d="M404.5 642.6h0m0.8 3.7h0"/><path stroke="#85190f" stroke-width="5" d="M373.1 600.1h0m1.9 3.8h0m9.7 13.7h0m18.1 23.2h0"/><path stroke="#74140c" stroke-width="5" d="M397.4 631.7h0"/><path stroke="#001df5" stroke-width="5.5" d="M509 663.3h0"/><path stroke="#001df5" stroke-width="5.5" d="M434.2 593.1h0m14.6 9.9h0m34.8 65.5h0"/><path stroke="#0323f5" stroke-width="5.5" d="M442.4 584.2h0m22.7 49h0m19.7-6.7h0m13.5 21.9h0"/><path stroke="#092df5" stroke-width="5.5" d="M519.3 667.5h0"/><path stroke="#1039f5" stroke-width="5.5" d="M477.5 645.3h0m13.4 13.4h0m1.3 31.4h0m8.1-18.3h0m25.1 43.7h0"/><path stroke="#1847f5" stroke-width="5.5" d="M405.3 574.8h0m32.6 4h0m13.4 26.3h0m32.2 35.3h0"/><path stroke="#2055f5" stroke-width="5.5" d="M419.4 593.1h0m1.9-17.5h0m1.3-17.6h0m16.5-2.5h0m20.1 65.9h0m3.6 21.3h0m14.7 76.2h0m33.1-52.3h0"/><path stroke="#2864f6" stroke-width="5.5" d="M416.8 564.7h0m2.3-5.1h0m36.4 141.2h0m46.5-40.9h0"/><path stroke="#3073f6" stroke-width="5.5" d="M401.1 573.6h0m26.3 14.6h0m0.1-33.3h0m22.6 13.5h0m55.3 96.8h0"/><path stroke="#3986f7" stroke-width="5.5" d="M412.8 578.6h0m3.1-10.4h0m51.5 43.7h0"/><path stroke="#4195f7" stroke-width="5.5" d="M398.2 572.6h0m32.1-13.9h0m28 152.2h0m27.3 37.3h0"/><path stroke="#49a4f8" stroke-width="5.5" d="M432.3 588.6h0m9 12.8h0m28.3 125.2h0"/><path stroke="#51b4f9" stroke-width="5.5" d="M437.6 585.2h0m12-11.3h0m1.5-10.3h0m8.1 140.2h0"/><path stroke="#58c3f9" stroke-width="5.5" d="M399.6 587.7h0m11.4 2.1h0m1.4-28.2h0m15.1 30.4h0m11.7-19.8h0"/><path stroke="#60d3fa" stroke-width="5.5" d="M403.3 570.5h0m80.5 183.2h0m1.8-5.4h0"/><path stroke="#7afcd3" stroke-width="5.5" d="M432.1 588.8h0m5.2-6h0m29.8 143.2h0"/><path stroke="#7dfcc8" stroke-width="5.5" d="M473.5 734.9h0"/><path stroke="#8cfca6" stroke-width="5.5" d="M406.6 581.9h0"/><path stroke="#92fc9b" stroke-width="5.5" d="M404.7 652.1h0m14.1 8h0m2.5 0.4h0"/><path stroke="#99fc91" stroke-width="5.5" d="M404.9 652.5h0"/><path stroke="#a3fc85" stroke-width="5.5" d="M415.9 584.9h0m33.6 138h0m11.7-9.4h0m26.4 41.5h0"/><path stroke="#c6fd64" stroke-width="5.5" d="M409.3 650.8h0"/><path stroke="#dafe59" stroke-width="5.5" d="M415.7 662.6h0"/><path stroke="#e4fe56" stroke-width="5.5" d="M511.6 772.4h0"/><path stroke="#f9d849" stroke-width="5.5" d="M424.6 648.4h0"/><path stroke="#eb4726" stroke-width="5.5" d="M507 769h0"/><path stroke="#d93020" stroke-width="5.5" d="M387.9 618.4h0"/><path stroke="#b72619" stroke-width="5.5" d="M372 602.8h0"/><path stroke="#a72116" stroke-width="5.5" d="M369.5 600.1h0m36.7 44.5h0"/><path stroke="#961d13" stroke-width="5.5" d="M364.8 597.6h0"/><path stroke="#0017d2" stroke-width="6" d="M474.2 630.3h0"/><path stroke="#001df5" stroke-width="6" d="M454.6 600.3h0"/><path stroke="#0323f5" stroke-width="6" d="M445.3 612.9h0m22.6 18.8h0m10.3-2.9h0"/><path stroke="#092df5" stroke-width="6" d="M420.9 563.5h0m8.5 29.9h0m26.5 20.4h0"/><path stroke="#1039f5" stroke-width="6" d="M481.6 652h0m24 43.5h0m2-8.7h0m9.6-17.6h0"/><path stroke="#1847f5" stroke-width="6" d="M417.9 585.7h0m67.7 68.7h0m5-14.6h0m17.9 17.8h0"/><path stroke="#2055f5" stroke-width="6" d="M403.4 560.7h0m22.7-7.3h0m37.6 158.1h0m12.5 39.5h0"/><path stroke="#2864f6" stroke-width="6" d="M416.2 548.6h0m7.8 0.1h0m7.5 39.7h0m8.1-15.7h0m69 84.1h0"/><path stroke="#3073f6" stroke-width="6" d="M427.6 581.5h0m1.2-5h0m42.1 45.7h0m9.9 9.6h0"/><path stroke="#3986f7" stroke-width="6" d="M413.2 561h0m5.1 32.6h0m25.7-8.7h0m71 88.8h0"/><path stroke="#4195f7" stroke-width="6" d="M412.3 572.6h0m16.5 94.7h0m5.6-94.9h0m82.8 87.7h0"/><path stroke="#49a4f8" stroke-width="6" d="M406.8 575h0m0.7 6.2h0m9 11h0m19.6-31.6h0"/><path stroke="#51b4f9" stroke-width="6" d="M404.1 584.7h0m2.1 80.6h0m5.3-87h0m30-6.7h0m18 137.9h0"/><path stroke="#58c3f9" stroke-width="6" d="M439 569h0m3.8-1.3h0"/><path stroke="#60d3fa" stroke-width="6" d="M413.1 656.1h0m51.7 76.1h0"/><path stroke="#68e3f4" stroke-width="6" d="M420.7 652.6h0"/><path stroke="#7afcd3" stroke-width="6" d="M415.1 551.6h0"/><path stroke="#7dfcc8" stroke-width="6" d="M501.6 768.3h0"/><path stroke="#81fcbc" stroke-width="6" d="M411.3 571.3h0"/><path stroke="#86fcb1" stroke-width="6" d="M400.2 588.8h0"/><path stroke="#8cfca6" stroke-width="6" d="M425.5 666.2h0m68.2 85.6h0"/><path stroke="#a3fc85" stroke-width="6" d="M401 661.1h0m58.3 46.7h0"/><path stroke="#abfc7b" stroke-width="6" d="M458.8 726.9h0"/><path stroke="#d0fd5e" stroke-width="6" d="M422.4 645.3h0"/><path stroke="#dafe59" stroke-width="6" d="M420.1 644.2h0m28.7 74.7h0"/><path stroke="#f7f551" stroke-width="6" d="M420 661.3h0"/><path stroke="#a72116" stroke-width="6" d="M396.1 627h0"/><path stroke="#001ae3" stroke-width="6.5" d="M443.7 596.3h0"/><path stroke="#001df5" stroke-width="6.5" d="M438.8 598.6h0"/><path stroke="#092df5" stroke-width="6.5" d="M500.3 662.9h0m6.7 4.7h0"/><path stroke="#1039f5" stroke-width="6.5" d="M449.8 606.9h0m21.5 11h0"/><path stroke="#1847f5" stroke-width="6.5" d="M409 563.9h0m24.8 4.2h0"/><path stroke="#2055f5" stroke-width="6.5" d="M397.1 570.2h0m34.5-18.6h0m1.8 119.1h0m28.3 45.7h0"/><path stroke="#2864f6" stroke-width="6.5" d="M403 584.7h0m29.9-11.2h0"/><path stroke="#3073f6" stroke-width="6.5" d="M419.4 583.4h0m16.4-15.5h0"/><path stroke="#3986f7" stroke-width="6.5" d="M425.2 556.5h0m12.8 2.3h0"/><path stroke="#4195f7" stroke-width="6.5" d="M427.5 667.5h0m1.9 0.9h0"/><path stroke="#49a4f8" stroke-width="6.5" d="M431.7 561.2h0"/><path stroke="#51b4f9" stroke-width="6.5" d="M406.2 587.7h0m8.3 56.3h0m4.5-66.8h0m67.2 189.8h0"/><path stroke="#58c3f9" stroke-width="6.5" d="M418.2 653.4h0"/><path stroke="#60d3fa" stroke-width="6.5" d="M399.8 559.3h0"/><path stroke="#68e3f4" stroke-width="6.5" d="M423.3 640.4h0"/><path stroke="#71f2ea" stroke-width="6.5" d="M479.4 737.1h0"/><path stroke="#81fcbc" stroke-width="6.5" d="M431.6 553.6h0"/><path stroke="#86fcb1" stroke-width="6.5" d="M428.1 649.9h0m36.3 74.3h0m4.5 2.2h0"/><path stroke="#99fc91" stroke-width="6.5" d="M469.3 732h0"/><path stroke="#b4fd73" stroke-width="6.5" d="M425.1 581h0"/><path stroke="#bdfd6b" stroke-width="6.5" d="M426.1 653h0m19.1-98.4h0"/><path stroke="#c6fd64" stroke-width="6.5" d="M434.7 565h0"/><path stroke="#ea3e25" stroke-width="6.5" d="M379.8 606.5h0"/><path stroke="#b72619" stroke-width="6.5" d="M364.4 598.8h0"/><path stroke="#a72116" stroke-width="6.5" d="M375 604.4h0m1.7-3.9h0"/><path stroke="#74140c" stroke-width="6.5" d="M384.9 610.4h0"/><path stroke="#001df5" stroke-width="7" d="M447.2 588.3h0"/><path stroke="#1039f5" stroke-width="7" d="M429.7 563.3h0m4.1-6h0m2.1 120.7h0m53 76h0"/><path stroke="#1847f5" stroke-width="7" d="M399 586.3h0m6.7-32.2h0m74.3 89.3h0m1.1-22.6h0"/><path stroke="#2864f6" stroke-width="7" d="M400.8 550.4h0m11.1 8.5h0m0.6 27.4h0m14.4-16.7h0m8.2 10.8h0"/><path stroke="#3073f6" stroke-width="7" d="M425.2 562h0m4.2 108.3h0"/><path stroke="#3986f7" stroke-width="7" d="M472.1 641.1h0"/><path stroke="#4195f7" stroke-width="7" d="M444.2 690.8h0m34.4-50.4h0"/><path stroke="#49a4f8" stroke-width="7" d="M412.4 577.1h0m22.5-17.5h0m3.8 121h0m1.5-125.8h0"/><path stroke="#51b4f9" stroke-width="7" d="M420.3 549.9h0m17.7 22.4h0"/><path stroke="#58c3f9" stroke-width="7" d="M469.1 718.3h0"/><path stroke="#60d3fa" stroke-width="7" d="M405.4 591h0"/><path stroke="#71f2ea" stroke-width="7" d="M487 749.7h0"/><path stroke="#77fcdf" stroke-width="7" d="M487.3 745.8h0"/><path stroke="#81fcbc" stroke-width="7" d="M422.8 641.8h0"/><path stroke="#86fcb1" stroke-width="7" d="M437 578.9h0"/><path stroke="#99fc91" stroke-width="7" d="M484.2 746.3h0"/><path stroke="#b4fd73" stroke-width="7" d="M472.6 735.8h0"/><path stroke="#961d13" stroke-width="7" d="M399.1 633.2h0"/><path stroke="#0323f5" stroke-width="7.5" d="M512.6 669.5h0"/><path stroke="#1039f5" stroke-width="7.5" d="M458.9 611.7h0"/><path stroke="#1847f5" stroke-width="7.5" d="M429 666.4h0m11.5-59.3h0m6.2 17.6h0"/><path stroke="#2864f6" stroke-width="7.5" d="M406.2 579.8h0m90.2 80.9h0"/><path stroke="#3073f6" stroke-width="7.5" d="M432.3 573.8h0"/><path stroke="#3986f7" stroke-width="7.5" d="M400.5 559.6h0m60.8 159.9h0"/><path stroke="#4195f7" stroke-width="7.5" d="M416.8 567.1h0"/><path stroke="#49a4f8" stroke-width="7.5" d="M423.9 574.4h0m11 101.5h0"/><path stroke="#51b4f9" stroke-width="7.5" d="M429 653.3h0m18.7-72.2h0"/><path stroke="#58c3f9" stroke-width="7.5" d="M405.2 582.8h0m4.4 72.5h0m5.9-101.3h0"/><path stroke="#68e3f4" stroke-width="7.5" d="M428.8 579.2h0m53.5 163.5h0"/><path stroke="#71f2ea" stroke-width="7.5" d="M439.1 548.3h0"/><path stroke="#81fcbc" stroke-width="7.5" d="M456.3 703.1h0"/><path stroke="#86fcb1" stroke-width="7.5" d="M487.6 747h0"/><path stroke="#abfc7b" stroke-width="7.5" d="M475.5 727.6h0"/><path stroke="#d0fd5e" stroke-width="7.5" d="M421.1 578.7h0"/><path stroke="#dafe59" stroke-width="7.5" d="M478.9 741.6h0"/><path stroke="#eefe55" stroke-width="7.5" d="M469.6 714.9h0"/><path stroke="#f9d849" stroke-width="7.5" d="M426.3 592.3h0"/><path stroke="#ef8f35" stroke-width="7.5" d="M411.1 641.2h0"/><path stroke="#ec5c29" stroke-width="7.5" d="M388.1 623.2h0"/><path stroke="#eb5127" stroke-width="7.5" d="M399.7 634.1h0"/><path stroke="#001df5" stroke-width="8" d="M440 595.5h0"/><path stroke="#0323f5" stroke-width="8" d="M509.2 660.4h0"/><path stroke="#1039f5" stroke-width="8" d="M403.1 589.1h0m20.4-8.3h0m16.7 20.2h0"/><path stroke="#1847f5" stroke-width="8" d="M431.7 668.6h0"/><path stroke="#2055f5" stroke-width="8" d="M514.8 675.8h0"/><path stroke="#2864f6" stroke-width="8" d="M419.9 579.9h0"/><path stroke="#3986f7" stroke-width="8" d="M445.3 691.9h0"/><path stroke="#4195f7" stroke-width="8" d="M457.2 615.6h0"/><path stroke="#49a4f8" stroke-width="8" d="M428 657.9h0"/><path stroke="#58c3f9" stroke-width="8" d="M417.5 659h0m51.4 72.5h0"/><path stroke="#60d3fa" stroke-width="8" d="M417 548.6h0m49 172.8h0"/><path stroke="#7dfcc8" stroke-width="8" d="M429.2 655.6h0"/><path stroke="#8cfca6" stroke-width="8" d="M468.9 725.6h0"/><path stroke="#a3fc85" stroke-width="8" d="M469.5 721.6h0"/><path stroke="#abfc7b" stroke-width="8" d="M400.8 652.8h0m13.3-79.7h0"/><path stroke="#fbe74d" stroke-width="8" d="M400.4 645.3h0"/><path stroke="#ed752f" stroke-width="8" d="M374.9 602.6h0"/><path stroke="#001ae3" stroke-width="8.5" d="M450.4 618.2h0"/><path stroke="#51b4f9" stroke-width="8.5" d="M474.9 716.2h0"/><path stroke="#60d3fa" stroke-width="8.5" d="M406 566.9h0"/><path stroke="#68e3f4" stroke-width="8.5" d="M412.3 661.5h0"/><path stroke="#77fcdf" stroke-width="8.5" d="M418.1 643.5h0"/><path stroke="#abfc7b" stroke-width="8.5" d="M425.7 574.8h0"/><path stroke="#bdfd6b" stroke-width="8.5" d="M467.1 719.9h0"/><path stroke="#c6fd64" stroke-width="8.5" d="M406.5 660.1h0"/><path stroke="#ef8f35" stroke-width="8.5" d="M476.2 745.9h0"/><path stroke="#ed752f" stroke-width="8.5" d="M423.9 656h0"/><path stroke="#1039f5" stroke-width="9" d="M459.9 716.4h0"/><path stroke="#2055f5" stroke-width="9" d="M513.5 679.3h0"/><path stroke="#49a4f8" stroke-width="9.5" d="M437.8 561.3h0"/><path stroke="#b4fd73" stroke-width="9.5" d="M405.3 641.5h0"/><path stroke="#e4fe56" stroke-width="9.5" d="M488.3 756.9h0"/><path stroke="#60d3fa" stroke-width="10" d="M402.1 662.6h0"/><path stroke="#8cfca6" stroke-width="10" d="M469.3 717.5h0"/><path stroke="#51b4f9" stroke-width="11" d="M464.9 721.9h0"/><path stroke="#49a4f8" stroke-width="2" d="M632.4 647.8h0"/><path stroke="#0014c0" stroke-width="2.5" d="M539.8 696.4h0"/><path stroke="#0323f5" stroke-width="2.5" d="M442.5 587.6h0"/><path stroke="#092df5" stroke-width="2.5" d="M447.6 632h0"/><path stroke="#1039f5" stroke-width="2.5" d="M502 571.4h0"/><path stroke="#0014c0" stroke-width="3" d="M570.2 688.5h0"/><path stroke="#001df5" stroke-width="3" d="M540.4 630h0"/><path stroke="#0323f5" stroke-width="3" d="M499.9 652.8h0"/><path stroke="#1039f5" stroke-width="3" d="M523.4 610.1h0m51.5 46.2h0"/><path stroke="#2055f5" stroke-width="3" d="M481.1 659.1h0m91.1 3.9h0"/><path stroke="#2864f6" stroke-width="3" d="M445.9 613h0"/><path stroke="#49a4f8" stroke-width="3" d="M516.7 600.8h0"/><path stroke="#58c3f9" stroke-width="3" d="M512 566h0"/><path stroke="#0011af" stroke-width="3.5" d="M526.7 663.3h0"/><path stroke="#0014c0" stroke-width="3.5" d="M529.7 654.8h0"/><path stroke="#001ae3" stroke-width="3.5" d="M506.2 688.2h0m19.2 1.7h0"/><path stroke="#001df5" stroke-width="3.5" d="M519.7 656.2h0m30 38.6h0"/><path stroke="#001df5" stroke-width="3.5" d="M454.4 616.2h0"/><path stroke="#0323f5" stroke-width="3.5" d="M463 623.9h0m21.7 37h0"/><path stroke="#092df5" stroke-width="3.5" d="M473.1 624.8h0m46.2 40.4h0"/><path stroke="#1039f5" stroke-width="3.5" d="M525.1 686.1h0m32.7-53.9h0m4.4 39.1h0"/><path stroke="#1847f5" stroke-width="3.5" d="M457.2 618.1h0m77.6 33.5h0"/><path stroke="#2055f5" stroke-width="3.5" d="M517.4 626.5h0m4 42.2h0"/><path stroke="#4195f7" stroke-width="3.5" d="M486.3 638h0"/><path stroke="#000e9d" stroke-width="4" d="M514 648.3h0"/><path stroke="#0011af" stroke-width="4" d="M525.5 667.3h0"/><path stroke="#0014c0" stroke-width="4" d="M552.4 659.8h0"/><path stroke="#0017d2" stroke-width="4" d="M523.3 637.2h0m21.1 0.2h0m138.7 38.8h0"/><path stroke="#001ae3" stroke-width="4" d="M505.8 673.4h0m1.9-9.1h0m4.5-12.4h0m14.3-0.5h0m4-30.7h0"/><path stroke="#001df5" stroke-width="4" d="M526.2 643.7h0m5.7-6.9h0"/><path stroke="#001df5" stroke-width="4" d="M511 677.4h0m3.9-16.1h0m1.1 11.2h0m5.1 6.3h0m34.7 19.7h0m6.7-31.6h0m4.6 10.4h0"/><path stroke="#0323f5" stroke-width="4" d="M429.5 603.6h0m44.7 25.5h0m26.6 14.3h0"/><path stroke="#092df5" stroke-width="4" d="M480.6 654.7h0m61.4 28.6h0m10.4-32.4h0m5.4 44.4h0"/><path stroke="#1039f5" stroke-width="4" d="M453.9 633.7h0m1-12.2h0m18.3 17.3h0m16 4h0m25.1-24.4h0m56.6-27h0m25.4 99.6h0"/><path stroke="#1847f5" stroke-width="4" d="M443 620.2h0m31.6 32.3h0m33.7 35.5h0"/><path stroke="#2055f5" stroke-width="4" d="M580.2 690.3h0"/><path stroke="#2864f6" stroke-width="4" d="M515.5 617.4h0"/><path stroke="#4195f7" stroke-width="4" d="M460.4 639.3h0m24.7 5.1h0"/><path stroke="#51b4f9" stroke-width="4" d="M510.7 583h0m54.8 20.9h0m18.7 81.1h0"/><path stroke="#0011af" stroke-width="4.5" d="M562.3 692.9h0m2.3-1.7h0"/><path stroke="#0014c0" stroke-width="4.5" d="M518.5 616.8h0m29.5 63.6h0"/><path stroke="#0017d2" stroke-width="4.5" d="M513.8 652.7h0m31.6 8.2h0m6.8 29.7h0"/><path stroke="#001ae3" stroke-width="4.5" d="M457.9 624.2h0m45 42.5h0m3 6.1h0m8-1.9h0m22.7-43.8h0m2.6 22h0m1.8 15.7h0m2.8-28.2h0m2.9 33.3h0m1.6 19.1h0"/><path stroke="#001df5" stroke-width="4.5" d="M446.4 614h0m44.1 31.8h0m9.9 25.7h0m8.1-7.5h0m21 28.4h0m8-60.8h0m3.4 36.5h0m16.7 22.4h0m5.4-17.1h0"/><path stroke="#001df5" stroke-width="4.5" d="M435.9 598.9h0m6.6 0.6h0m1.8 25.7h0m76.3 49.3h0m12.5-5.9h0m12.8-20.6h0m1.2 13.7h0m9.9-7h0m2.5 15.7h0"/><path stroke="#0323f5" stroke-width="4.5" d="M436 592.4h0m44.1 50.8h0m4.9 15.5h0m23.4 11.3h0m1.6-39.4h0m6.4 2.7h0m6.9-7.6h0m26.7 63.7h0m5.8-34.3h0"/><path stroke="#092df5" stroke-width="4.5" d="M447.8 610.1h0m36.6 32.3h0m16.1 40.7h0m35.2-52h0"/><path stroke="#1039f5" stroke-width="4.5" d="M461.7 625h0m4.8 3.9h0m17.1 33.4h0m16.4 4.1h0"/><path stroke="#1847f5" stroke-width="4.5" d="M441.8 624.6h0m15.6 12.8h0"/><path stroke="#2055f5" stroke-width="4.5" d="M545 590h0"/><path stroke="#2864f6" stroke-width="4.5" d="M459.6 641.7h0"/><path stroke="#3073f6" stroke-width="4.5" d="M549.8 685.9h0"/><path stroke="#49a4f8" stroke-width="4.5" d="M433.2 590.4h0m109.6 52.9h0"/><path stroke="#51b4f9" stroke-width="4.5" d="M572.2 671.6h0"/><path stroke="#58c3f9" stroke-width="4.5" d="M532 662.8h0"/><path stroke="#000b8c" stroke-width="5" d="M523.3 694.7h0"/><path stroke="#000e9d" stroke-width="5" d="M521.1 669.1h0m44.2 17.2h0"/><path stroke="#0011af" stroke-width="5" d="M532.4 681.4h0m5 3.7h0m0.4-3.7h0m4.1-30.4h0m9.8 36.9h0"/><path stroke="#0014c0" stroke-width="5" d="M517.6 665.6h0m5 15.6h0m14.7-33.9h0"/><path stroke="#0017d2" stroke-width="5" d="M508.7 647.6h0m0.1 2.8h0m5.1 14.4h0m0.9-3h0m15 32h0m0.8-16.5h0m10-32.8h0m0.8 41.1h0"/><path stroke="#001ae3" stroke-width="5" d="M471.4 639.1h0m35.5 18.8h0m0.6 12.8h0m8.3-44.9h0m1.6 65.6h0m22.3-20.3h0m6.3-33.3h0m11.9 45.6h0m4.3 2.3h0m4.5 10.1h0m3.6-10.9h0"/><path stroke="#001df5" stroke-width="5" d="M436.1 602.2h0m64.9 82.9h0m21.7-6.2h0m7.3-42.7h0m1.1-2.3h0m3.6 36.2h0m3.2 25.7h0m0.1-8h0m1.1-3.6h0m4.8-17.9h0m2.7-21.4h0m6.3 47h0m3.7-29.1h0m8.7 6.3h0m9.1 11.9h0"/><path stroke="#001df5" stroke-width="5" d="M432.3 590.7h0m12.1 30.5h0m43.8 43.9h0m12.9 13.4h0m18.4-48.6h0m2.6 45.2h0m0.5-53.4h0m1.9 66h0m2.6-20.3h0m12.3-35.4h0m4.5 33.3h0m8.6 8h0"/><path stroke="#0323f5" stroke-width="5" d="M462.6 618.5h0m47.2 43h0m4.7 20.2h0m20.5-57.8h0m17.5 56.8h0"/><path stroke="#092df5" stroke-width="5" d="M506.4 649.3h0m3.6-27.2h0m23 66.2h0m12.7-51.3h0"/><path stroke="#1039f5" stroke-width="5" d="M443.6 611h0m13.5 27.9h0m19.8 10.3h0m0.9 7h0m27.4 12h0m16.8-19.5h0m40.3 22.3h0m46.9-22.8h0"/><path stroke="#1847f5" stroke-width="5" d="M502.9 651.9h0m21.1-19.7h0m48.9 6h0"/><path stroke="#2055f5" stroke-width="5" d="M485.4 657h0m53.4-90.6h0m13.7 13.3h0m48.7 28.8h0m0 23.7h0m15.5 32.1h0"/><path stroke="#2864f6" stroke-width="5" d="M521.4 635.8h0m6.6-66.8h0"/><path stroke="#3986f7" stroke-width="5" d="M478.4 659.2h0"/><path stroke="#51b4f9" stroke-width="5" d="M573.3 680.3h0m16.5-12.7h0"/><path stroke="#58c3f9" stroke-width="5" d="M550.7 683.2h0"/><path stroke="#0011af" stroke-width="5.5" d="M524.6 678.9h0m3.2-41.1h0m24 57h0"/><path stroke="#0014c0" stroke-width="5.5" d="M508 688.4h0m6.7-6.8h0m14-38.3h0m1.4 52h0m17.6-49.9h0m26 51.4h0"/><path stroke="#0017d2" stroke-width="5.5" d="M506.5 689.4h0m4.3-69.5h0m0.9 63.1h0m1.8-24h0m11.6-12.4h0m13-9h0m6.6 21h0m26 34.2h0"/><path stroke="#001ae3" stroke-width="5.5" d="M503 649.5h0m0.1 4.1h0m24.7 37.5h0m3.2-16.5h0m13.2-24.1h0m8.7 17.3h0m11.6-4.6h0m7 19.7h0"/><path stroke="#001df5" stroke-width="5.5" d="M497.5 664.5h0m19.4 19.2h0m9.7-14.2h0m14.3 21.5h0m1.6 7.7h0m1.3-4h0m6.1-3.2h0m14.2-25.4h0m0.6 12.7h0"/><path stroke="#001df5" stroke-width="5.5" d="M440.4 600h0m11.6 30.1h0m56.5 13.2h0m0.2-8.6h0m7.2 28.4h0m1.6-4.5h0m4.7-17.8h0m3.8 51.1h0m26.2 4.1h0"/><path stroke="#0323f5" stroke-width="5.5" d="M434.3 605.4h0m1.8 13.2h0m8.2-16.5h0m32.2 33.4h0m59.2-9.4h0"/><path stroke="#092df5" stroke-width="5.5" d="M436.5 608.9h0m6.9-10.1h0m21.7 16h0m11.2 19.8h0m18.9 6.5h0m10.6 24.3h0m0.1 10.5h0m1-21.4h0m2.4-21.6h0m4.3 34.2h0m13.5-1h0m15.8 30.2h0"/><path stroke="#1039f5" stroke-width="5.5" d="M437.8 595.6h0m1.1 12.6h0m63.9 69.6h0m67.2 10h0"/><path stroke="#1847f5" stroke-width="5.5" d="M465.1 629.3h0m44.1-6.5h0m17.9 46.8h0m42.1 11.8h0"/><path stroke="#2055f5" stroke-width="5.5" d="M517 625.4h0m13.6 27.9h0m2.6 0h0m2.6-28.9h0"/><path stroke="#2864f6" stroke-width="5.5" d="M473.1 629.6h0m32.4 19.8h0m0.3 25.7h0m28.1-17.6h0"/><path stroke="#3073f6" stroke-width="5.5" d="M470.4 639.9h0"/><path stroke="#51b4f9" stroke-width="5.5" d="M521.4 639.8h0"/><path stroke="#68e3f4" stroke-width="5.5" d="M556 694h0"/><path stroke="#0011af" stroke-width="6" d="M516.4 678.9h0m23.6-3.4h0"/><path stroke="#0017d2" stroke-width="6" d="M506.7 683.6h0m0.1-37.6h0m19.9 49.8h0m9-33.1h0m6.3-20.9h0m1-11.8h0m17.9 42.6h0"/><path stroke="#001ae3" stroke-width="6" d="M517.7 662.2h0m3 14.2h0m11.3-52.9h0m25.8 34.7h0m7.4 30h0m1.1-13.8h0"/><path stroke="#001df5" stroke-width="6" d="M439.3 612.9h0m58.2 46.5h0m30.6 27.2h0m0.6-0.8h0m6.1-42h0m0.5-20.7h0m4.2 47.5h0m8-33.8h0m0.7 30.8h0"/><path stroke="#001df5" stroke-width="6" d="M440.6 603.1h0m5.2-5.2h0m7 37.6h0m55.9 6.7h0m12.7 24.7h0m1.6 4.9h0m15.4-65.7h0m11.6 44.9h0m1.6 48.5h0m8.9-11.9h0m4.2 6.8h0m0.2-8.7h0"/><path stroke="#0323f5" stroke-width="6" d="M476.7 654.1h0m80 14.1h0"/><path stroke="#092df5" stroke-width="6" d="M438.7 609.1h0m14.1 3.4h0m14.2 6h0m53.2 3.3h0m15.2 25.1h0"/><path stroke="#1039f5" stroke-width="6" d="M501.5 636.3h0m0.5 51.9h0m41.8-1h0"/><path stroke="#1847f5" stroke-width="6" d="M462.4 611.2h0m22.6 51.8h0m23.9-0.5h0m2.5-5.4h0m28.6 38.2h0m69.9-58.8h0"/><path stroke="#2055f5" stroke-width="6" d="M462.8 619.1h0m42.8 37.5h0m2.2 10h0m2.8-8.4h0m15.5 10.4h0m90.6-41.8h0"/><path stroke="#2864f6" stroke-width="6" d="M435.5 609.5h0m83.6 48.5h0"/><path stroke="#3073f6" stroke-width="6" d="M529.5 640.8h0"/><path stroke="#4195f7" stroke-width="6" d="M515.9 652h0"/><path stroke="#49a4f8" stroke-width="6" d="M488.2 631.5h0"/><path stroke="#51b4f9" stroke-width="6" d="M584.5 614.8h0m8.1 10h0"/><path stroke="#58c3f9" stroke-width="6" d="M555.1 680.8h0"/><path stroke="#86fcb1" stroke-width="6" d="M570.9 611.9h0"/><path stroke="#0011af" stroke-width="6.5" d="M538 638.6h0m2.3 34.8h0"/><path stroke="#0014c0" stroke-width="6.5" d="M529.9 631.9h0m10.3 9.7h0m9.4 21.6h0"/><path stroke="#0017d2" stroke-width="6.5" d="M500.9 637.8h0m11.9 13.8h0m5.7 6.8h0m8.1 23.4h0m4.9 7.5h0m7.5-36.3h0m5.4 32.5h0m0.4-15.1h0m2.9 29.3h0"/><path stroke="#001ae3" stroke-width="6.5" d="M500.9 657.4h0m49.7-11.5h0m16.7 44.4h0"/><path stroke="#001df5" stroke-width="6.5" d="M510.9 678.6h0m7.7-53.1h0m8.2 24.3h0m4.5 23.6h0m2.8 21.8h0m2.9-21.5h0m15.7-27.4h0m6.7 27h0m3 19.3h0m0.8-18.8h0"/><path stroke="#001df5" stroke-width="6.5" d="M446.9 623.9h0m67.6-1.1h0m3.4 60.8h0m5.2-63.7h0"/><path stroke="#0323f5" stroke-width="6.5" d="M504 648.1h0m21.8 28.1h0"/><path stroke="#092df5" stroke-width="6.5" d="M476.4 656h0m21.4-1.2h0m53 14.1h0"/><path stroke="#1039f5" stroke-width="6.5" d="M478 656.2h0m33.3 13.7h0m31.5 10.9h0m25.4-8.9h0"/><path stroke="#1847f5" stroke-width="6.5" d="M460.5 647.8h0m65.3 11.8h0"/><path stroke="#2055f5" stroke-width="6.5" d="M518.5 678.7h0m7-40.6h0"/><path stroke="#2864f6" stroke-width="6.5" d="M543.9 649.2h0"/><path stroke="#3073f6" stroke-width="6.5" d="M511 681h0m28.4 1.4h0"/><path stroke="#3986f7" stroke-width="6.5" d="M499.5 642.1h0"/><path stroke="#58c3f9" stroke-width="6.5" d="M517.2 667.8h0"/><path stroke="#0017d2" stroke-width="7" d="M514.8 623h0m31.8 24.1h0m1.2 28h0"/><path stroke="#001ae3" stroke-width="7" d="M524.3 688.1h0m15.7-26h0"/><path stroke="#001df5" stroke-width="7" d="M520.7 679.4h0m4.6-48.2h0m9.3 61.1h0m16.3-4h0"/><path stroke="#001df5" stroke-width="7" d="M519.8 635.3h0m1.1-1.5h0m17.2 22.8h0m17.3 11.6h0m2.6-3.5h0"/><path stroke="#0323f5" stroke-width="7" d="M437.6 618.7h0m9.8 2.9h0m36.1 13.2h0m35.2-9.5h0"/><path stroke="#092df5" stroke-width="7" d="M543.3 657h0"/><path stroke="#1039f5" stroke-width="7" d="M455 628.1h0"/><path stroke="#1847f5" stroke-width="7" d="M474 633.3h0"/><path stroke="#2055f5" stroke-width="7" d="M471 623.3h0m14.7 38.5h0m25.7 2.3h0"/><path stroke="#60d3fa" stroke-width="7" d="M603 625.8h0"/><path stroke="#0011af" stroke-width="7.5" d="M551.2 653.1h0"/><path stroke="#0014c0" stroke-width="7.5" d="M546.2 646.8h0m14.5 22.5h0"/><path stroke="#0017d2" stroke-width="7.5" d="M513 646.3h0m13.8 30.4h0m22.9-5.3h0m8.3 22.1h0"/><path stroke="#001ae3" stroke-width="7.5" d="M525.2 624.3h0m2.4 12.5h0"/><path stroke="#001df5" stroke-width="7.5" d="M524.2 652.5h0m5.2 8.2h0m0.4 31.7h0"/><path stroke="#001df5" stroke-width="7.5" d="M502.1 638.1h0"/><path stroke="#0323f5" stroke-width="7.5" d="M565.6 674.1h0"/><path stroke="#092df5" stroke-width="7.5" d="M488.5 647.8h0"/><path stroke="#1039f5" stroke-width="7.5" d="M557.7 657.8h0"/><path stroke="#1847f5" stroke-width="7.5" d="M538.7 695.5h0"/><path stroke="#2864f6" stroke-width="7.5" d="M502 654.9h0"/><path stroke="#3073f6" stroke-width="7.5" d="M521.1 687.2h0m35.7-5.3h0"/><path stroke="#4195f7" stroke-width="7.5" d="M529.4 682.3h0m36.1 3.1h0"/><path stroke="#0014c0" stroke-width="8" d="M543.7 632.7h0"/><path stroke="#001df5" stroke-width="8" d="M508.4 678.1h0m41.2 17.9h0"/><path stroke="#0323f5" stroke-width="8" d="M531.4 692.6h0"/><path stroke="#092df5" stroke-width="8" d="M517.6 647.3h0"/><path stroke="#2055f5" stroke-width="8" d="M550.4 666.6h0"/><path stroke="#2864f6" stroke-width="8" d="M602 626h0"/><path stroke="#51b4f9" stroke-width="8" d="M556.9 660.2h0"/><path stroke="#001ae3" stroke-width="8.5" d="M501.6 634.6h0"/><path stroke="#001df5" stroke-width="8.5" d="M518.4 621.1h0"/><path stroke="#001df5" stroke-width="8.5" d="M575.7 689.8h0"/><path stroke="#0323f5" stroke-width="8.5" d="M533.6 693.7h0"/><path stroke="#3073f6" stroke-width="8.5" d="M505.6 642.9h0"/><path stroke="#0014c0" stroke-width="9" d="M541.1 654.6h0"/><path stroke="#0017d2" stroke-width="9" d="M553.3 666.6h0"/><path stroke="#001df5" stroke-width="9" d="M509.5 672.5h0"/><path stroke="#0323f5" stroke-width="9.5" d="M510.5 666.3h0"/><path stroke="#1847f5" stroke-width="9.5" d="M465 648.7h0"/><path stroke="#2864f6" stroke-width="9.5" d="M532.3 646.6h0"/><path stroke="#3073f6" stroke-width="9.5" d="M508.3 680.7h0"/><path stroke="#1039f5" stroke-width="2.5" d="M512.7 701.4h0"/><path stroke="#92fc9b" stroke-width="2.5" d="M566.1 768.9h0"/><path stroke="#001ae3" stroke-width="3.5" d="M550.1 702.8h0"/><path stroke="#001df5" stroke-width="3.5" d="M639 719.4h0"/><path stroke="#0323f5" stroke-width="3.5" d="M543.5 739.1h0m21-40.1h0m94.1 87.6h0m3-2.1h0"/><path stroke="#092df5" stroke-width="3.5" d="M645.6 714h0"/><path stroke="#1039f5" stroke-width="3.5" d="M540.6 727.3h0m30.5 12.4h0"/><path stroke="#2055f5" stroke-width="3.5" d="M563.5 686h0m32.1 4.7h0m4.6 25.9h0"/><path stroke="#3073f6" stroke-width="3.5" d="M602.1 713.6h0"/><path stroke="#3986f7" stroke-width="3.5" d="M633.8 758.3h0"/><path stroke="#51b4f9" stroke-width="3.5" d="M584.9 685.3h0m57.5 92.6h0"/><path stroke="#58c3f9" stroke-width="3.5" d="M552.1 764.9h0"/><path stroke="#99fc91" stroke-width="3.5" d="M557.2 736.9h0"/><path stroke="#0017d2" stroke-width="4" d="M555.8 719.8h0m2.5 0.1h0"/><path stroke="#001ae3" stroke-width="4" d="M690.5 789.1h0"/><path stroke="#001df5" stroke-width="4" d="M543.4 739.9h0m7.9-35h0m2.1 12.5h0"/><path stroke="#001df5" stroke-width="4" d="M545.6 680.4h0m24.7 1.5h0m81.3 99.5h0m19.2 19.7h0"/><path stroke="#0323f5" stroke-width="4" d="M546.9 681.4h0m14.3 53.9h0m110.4 33.2h0m3 4.7h0"/><path stroke="#092df5" stroke-width="4" d="M552.7 704.4h0m11.8-23h0m8.7 0h0"/><path stroke="#1847f5" stroke-width="4" d="M570.6 693.6h0m3.7 43.2h0"/><path stroke="#2055f5" stroke-width="4" d="M579.5 690h0m6.7 16.7h0m12.7 5.8h0m11.4 0.2h0m25.4 8.1h0m7.9-3.2h0"/><path stroke="#2864f6" stroke-width="4" d="M612.7 768.5h0"/><path stroke="#3073f6" stroke-width="4" d="M618.3 772h0"/><path stroke="#4195f7" stroke-width="4" d="M602.5 771.3h0"/><path stroke="#49a4f8" stroke-width="4" d="M572.8 681.3h0m35.7 78.2h0m2.4 15.8h0"/><path stroke="#68e3f4" stroke-width="4" d="M560.4 737.6h0"/><path stroke="#7dfcc8" stroke-width="4" d="M543 779.4h0"/><path stroke="#81fcbc" stroke-width="4" d="M558.8 797.6h0"/><path stroke="#dafe59" stroke-width="4" d="M513.9 779.2h0"/><path stroke="#001ae3" stroke-width="4.5" d="M542.4 733.4h0m5.7-46.6h0m7.9 31.7h0"/><path stroke="#001df5" stroke-width="4.5" d="M559 720.5h0m6.9-36.7h0m1.4 3.3h0m68.4 43.7h0"/><path stroke="#001df5" stroke-width="4.5" d="M543.4 704.7h0m2.5 37.3h0m10.9-30.6h0m14.2-21.6h0"/><path stroke="#0323f5" stroke-width="4.5" d="M530.1 716.8h0m15.5-24.6h0m1.3 4.8h0m118.3 71.3h0m17.7 13.1h0m8.1-1h0"/><path stroke="#092df5" stroke-width="4.5" d="M544.8 694.2h0m6.2 16h0m9.4-21h0m8.9 35.8h0m85.2 51.7h0m5.2 17.9h0"/><path stroke="#1039f5" stroke-width="4.5" d="M527.4 689.4h0m1.3 71.7h0m58.2-54.6h0m58.5 14.9h0m24.8 54.9h0m1.8 14.9h0"/><path stroke="#1847f5" stroke-width="4.5" d="M659.5 768.8h0m3.9 32.6h0m30.6-15.9h0"/><path stroke="#2055f5" stroke-width="4.5" d="M572.2 704.1h0m51.4 10h0m34.7 63.5h0"/><path stroke="#2864f6" stroke-width="4.5" d="M649 782.5h0m31.8 0h0"/><path stroke="#3073f6" stroke-width="4.5" d="M678.2 793.8h0"/><path stroke="#3986f7" stroke-width="4.5" d="M623.8 755.1h0"/><path stroke="#49a4f8" stroke-width="4.5" d="M619.6 773.6h0m7-6.9h0"/><path stroke="#51b4f9" stroke-width="4.5" d="M601.8 806h0"/><path stroke="#58c3f9" stroke-width="4.5" d="M560.8 752.2h0"/><path stroke="#77fcdf" stroke-width="4.5" d="M675.4 769.6h0"/><path stroke="#86fcb1" stroke-width="4.5" d="M524.8 776.8h0"/><path stroke="#c6fd64" stroke-width="4.5" d="M583.1 795.1h0"/><path stroke="#dafe59" stroke-width="4.5" d="M567 774.6h0"/><path stroke="#fbe74d" stroke-width="4.5" d="M596 781.1h0"/><path stroke="#b72619" stroke-width="4.5" d="M523 781.8h0"/><path stroke="#a72116" stroke-width="4.5" d="M517.8 779.6h0"/><path stroke="#961d13" stroke-width="4.5" d="M513.9 775.4h0m22.2-0.5h0"/><path stroke="#0011af" stroke-width="5" d="M556 724.5h0m123.3 46.8h0"/><path stroke="#0017d2" stroke-width="5" d="M552.3 718.1h0m112.6 79.8h0"/><path stroke="#001ae3" stroke-width="5" d="M542 738.9h0"/><path stroke="#001df5" stroke-width="5" d="M576.6 736.1h0m88.3 67.4h0"/><path stroke="#001df5" stroke-width="5" d="M548.3 746.8h0m2-47.7h0m14.4-4.8h0m4.6-5.6h0m4.8 52h0m93.3 55.8h0"/><path stroke="#0323f5" stroke-width="5" d="M552.4 723.4h0m110.7 57.5h0m12.2-7.2h0"/><path stroke="#092df5" stroke-width="5" d="M544.9 740.3h0"/><path stroke="#1039f5" stroke-width="5" d="M523.4 714.8h0"/><path stroke="#1847f5" stroke-width="5" d="M649.7 776.3h0m19.2-9.3h0"/><path stroke="#2055f5" stroke-width="5" d="M607.6 734.8h0m26.7-24.1h0m20.5 78.4h0m27.2-9.6h0"/><path stroke="#2864f6" stroke-width="5" d="M552.5 690.5h0m19.7 67.7h0m61.9 18.2h0m48.5 0h0"/><path stroke="#3073f6" stroke-width="5" d="M640.8 758.2h0m39.5 22.2h0"/><path stroke="#3986f7" stroke-width="5" d="M568.6 684.3h0m51.5 70.7h0m44.7 39.6h0"/><path stroke="#4195f7" stroke-width="5" d="M570.2 735.2h0"/><path stroke="#49a4f8" stroke-width="5" d="M611.6 775.4h0"/><path stroke="#51b4f9" stroke-width="5" d="M570.4 727h0m60.8 48.5h0"/><path stroke="#58c3f9" stroke-width="5" d="M532.4 774.4h0m70.3-11.2h0"/><path stroke="#60d3fa" stroke-width="5" d="M556.9 736h0m54.1 15.8h0m28 3.8h0m49.8 22.7h0"/><path stroke="#68e3f4" stroke-width="5" d="M530.4 777.8h0"/><path stroke="#71f2ea" stroke-width="5" d="M570.7 741.1h0"/><path stroke="#81fcbc" stroke-width="5" d="M612.9 785.8h0"/><path stroke="#8cfca6" stroke-width="5" d="M557.9 796.9h0"/><path stroke="#a3fc85" stroke-width="5" d="M564.2 793.6h0"/><path stroke="#c6fd64" stroke-width="5" d="M572.7 784.5h0"/><path stroke="#ea3e25" stroke-width="5" d="M523.5 786.7h0"/><path stroke="#85190f" stroke-width="5" d="M513.8 776.8h0"/><path stroke="#0011af" stroke-width="5.5" d="M551.8 709.3h0m141.9 73.9h0"/><path stroke="#0017d2" stroke-width="5.5" d="M554.2 715.6h0m6.4-26.1h0"/><path stroke="#001ae3" stroke-width="5.5" d="M549.8 693.8h0"/><path stroke="#001df5" stroke-width="5.5" d="M551.8 706.4h0m121.5 74.7h0"/><path stroke="#001df5" stroke-width="5.5" d="M545.3 748.1h0m0-8.7h0m6-39.5h0m20.6-3.1h0m87.8 98.9h0m4.3-25h0"/><path stroke="#0323f5" stroke-width="5.5" d="M515.3 697.4h0m48.8-8.8h0m80.9 59.6h0m19.2 15.4h0m8.4 26.6h0m13.3 13.8h0"/><path stroke="#092df5" stroke-width="5.5" d="M650.5 786.9h0m24.2 9h0"/><path stroke="#1039f5" stroke-width="5.5" d="M536.7 692h0m80.3 54.4h0m40.6 38.3h0m14.1-8h0"/><path stroke="#1847f5" stroke-width="5.5" d="M643.6 712.7h0m1.9 2.2h0m12.9 58.4h0m27.3 15.4h0"/><path stroke="#2055f5" stroke-width="5.5" d="M596.5 715.9h0m20.5 40.3h0m10.6-14h0m7.9 35.8h0m7.1-1.5h0m12.8 5h0m33.2 12.3h0m2.5-2.7h0"/><path stroke="#2864f6" stroke-width="5.5" d="M609.2 709.5h0m23.6 50.3h0m39.3 31.5h0m0.3 5.4h0m10 3.3h0"/><path stroke="#3073f6" stroke-width="5.5" d="M566.7 738.3h0m1.6-5h0m53.1 24.7h0m3.5 23.9h0m62.5 19.7h0"/><path stroke="#3986f7" stroke-width="5.5" d="M548.4 696.1h0m43.4 53.4h0m19.8 3.4h0m18.5 5.4h0m3.4 14.4h0"/><path stroke="#4195f7" stroke-width="5.5" d="M608.8 783.5h0m9.5 8.2h0"/><path stroke="#49a4f8" stroke-width="5.5" d="M627.9 755.5h0m16.9 6.7h0m22.2 10.9h0"/><path stroke="#51b4f9" stroke-width="5.5" d="M592.2 762.9h0m20.2 16h0"/><path stroke="#58c3f9" stroke-width="5.5" d="M560.8 758.2h0m4.1 25.7h0m13-50.9h0m55.9 26.9h0m14.5 15.3h0"/><path stroke="#60d3fa" stroke-width="5.5" d="M604.8 783.8h0m35.4-13.9h0"/><path stroke="#77fcdf" stroke-width="5.5" d="M550 781.4h0m12.2-1.3h0m17.2 22.2h0"/><path stroke="#7dfcc8" stroke-width="5.5" d="M562.5 786.6h0"/><path stroke="#86fcb1" stroke-width="5.5" d="M524.6 781.8h0"/><path stroke="#92fc9b" stroke-width="5.5" d="M555.7 795.1h0"/><path stroke="#abfc7b" stroke-width="5.5" d="M531.4 774.8h0"/><path stroke="#bdfd6b" stroke-width="5.5" d="M532 774.1h0"/><path stroke="#e4fe56" stroke-width="5.5" d="M513.1 782.1h0"/><path stroke="#fbe74d" stroke-width="5.5" d="M599.9 783.7h0"/><path stroke="#f5bc41" stroke-width="5.5" d="M565.4 780.4h0"/><path stroke="#ec682c" stroke-width="5.5" d="M540.8 785.8h0"/><path stroke="#ec5c29" stroke-width="5.5" d="M558.3 782h0"/><path stroke="#eb5127" stroke-width="5.5" d="M542.5 779.3h0m12.3 10.9h0"/><path stroke="#ea3e25" stroke-width="5.5" d="M517.7 784.6h0"/><path stroke="#0017d2" stroke-width="6" d="M648.7 789.8h0"/><path stroke="#001ae3" stroke-width="6" d="M555.4 709.6h0m122.4 58h0"/><path stroke="#001df5" stroke-width="6" d="M552.3 704.9h0m4.4 16.9h0m17.3 5.4h0m70.1 51.8h0m15.5-2.1h0m14.3 3.4h0m13.3 15.5h0"/><path stroke="#001df5" stroke-width="6" d="M550.1 691.7h0m103 93.3h0m41.3-2.1h0"/><path stroke="#0323f5" stroke-width="6" d="M551.9 701.3h0m22.7-20.7h0m93 116.9h0m1 2.4h0"/><path stroke="#092df5" stroke-width="6" d="M551.8 695h0m14.6-8.8h0m2.9 7.3h0m4.1 1.4h0m2.5-2.8h0m67.8 78h0m19 9.6h0m17.4 10.5h0"/><path stroke="#1039f5" stroke-width="6" d="M541.1 733.2h0m31.8-8.3h0m99.6 48.9h0"/><path stroke="#1847f5" stroke-width="6" d="M561.3 689.6h0m12.9-6.3h0m1.5 4.4h0m78.7 91.8h0m23.1 4.1h0"/><path stroke="#2055f5" stroke-width="6" d="M559.1 734.8h0m51.9 25.1h0m22.9 10.3h0m11.2-50.4h0m18.7 75h0m21.4 2.1h0"/><path stroke="#2864f6" stroke-width="6" d="M544.9 689.5h0m106.9 83.9h0"/><path stroke="#3986f7" stroke-width="6" d="M610.3 714.3h0m6 67h0m34.1 12.7h0"/><path stroke="#4195f7" stroke-width="6" d="M576.5 738.2h0m2.9 2.1h0m30.8 18.1h0"/><path stroke="#49a4f8" stroke-width="6" d="M568.2 790.7h0m40.1 9.2h0m4.6-31.1h0m1.9 10.7h0m29.7-21.4h0"/><path stroke="#51b4f9" stroke-width="6" d="M584.9 696.7h0"/><path stroke="#58c3f9" stroke-width="6" d="M518.7 776.5h0m103.3-23.3h0m14.8 11h0"/><path stroke="#60d3fa" stroke-width="6" d="M686.3 798.6h0"/><path stroke="#68e3f4" stroke-width="6" d="M610.6 774.1h0"/><path stroke="#77fcdf" stroke-width="6" d="M515.1 776.9h0"/><path stroke="#92fc9b" stroke-width="6" d="M522.2 781.6h0"/><path stroke="#e4fe56" stroke-width="6" d="M565.2 774.5h0"/><path stroke="#f7f551" stroke-width="6" d="M559.4 788.3h0m7.4-0.9h0"/><path stroke="#ed752f" stroke-width="6" d="M529.2 773.2h0"/><path stroke="#eb4726" stroke-width="6" d="M528.3 781.5h0"/><path stroke="#ea3e25" stroke-width="6" d="M532.5 778.2h0m33.2 9.5h0m4.5 4.2h0"/><path stroke="#0017d2" stroke-width="6.5" d="M543.2 746.6h0"/><path stroke="#001ae3" stroke-width="6.5" d="M650.7 768.7h0"/><path stroke="#001df5" stroke-width="6.5" d="M541.9 735.3h0m7.8-32h0m2.3 11.3h0"/><path stroke="#001df5" stroke-width="6.5" d="M642.9 720.6h0"/><path stroke="#0323f5" stroke-width="6.5" d="M556.3 718.5h0"/><path stroke="#092df5" stroke-width="6.5" d="M552.3 715.4h0m1.8 9.4h0m102.9 43.6h0m18-1.7h0"/><path stroke="#1039f5" stroke-width="6.5" d="M667.8 768.9h0m25.5 14.3h0"/><path stroke="#1847f5" stroke-width="6.5" d="M551.8 682.3h0m30.9 58.6h0m64.3 28.7h0m21 15.8h0m2.2-13.9h0m1.7 15.4h0"/><path stroke="#2055f5" stroke-width="6.5" d="M551.5 688.6h0m24.4 37.8h0m46.4 30.4h0m37.3 40h0"/><path stroke="#2864f6" stroke-width="6.5" d="M689.6 797.9h0m8.9-6.7h0"/><path stroke="#3073f6" stroke-width="6.5" d="M605.4 756.4h0m9.3-0.6h0m14.5 17h0m4.8-19.7h0m7.4 13h0m25.6 34.7h0"/><path stroke="#3986f7" stroke-width="6.5" d="M644.5 765.5h0m40.2 25.3h0"/><path stroke="#4195f7" stroke-width="6.5" d="M636.7 758.1h0"/><path stroke="#49a4f8" stroke-width="6.5" d="M609.3 767.1h0m3.6-0.4h0m0.6 5.1h0m3.3-14.8h0m1.3-1.3h0m59.5 11.5h0"/><path stroke="#51b4f9" stroke-width="6.5" d="M522.2 775.5h0m48.9 3.1h0m8.7 11.2h0m29.7-19.2h0m2.1-15.9h0m6.5 6.4h0"/><path stroke="#58c3f9" stroke-width="6.5" d="M627.7 764.5h0"/><path stroke="#60d3fa" stroke-width="6.5" d="M621.7 761.8h0"/><path stroke="#77fcdf" stroke-width="6.5" d="M558.9 732.7h0m81.6 39.9h0"/><path stroke="#7afcd3" stroke-width="6.5" d="M606.2 786.3h0"/><path stroke="#92fc9b" stroke-width="6.5" d="M593.9 801h0"/><path stroke="#abfc7b" stroke-width="6.5" d="M561.3 784.5h0"/><path stroke="#e4fe56" stroke-width="6.5" d="M555 786.1h0"/><path stroke="#f9d849" stroke-width="6.5" d="M570.6 777.8h0"/><path stroke="#f5bc41" stroke-width="6.5" d="M558 786.4h0"/><path stroke="#ed752f" stroke-width="6.5" d="M565.6 778.5h0"/><path stroke="#eb4726" stroke-width="6.5" d="M570.7 778.8h0"/><path stroke="#85190f" stroke-width="6.5" d="M594 795.6h0"/><path stroke="#0011af" stroke-width="7" d="M670.1 784.1h0"/><path stroke="#0014c0" stroke-width="7" d="M574.8 685.1h0"/><path stroke="#001df5" stroke-width="7" d="M564.8 737.6h0m10.8-43h0m79.1 98.6h0"/><path stroke="#0323f5" stroke-width="7" d="M541.1 734.1h0m28.2-54h0m82.6 109.3h0"/><path stroke="#092df5" stroke-width="7" d="M647.3 783.5h0m5 6h0m13.8-21.3h0m23.9 22.5h0"/><path stroke="#1039f5" stroke-width="7" d="M553.3 708.7h0m24.7 21.8h0"/><path stroke="#1847f5" stroke-width="7" d="M564.3 725.5h0m2.5 5.7h0"/><path stroke="#2055f5" stroke-width="7" d="M572.8 727.8h0m55.5 33.7h0"/><path stroke="#2864f6" stroke-width="7" d="M570.5 733.1h0m23.7-25.7h0m7.4 59.6h0m59.8 16.9h0m13.4 18.3h0"/><path stroke="#3073f6" stroke-width="7" d="M633.9 768.1h0m15 2.7h0m15.7 1h0m21.8 9.6h0"/><path stroke="#4195f7" stroke-width="7" d="M610 776.4h0"/><path stroke="#49a4f8" stroke-width="7" d="M568.4 731.9h0m69 31.5h0"/><path stroke="#51b4f9" stroke-width="7" d="M598.8 794.9h0m2.4-33.7h0"/><path stroke="#58c3f9" stroke-width="7" d="M557 793.2h0m13.1-55h0m70.9 36.2h0m29.3 10.7h0"/><path stroke="#60d3fa" stroke-width="7" d="M610.7 759.7h0"/><path stroke="#71f2ea" stroke-width="7" d="M635.4 769.8h0"/><path stroke="#77fcdf" stroke-width="7" d="M517.5 784.8h0"/><path stroke="#92fc9b" stroke-width="7" d="M592.1 789.4h0"/><path stroke="#a3fc85" stroke-width="7" d="M537.3 783.9h0"/><path stroke="#c6fd64" stroke-width="7" d="M593.7 789.8h0"/><path stroke="#ea3e25" stroke-width="7" d="M554.5 786.5h0"/><path stroke="#85190f" stroke-width="7" d="M558.3 782.2h0"/><path stroke="#001ae3" stroke-width="7.5" d="M674.3 774.9h0"/><path stroke="#001df5" stroke-width="7.5" d="M663.5 775.1h0"/><path stroke="#092df5" stroke-width="7.5" d="M571.5 739.3h0"/><path stroke="#1847f5" stroke-width="7.5" d="M561.4 728.6h0m75.5 34.7h0m37.5 23.2h0m19 5.3h0"/><path stroke="#2055f5" stroke-width="7.5" d="M665.7 765h0"/><path stroke="#3073f6" stroke-width="7.5" d="M607.1 772.6h0m83.4 21.6h0"/><path stroke="#3986f7" stroke-width="7.5" d="M617 755.5h0"/><path stroke="#49a4f8" stroke-width="7.5" d="M607 751.7h0"/><path stroke="#58c3f9" stroke-width="7.5" d="M569.8 725h0m19.1 13.8h0m41.5 36.4h0m13.4-12.3h0"/><path stroke="#60d3fa" stroke-width="7.5" d="M567.6 780.9h0m50-14.7h0m3-7.3h0"/><path stroke="#92fc9b" stroke-width="7.5" d="M573.9 784h0"/><path stroke="#d0fd5e" stroke-width="7.5" d="M564.6 775h0"/><path stroke="#0017d2" stroke-width="8" d="M552.5 683h0"/><path stroke="#092df5" stroke-width="8" d="M665 786.3h0"/><path stroke="#1847f5" stroke-width="8" d="M561.6 726h0m40-10.1h0m55.4 70.3h0"/><path stroke="#2055f5" stroke-width="8" d="M600.1 712.3h0m71 74.2h0m11 3.3h0"/><path stroke="#2864f6" stroke-width="8" d="M598.9 742.2h0"/><path stroke="#3073f6" stroke-width="8" d="M608.8 751.9h0"/><path stroke="#3986f7" stroke-width="8" d="M663.6 771.2h0"/><path stroke="#4195f7" stroke-width="8" d="M629.8 772.8h0"/><path stroke="#51b4f9" stroke-width="8" d="M620.6 759.5h0"/><path stroke="#bdfd6b" stroke-width="8" d="M610.3 751.9h0"/><path stroke="#f6ca45" stroke-width="8" d="M569.7 783h0"/><path stroke="#ed752f" stroke-width="8" d="M560.8 776.6h0"/><path stroke="#ea3824" stroke-width="8" d="M554.4 793h0"/><path stroke="#a72116" stroke-width="8" d="M570.2 781.1h0"/><path stroke="#85190f" stroke-width="8" d="M568 782.3h0"/><path stroke="#001df5" stroke-width="8.5" d="M679.6 799h0"/><path stroke="#0323f5" stroke-width="8.5" d="M558.2 683.1h0m126 97.4h0"/><path stroke="#092df5" stroke-width="8.5" d="M672.1 779.7h0m3.2 8.3h0"/><path stroke="#1847f5" stroke-width="8.5" d="M650.3 783.1h0"/><path stroke="#2055f5" stroke-width="8.5" d="M655.7 796.4h0m16.8-3.5h0"/><path stroke="#2864f6" stroke-width="8.5" d="M639 777.1h0"/><path stroke="#3986f7" stroke-width="8.5" d="M635.8 776.1h0"/><path stroke="#58c3f9" stroke-width="8.5" d="M637.2 764h0"/><path stroke="#68e3f4" stroke-width="8.5" d="M552.8 793.3h0"/><path stroke="#8cfca6" stroke-width="8.5" d="M566.2 783.7h0"/><path stroke="#99fc91" stroke-width="8.5" d="M609.6 798.7h0"/><path stroke="#ec5c29" stroke-width="8.5" d="M561.6 772.7h0"/><path stroke="#961d13" stroke-width="8.5" d="M538.4 780h0"/><path stroke="#0323f5" stroke-width="9" d="M577.6 737h0"/><path stroke="#092df5" stroke-width="9" d="M570.8 732.9h0m85.5 50.5h0"/><path stroke="#1039f5" stroke-width="9" d="M645.8 786.8h0"/><path stroke="#2055f5" stroke-width="9" d="M690.8 787.3h0"/><path stroke="#3073f6" stroke-width="9" d="M632.8 755.4h0"/><path stroke="#51b4f9" stroke-width="9" d="M564.7 782.7h0"/><path stroke="#68e3f4" stroke-width="9" d="M639.3 776h0"/><path stroke="#001ae3" stroke-width="9.5" d="M554 708.4h0"/><path stroke="#001df5" stroke-width="9.5" d="M559.5 732.7h0"/><path stroke="#0323f5" stroke-width="9.5" d="M683.5 782.6h0"/><path stroke="#1847f5" stroke-width="9.5" d="M577.2 727h0"/><path stroke="#51b4f9" stroke-width="9.5" d="M609.9 775h0"/><path stroke="#81fcbc" stroke-width="9.5" d="M550.8 790.4h0"/><path stroke="#86fcb1" stroke-width="10" d="M579.7 730.8h0"/><path stroke="#dafe59" stroke-width="10" d="M621.1 778.7h0"/><path stroke="#71f2ea" stroke-width="10.5" d="M618.4 779h0"/><path stroke="#bdfd6b" stroke-width="10.5" d="M567.7 779.8h0"/><path stroke="#0323f5" stroke-width="11" d="M677.2 801.8h0"/><path stroke="#1039f5" stroke-width="11" d="M667.4 780.5h0"/><path stroke="#4195f7" stroke-width="11" d="M626.2 752.4h0"/><path stroke="#bdfd6b" stroke-width="11" d="M565 773.6h0"/><path stroke="#0017d2" stroke-width="11.5" d="M686 800.6h0"/><path stroke="#4195f7" stroke-width="3" d="M612.4 804.8h0"/><path stroke="#58c3f9" stroke-width="3" d="M648 824.1h0"/><path stroke="#58c3f9" stroke-width="3.5" d="M637 813.7h0"/><path stroke="#86fcb1" stroke-width="3.5" d="M675.4 824.3h0"/><path stroke="#f9d849" stroke-width="3.5" d="M579.7 791.3h0"/><path stroke="#f1a039" stroke-width="3.5" d="M588 799.7h0"/><path stroke="#eb5127" stroke-width="3.5" d="M588.6 807.4h0"/><path stroke="#74140c" stroke-width="3.5" d="M584.8 802.2h0"/><path stroke="#3073f6" stroke-width="4" d="M588.1 772.6h0m55.7 52.4h0"/><path stroke="#3986f7" stroke-width="4" d="M642.2 814.8h0"/><path stroke="#49a4f8" stroke-width="4" d="M611.3 771.6h0"/><path stroke="#58c3f9" stroke-width="4" d="M613.4 801.6h0"/><path stroke="#68e3f4" stroke-width="4" d="M568 780.9h0"/><path stroke="#77fcdf" stroke-width="4" d="M614.8 829.7h0"/><path stroke="#7dfcc8" stroke-width="4" d="M576.9 802.3h0"/><path stroke="#abfc7b" stroke-width="4" d="M643.2 814.3h0"/><path stroke="#b4fd73" stroke-width="4" d="M602.8 794.7h0"/><path stroke="#bdfd6b" stroke-width="4" d="M660.9 807.1h0"/><path stroke="#eb4726" stroke-width="4" d="M592.7 808.5h0"/><path stroke="#961d13" stroke-width="4" d="M584.4 809.5h0"/><path stroke="#85190f" stroke-width="4" d="M619.7 824.1h0"/><path stroke="#74140c" stroke-width="4" d="M636.1 831.4h0m10.2-1.3h0"/><path stroke="#1847f5" stroke-width="4.5" d="M709.8 807.9h0m8-4.9h0"/><path stroke="#2055f5" stroke-width="4.5" d="M675.7 812.8h0"/><path stroke="#3986f7" stroke-width="4.5" d="M641.7 815.2h0"/><path stroke="#4195f7" stroke-width="4.5" d="M600 808.9h0"/><path stroke="#51b4f9" stroke-width="4.5" d="M607.5 805.4h0m6.4-17.5h0m57.1 11.4h0"/><path stroke="#58c3f9" stroke-width="4.5" d="M629.9 812.5h0"/><path stroke="#68e3f4" stroke-width="4.5" d="M669 825.1h0"/><path stroke="#71f2ea" stroke-width="4.5" d="M592.7 808.8h0"/><path stroke="#77fcdf" stroke-width="4.5" d="M626.6 801.7h0"/><path stroke="#7dfcc8" stroke-width="4.5" d="M580.7 780.9h0m79.4 25.1h0m11.6-2.5h0"/><path stroke="#86fcb1" stroke-width="4.5" d="M566.4 785.6h0"/><path stroke="#8cfca6" stroke-width="4.5" d="M626.2 786.1h0m15.4 13.6h0"/><path stroke="#92fc9b" stroke-width="4.5" d="M591.9 781.7h0"/><path stroke="#99fc91" stroke-width="4.5" d="M563.3 792.4h0"/><path stroke="#a3fc85" stroke-width="4.5" d="M652.8 822.3h0"/><path stroke="#b4fd73" stroke-width="4.5" d="M579.2 801.5h0"/><path stroke="#bdfd6b" stroke-width="4.5" d="M645.2 791.5h0m9.2 7.5h0"/><path stroke="#c6fd64" stroke-width="4.5" d="M644.3 826.3h0"/><path stroke="#fbe74d" stroke-width="4.5" d="M606.5 800.9h0"/><path stroke="#f1a039" stroke-width="4.5" d="M587.9 780.7h0"/><path stroke="#ef8f35" stroke-width="4.5" d="M594.1 801.7h0"/><path stroke="#ec5c29" stroke-width="4.5" d="M607.4 777.7h0"/><path stroke="#eb4726" stroke-width="4.5" d="M576.5 800.4h0"/><path stroke="#ea3e25" stroke-width="4.5" d="M562.2 788.3h0"/><path stroke="#961d13" stroke-width="4.5" d="M573.3 807.2h0m23.3-37.8h0m30 55.6h0"/><path stroke="#85190f" stroke-width="4.5" d="M575.7 805.3h0m53.7 23.8h0m1.9 1.4h0"/><path stroke="#74140c" stroke-width="4.5" d="M621.1 780.7h0"/><path stroke="#1039f5" stroke-width="5" d="M699.4 795h0"/><path stroke="#3073f6" stroke-width="5" d="M630.7 806.7h0m11.9-11.5h0"/><path stroke="#3986f7" stroke-width="5" d="M617 800.7h0"/><path stroke="#49a4f8" stroke-width="5" d="M584.6 774.9h0m9.4-3.5h0m17.2 7.7h0m24 12.3h0"/><path stroke="#51b4f9" stroke-width="5" d="M574 786h0m72.8 29.8h0m8.7 9.5h0"/><path stroke="#58c3f9" stroke-width="5" d="M626 793.7h0"/><path stroke="#60d3fa" stroke-width="5" d="M575.3 798.5h0m13.5 7.5h0m3.1-4.9h0m71.2 15.8h0"/><path stroke="#68e3f4" stroke-width="5" d="M600.5 803.8h0"/><path stroke="#71f2ea" stroke-width="5" d="M579.5 770.5h0m21.8 4.4h0m7.5-1.5h0"/><path stroke="#77fcdf" stroke-width="5" d="M636.5 809.6h0m45.9 2.7h0"/><path stroke="#7afcd3" stroke-width="5" d="M639.1 799.7h0m1 14h0m7.4 8.4h0m1.5-9.5h0"/><path stroke="#7dfcc8" stroke-width="5" d="M595.3 772.6h0"/><path stroke="#81fcbc" stroke-width="5" d="M574 773.3h0m102 31.3h0"/><path stroke="#86fcb1" stroke-width="5" d="M593 795h0m16-3.2h0m44.1 40.9h0"/><path stroke="#8cfca6" stroke-width="5" d="M588.7 773.3h0"/><path stroke="#99fc91" stroke-width="5" d="M611.1 805h0m11.7-20.8h0m24.5 13.6h0"/><path stroke="#a3fc85" stroke-width="5" d="M644.5 830.7h0m32.7-10.9h0"/><path stroke="#b4fd73" stroke-width="5" d="M574 796.2h0"/><path stroke="#bdfd6b" stroke-width="5" d="M574.8 798.4h0"/><path stroke="#f7f551" stroke-width="5" d="M572.7 781.2h0m15.1-3.5h0"/><path stroke="#f9d849" stroke-width="5" d="M589.8 806.3h0"/><path stroke="#f5bc41" stroke-width="5" d="M636 827h0m6.4-6.6h0"/><path stroke="#ed752f" stroke-width="5" d="M649.4 820.8h0"/><path stroke="#eb4726" stroke-width="5" d="M570.1 787.8h0m48.6 41.6h0"/><path stroke="#ea3824" stroke-width="5" d="M594.3 809.6h0m38.7-1.9h0"/><path stroke="#d93020" stroke-width="5" d="M660.9 827.1h0"/><path stroke="#b72619" stroke-width="5" d="M629.4 826.6h0"/><path stroke="#a72116" stroke-width="5" d="M605.3 824.4h0m25.6 7.3h0"/><path stroke="#961d13" stroke-width="5" d="M575.5 801.6h0m19.8 9.3h0m30.3 12h0m19.9 9.7h0m4.1 2.2h0"/><path stroke="#85190f" stroke-width="5" d="M586 805.1h0m17.4-11.5h0m5.6-1h0m4.8 30.3h0"/><path stroke="#74140c" stroke-width="5" d="M582.3 803.5h0m30.7-23.5h0m24.8 49.1h0m10.2 2.2h0"/><path stroke="#3073f6" stroke-width="5.5" d="M561.6 781.6h0"/><path stroke="#49a4f8" stroke-width="5.5" d="M605.3 778.4h0m25.8 13.9h0"/><path stroke="#51b4f9" stroke-width="5.5" d="M621.2 785.5h0m30.1 44.7h0m0.5 3.3h0"/><path stroke="#58c3f9" stroke-width="5.5" d="M608.2 823.8h0m56.7 2.3h0"/><path stroke="#60d3fa" stroke-width="5.5" d="M593.4 773.5h0m11.8 18.1h0m26.8 34.6h0m31.5 0.4h0"/><path stroke="#68e3f4" stroke-width="5.5" d="M563.5 791.1h0m92.5 8.5h0m24.5 8.9h0"/><path stroke="#71f2ea" stroke-width="5.5" d="M626.3 797.1h0"/><path stroke="#77fcdf" stroke-width="5.5" d="M587.2 804h0m60.5 9.3h0"/><path stroke="#7afcd3" stroke-width="5.5" d="M615.4 779h0m13.2 46.6h0m40.4-10.9h0"/><path stroke="#86fcb1" stroke-width="5.5" d="M604.8 798.4h0m10.1-11h0m0.9-1.6h0m19.4 11.4h0m21.9 12.4h0"/><path stroke="#8cfca6" stroke-width="5.5" d="M587.9 803.1h0m53.8 17h0"/><path stroke="#92fc9b" stroke-width="5.5" d="M605.8 812.8h0m73.2-7.8h0"/><path stroke="#99fc91" stroke-width="5.5" d="M581.5 790h0m46.9 35.8h0"/><path stroke="#a3fc85" stroke-width="5.5" d="M603.3 774.2h0m7.9 32.6h0m0.9-30.7h0"/><path stroke="#b4fd73" stroke-width="5.5" d="M581.3 775.1h0m5.3 12.1h0m82.8 15.2h0"/><path stroke="#bdfd6b" stroke-width="5.5" d="M576.9 781.1h0"/><path stroke="#c6fd64" stroke-width="5.5" d="M611.9 772.7h0m50.2 29.8h0"/><path stroke="#d0fd5e" stroke-width="5.5" d="M617.3 783.4h0m18.6 9.3h0m12.9 0.1h0m8 8.9h0"/><path stroke="#dafe59" stroke-width="5.5" d="M627 825.8h0"/><path stroke="#e4fe56" stroke-width="5.5" d="M572.2 791.2h0m101.6 8.2h0"/><path stroke="#eefe55" stroke-width="5.5" d="M586.5 785.1h0m17.6 2.1h0m16.4 30.9h0"/><path stroke="#f7f551" stroke-width="5.5" d="M596.6 814.1h0m38.6 8.9h0m39.4 2.6h0"/><path stroke="#f9d849" stroke-width="5.5" d="M624.6 829.2h0"/><path stroke="#f1a039" stroke-width="5.5" d="M633.7 829.8h0"/><path stroke="#ef8f35" stroke-width="5.5" d="M581.2 797.7h0"/><path stroke="#ed752f" stroke-width="5.5" d="M636.9 829.8h0"/><path stroke="#eb5127" stroke-width="5.5" d="M587.8 794.1h0"/><path stroke="#ea3824" stroke-width="5.5" d="M603 798.2h0"/><path stroke="#c82a1d" stroke-width="5.5" d="M632.5 830.1h0"/><path stroke="#b72619" stroke-width="5.5" d="M602.7 803.3h0"/><path stroke="#a72116" stroke-width="5.5" d="M599 811.3h0m26.8 12.7h0m11.3 1.4h0"/><path stroke="#961d13" stroke-width="5.5" d="M581.2 802.1h0m49.8 32.6h0m17.7 2.3h0"/><path stroke="#85190f" stroke-width="5.5" d="M596 815.2h0m12.7-1.7h0"/><path stroke="#74140c" stroke-width="5.5" d="M570.8 792.1h0"/><path stroke="#2864f6" stroke-width="6" d="M645.7 816.5h0"/><path stroke="#49a4f8" stroke-width="6" d="M594 776.9h0m16.6 9.9h0m39.4 13h0"/><path stroke="#51b4f9" stroke-width="6" d="M680.1 811.7h0"/><path stroke="#58c3f9" stroke-width="6" d="M584 786.3h0m26.8-4.2h0m5.3 18.2h0m17.8 19.4h0"/><path stroke="#60d3fa" stroke-width="6" d="M610.6 799.3h0m5.5 21.6h0m28.7-30.2h0m5.7 29.8h0m14.1 2.8h0"/><path stroke="#68e3f4" stroke-width="6" d="M577.2 798.3h0m15 11.8h0m4.8 11.6h0m49.1-20.5h0"/><path stroke="#71f2ea" stroke-width="6" d="M587.2 786.7h0m28.7-6.6h0"/><path stroke="#77fcdf" stroke-width="6" d="M585.9 797.1h0m30.6 24.2h0m6.1-40.5h0m31.8 23.5h0m24.2 4.4h0"/><path stroke="#7afcd3" stroke-width="6" d="M647.6 819.8h0"/><path stroke="#7dfcc8" stroke-width="6" d="M665 817.2h0m12.8-21.8h0"/><path stroke="#81fcbc" stroke-width="6" d="M605.3 782.6h0"/><path stroke="#86fcb1" stroke-width="6" d="M611.1 793.1h0m1.1 5h0m42.8 21.4h0"/><path stroke="#8cfca6" stroke-width="6" d="M665.8 820.3h0"/><path stroke="#92fc9b" stroke-width="6" d="M651.7 817.7h0"/><path stroke="#99fc91" stroke-width="6" d="M595.2 789.6h0m33.6 14.4h0m51.3 10.4h0"/><path stroke="#a3fc85" stroke-width="6" d="M586.9 808.8h0m5.1-7.5h0"/><path stroke="#abfc7b" stroke-width="6" d="M578.1 775.3h0m64.9 37.5h0"/><path stroke="#b4fd73" stroke-width="6" d="M604.9 784h0m51.7 18.9h0"/><path stroke="#bdfd6b" stroke-width="6" d="M638.2 790.7h0"/><path stroke="#c6fd64" stroke-width="6" d="M611.5 774h0"/><path stroke="#d0fd5e" stroke-width="6" d="M570.7 774h0m20.2 11h0"/><path stroke="#dafe59" stroke-width="6" d="M605.6 769.3h0m48.4 50.5h0"/><path stroke="#eefe55" stroke-width="6" d="M665.5 805.4h0m1.6-8.3h0"/><path stroke="#fbe74d" stroke-width="6" d="M587.1 777.7h0"/><path stroke="#f6ca45" stroke-width="6" d="M596.1 810.8h0"/><path stroke="#f5bc41" stroke-width="6" d="M564.9 784.9h0"/><path stroke="#f3ae3d" stroke-width="6" d="M603.7 816.5h0"/><path stroke="#ed752f" stroke-width="6" d="M613.7 788.4h0"/><path stroke="#eb5127" stroke-width="6" d="M578.4 807.6h0"/><path stroke="#ea3e25" stroke-width="6" d="M595.2 812.1h0m3.2-0.5h0"/><path stroke="#ea3824" stroke-width="6" d="M572.5 805h0m15.2 4.4h0m16.8 6.8h0"/><path stroke="#d93020" stroke-width="6" d="M640.8 798.1h0"/><path stroke="#c82a1d" stroke-width="6" d="M586.6 774.5h0"/><path stroke="#b72619" stroke-width="6" d="M663.4 800.4h0"/><path stroke="#a72116" stroke-width="6" d="M582.5 803.8h0m55.1 25.5h0m10.7 5.4h0"/><path stroke="#961d13" stroke-width="6" d="M612.2 816h0m3.1-21.6h0m22.6 35.1h0m11.1 6.9h0"/><path stroke="#74140c" stroke-width="6" d="M573 784.5h0m7.4 17.7h0m14.1-11.5h0m22.8 30.6h0m3.3 5.7h0m2.1-0.1h0m1.9-2.1h0m16.3-34.1h0m4.2 35.1h0"/><path stroke="#2055f5" stroke-width="6.5" d="M576.8 800h0"/><path stroke="#2864f6" stroke-width="6.5" d="M634.2 798.6h0m5.1-0.4h0"/><path stroke="#3073f6" stroke-width="6.5" d="M666.4 804.6h0m10.7-0.3h0"/><path stroke="#4195f7" stroke-width="6.5" d="M572.5 773.3h0m12.4 28.9h0"/><path stroke="#49a4f8" stroke-width="6.5" d="M647.5 793.9h0m4.4-1.7h0"/><path stroke="#51b4f9" stroke-width="6.5" d="M585.1 774.9h0m77 17h0m2.1 5.6h0"/><path stroke="#58c3f9" stroke-width="6.5" d="M576.1 772.6h0m76.7 23.9h0"/><path stroke="#60d3fa" stroke-width="6.5" d="M583.6 777.8h0m65 35.2h0m10.8-17.5h0"/><path stroke="#68e3f4" stroke-width="6.5" d="M569.6 795.7h0m45.1 6.3h0"/><path stroke="#71f2ea" stroke-width="6.5" d="M563 778.9h0m45.5 27.2h0m7.9 17.9h0m5.7-38.8h0m35.2 11.4h0"/><path stroke="#77fcdf" stroke-width="6.5" d="M603.8 769.5h0"/><path stroke="#7dfcc8" stroke-width="6.5" d="M664.3 807h0"/><path stroke="#81fcbc" stroke-width="6.5" d="M663.6 814.1h0"/><path stroke="#86fcb1" stroke-width="6.5" d="M572.8 799.7h0m78.7 2.4h0m8-5.7h0m8.5 20.1h0"/><path stroke="#8cfca6" stroke-width="6.5" d="M578.5 788.3h0m37.6 1.7h0"/><path stroke="#92fc9b" stroke-width="6.5" d="M635.8 794.4h0m49 22.7h0"/><path stroke="#99fc91" stroke-width="6.5" d="M651.3 821.3h0m1.1-30.1h0"/><path stroke="#a3fc85" stroke-width="6.5" d="M583.8 804h0"/><path stroke="#abfc7b" stroke-width="6.5" d="M676.9 795.5h0"/><path stroke="#b4fd73" stroke-width="6.5" d="M570.7 793.8h0m2.5-11.2h0m3.7 15.8h0m66.1 6.1h0"/><path stroke="#bdfd6b" stroke-width="6.5" d="M576.1 787.2h0"/><path stroke="#d0fd5e" stroke-width="6.5" d="M574.1 797.9h0m4.8-20h0m11.8 31.1h0m36.3-10h0m41.2 23.4h0"/><path stroke="#dafe59" stroke-width="6.5" d="M664.2 823.9h0"/><path stroke="#f7f551" stroke-width="6.5" d="M596.9 783.9h0m55.8 11h0"/><path stroke="#fbe74d" stroke-width="6.5" d="M569.9 796.2h0m63.6 33.4h0"/><path stroke="#f9d849" stroke-width="6.5" d="M593.6 815.7h0"/><path stroke="#f3ae3d" stroke-width="6.5" d="M630.5 831.9h0"/><path stroke="#ec682c" stroke-width="6.5" d="M617.4 825.3h0"/><path stroke="#eb4726" stroke-width="6.5" d="M580.4 802.8h0m30.6 16.8h0"/><path stroke="#ea3e25" stroke-width="6.5" d="M665.6 817h0"/><path stroke="#ea3824" stroke-width="6.5" d="M611.8 818.7h0"/><path stroke="#c82a1d" stroke-width="6.5" d="M679.2 812.3h0"/><path stroke="#a72116" stroke-width="6.5" d="M649.2 832.7h0"/><path stroke="#961d13" stroke-width="6.5" d="M609.2 775.9h0m5.8 53.5h0m12.3-5.9h0m23.2 16.4h0"/><path stroke="#85190f" stroke-width="6.5" d="M574.3 802.5h0m17 4.1h0m15.3 18.2h0m32.3 5.7h0"/><path stroke="#2055f5" stroke-width="7" d="M671.6 807.6h0"/><path stroke="#49a4f8" stroke-width="7" d="M637.9 816.3h0m5.3-14.6h0m16.3 1.1h0m7.6 15.2h0"/><path stroke="#51b4f9" stroke-width="7" d="M561.7 781.8h0"/><path stroke="#58c3f9" stroke-width="7" d="M586 803.3h0m56.3 9.1h0"/><path stroke="#60d3fa" stroke-width="7" d="M587.8 803.3h0m13.6 8h0m4.8-18h0"/><path stroke="#68e3f4" stroke-width="7" d="M658.8 812.5h0"/><path stroke="#7afcd3" stroke-width="7" d="M594.5 780.1h0m2.5 7.3h0"/><path stroke="#7dfcc8" stroke-width="7" d="M585 805.1h0"/><path stroke="#81fcbc" stroke-width="7" d="M618.8 787.6h0"/><path stroke="#86fcb1" stroke-width="7" d="M604 823.3h0"/><path stroke="#92fc9b" stroke-width="7" d="M570.4 794.7h0m57.1 3.6h0"/><path stroke="#99fc91" stroke-width="7" d="M628.6 827.5h0"/><path stroke="#abfc7b" stroke-width="7" d="M575.3 791.1h0"/><path stroke="#b4fd73" stroke-width="7" d="M582.8 779.2h0"/><path stroke="#c6fd64" stroke-width="7" d="M573.4 779h0m27 14.3h0m44.7 11.7h0"/><path stroke="#d0fd5e" stroke-width="7" d="M589.2 786.6h0"/><path stroke="#dafe59" stroke-width="7" d="M568.7 785.5h0"/><path stroke="#eefe55" stroke-width="7" d="M655.4 791h0"/><path stroke="#fbe74d" stroke-width="7" d="M594.8 807.4h0m27.7 20.2h0"/><path stroke="#f9d849" stroke-width="7" d="M566.1 785.4h0"/><path stroke="#f6ca45" stroke-width="7" d="M573.9 804h0"/><path stroke="#ec682c" stroke-width="7" d="M642.2 835.8h0"/><path stroke="#ec5c29" stroke-width="7" d="M585.6 810h0m50.2 19.1h0"/><path stroke="#ea3824" stroke-width="7" d="M599.7 814.1h0"/><path stroke="#d93020" stroke-width="7" d="M628.1 816.4h0"/><path stroke="#961d13" stroke-width="7" d="M581.4 801.9h0"/><path stroke="#85190f" stroke-width="7" d="M577.8 804.2h0m12.3 1.5h0"/><path stroke="#74140c" stroke-width="7" d="M577.3 801.3h0m33.9 16.1h0m26.3 11.2h0"/><path stroke="#2864f6" stroke-width="7.5" d="M645.2 821.4h0"/><path stroke="#3073f6" stroke-width="7.5" d="M600.4 794.1h0m49.2 21.5h0"/><path stroke="#3986f7" stroke-width="7.5" d="M598.2 769.8h0m67.8 29.2h0"/><path stroke="#51b4f9" stroke-width="7.5" d="M600.3 794.9h0m30.7-0.6h0m43.5 30.1h0"/><path stroke="#58c3f9" stroke-width="7.5" d="M579.1 768.7h0"/><path stroke="#68e3f4" stroke-width="7.5" d="M593.5 780h0"/><path stroke="#71f2ea" stroke-width="7.5" d="M601.9 799.4h0"/><path stroke="#77fcdf" stroke-width="7.5" d="M654.8 813h0"/><path stroke="#7afcd3" stroke-width="7.5" d="M592.7 806.7h0"/><path stroke="#7dfcc8" stroke-width="7.5" d="M585 789.8h0m16.4 17.6h0m55.2 8.7h0m1 1.7h0"/><path stroke="#81fcbc" stroke-width="7.5" d="M657.8 817.9h0"/><path stroke="#8cfca6" stroke-width="7.5" d="M567.8 771.2h0m41.1 14.9h0m21 8.2h0m14.3 30.4h0"/><path stroke="#92fc9b" stroke-width="7.5" d="M599.9 778.9h0"/><path stroke="#abfc7b" stroke-width="7.5" d="M589.3 781.1h0m16.4 21.6h0m71.1 3.2h0"/><path stroke="#b4fd73" stroke-width="7.5" d="M570.6 798.6h0"/><path stroke="#bdfd6b" stroke-width="7.5" d="M676.6 805.7h0"/><path stroke="#f7f551" stroke-width="7.5" d="M595.5 814.8h0"/><path stroke="#ec682c" stroke-width="7.5" d="M577.4 800.4h0m42.2-10.1h0"/><path stroke="#a72116" stroke-width="7.5" d="M585.7 801.1h0"/><path stroke="#85190f" stroke-width="7.5" d="M595.2 779.6h0"/><path stroke="#74140c" stroke-width="7.5" d="M620 822.5h0"/><path stroke="#1847f5" stroke-width="8" d="M664 797.4h0"/><path stroke="#4195f7" stroke-width="8" d="M606.2 806.7h0"/><path stroke="#51b4f9" stroke-width="8" d="M612.4 798.1h0m58.3 17.9h0m9.9-14.4h0"/><path stroke="#58c3f9" stroke-width="8" d="M587.4 784.5h0"/><path stroke="#60d3fa" stroke-width="8" d="M592.8 815.6h0m68.5 7.5h0"/><path stroke="#68e3f4" stroke-width="8" d="M607.7 804.9h0m59.9 19.1h0"/><path stroke="#71f2ea" stroke-width="8" d="M672.5 797.9h0"/><path stroke="#77fcdf" stroke-width="8" d="M670.6 821.7h0"/><path stroke="#7dfcc8" stroke-width="8" d="M566.7 785.9h0"/><path stroke="#81fcbc" stroke-width="8" d="M680.8 795.4h0"/><path stroke="#86fcb1" stroke-width="8" d="M581.6 790.4h0"/><path stroke="#99fc91" stroke-width="8" d="M633.7 831h0"/><path stroke="#a3fc85" stroke-width="8" d="M586.3 772.6h0"/><path stroke="#c6fd64" stroke-width="8" d="M645.7 799.1h0m14 14.3h0"/><path stroke="#fbe74d" stroke-width="8" d="M598.6 814.1h0"/><path stroke="#ec682c" stroke-width="8" d="M616.1 827.5h0"/><path stroke="#ea3e25" stroke-width="8" d="M673.7 805.9h0"/><path stroke="#d93020" stroke-width="8" d="M652.6 806.8h0"/><path stroke="#a72116" stroke-width="8" d="M578.1 798.6h0"/><path stroke="#961d13" stroke-width="8" d="M570.4 803.6h0m70 29.3h0"/><path stroke="#85190f" stroke-width="8" d="M588.4 807.8h0"/><path stroke="#74140c" stroke-width="8" d="M612.6 823.3h0"/><path stroke="#49a4f8" stroke-width="8.5" d="M627.9 810.5h0"/><path stroke="#60d3fa" stroke-width="8.5" d="M623.1 782.1h0m26.5 23.6h0m25.3-10.1h0"/><path stroke="#77fcdf" stroke-width="8.5" d="M629.4 793.9h0"/><path stroke="#7afcd3" stroke-width="8.5" d="M575.8 772h0"/><path stroke="#abfc7b" stroke-width="8.5" d="M614.8 826.2h0"/><path stroke="#b4fd73" stroke-width="8.5" d="M629.3 812.8h0"/><path stroke="#d0fd5e" stroke-width="8.5" d="M622.7 829.6h0"/><path stroke="#f6ca45" stroke-width="8.5" d="M592.6 810.7h0"/><path stroke="#ea3e25" stroke-width="8.5" d="M599 820.7h0"/><path stroke="#49a4f8" stroke-width="9" d="M595 786.4h0"/><path stroke="#68e3f4" stroke-width="9" d="M572.7 801.6h0"/><path stroke="#7dfcc8" stroke-width="9" d="M652.1 816.4h0"/><path stroke="#81fcbc" stroke-width="9" d="M642.9 794.4h0"/><path stroke="#99fc91" stroke-width="9" d="M567.9 797h0m74.3-8.3h0"/><path stroke="#abfc7b" stroke-width="9" d="M629.5 790.5h0"/><path stroke="#bdfd6b" stroke-width="9" d="M661.6 798.8h0"/><path stroke="#ea3824" stroke-width="9" d="M613.5 826.3h0"/><path stroke="#961d13" stroke-width="9" d="M571.5 773.3h0"/><path stroke="#85190f" stroke-width="9" d="M631.8 828.9h0"/><path stroke="#3073f6" stroke-width="9.5" d="M677.1 807.5h0"/><path stroke="#51b4f9" stroke-width="9.5" d="M571.7 771.4h0"/><path stroke="#68e3f4" stroke-width="9.5" d="M599.1 793.9h0"/><path stroke="#ec682c" stroke-width="9.5" d="M635.7 827.9h0"/><path stroke="#74140c" stroke-width="9.5" d="M607.1 816.9h0"/><path stroke="#b4fd73" stroke-width="10" d="M650.9 833.7h0"/><path stroke="#3073f6" stroke-width="10.5" d="M636.3 811.9h0"/><path stroke="#49a4f8" stroke-width="10.5" d="M577.5 802.1h0"/><path stroke="#bdfd6b" stroke-width="10.5" d="M605.7 777.6h0"/><path stroke="#c6fd64" stroke-width="11" d="M676.4 802.7h0"/><path stroke="#961d13" stroke-width="11" d="M584.2 806.1h0"/><path stroke="#001df5" stroke-width="2" d="M768.8 790.1h0"/><path stroke="#001df5" stroke-width="2" d="M752.8 840h0m64.5-34.2h0"/><path stroke="#2864f6" stroke-width="2" d="M827.6 803.2h0"/><path stroke="#001df5" stroke-width="2.5" d="M748.1 857.4h0m20.7-67.4h0m33-17.2h0m0.2-0.1h0"/><path stroke="#1039f5" stroke-width="2.5" d="M689.8 765.4h0m0 0h0m27.8 61.5h0m18.8-18h0m19.1-71.6h0"/><path stroke="#3073f6" stroke-width="2.5" d="M765.5 863.1h0"/><path stroke="#f7f551" stroke-width="2.5" d="M709 820.2h0"/><path stroke="#1039f5" stroke-width="3" d="M723 839h0"/><path stroke="#1847f5" stroke-width="3" d="M825.3 818h0"/><path stroke="#74140c" stroke-width="3" d="M663.3 851.4h0"/><path stroke="#0017d2" stroke-width="3.5" d="M728.7 697.3h0"/><path stroke="#092df5" stroke-width="3.5" d="M764.6 871.3h0"/><path stroke="#1039f5" stroke-width="3.5" d="M736.7 808.9h0m32.8 56h0"/><path stroke="#2864f6" stroke-width="3.5" d="M722.7 838.9h0"/><path stroke="#86fcb1" stroke-width="3.5" d="M669.9 866.7h0"/><path stroke="#a3fc85" stroke-width="3.5" d="M686.9 857.4h0"/><path stroke="#001df5" stroke-width="4" d="M697.5 795.6h0"/><path stroke="#001df5" stroke-width="4" d="M766.4 866.8h0m52.5-0.5h0"/><path stroke="#0323f5" stroke-width="4" d="M705.2 800.2h0m36.2 66.8h0m58.2-17.1h0"/><path stroke="#092df5" stroke-width="4" d="M708.7 795.2h0m52.1 68.3h0m12.5-3h0"/><path stroke="#1039f5" stroke-width="4" d="M746.5 835.6h0"/><path stroke="#1847f5" stroke-width="4" d="M707.9 794h0m63.4 71.8h0m51.4-43h0"/><path stroke="#2055f5" stroke-width="4" d="M712.8 796.6h0m13.6 53.3h0m30.4-0.9h0m7.3-6.1h0"/><path stroke="#2864f6" stroke-width="4" d="M669.6 841.7h0m30.3 28.3h0"/><path stroke="#51b4f9" stroke-width="4" d="M687.4 799.4h0m5.5 62.1h0m3.9 2.9h0"/><path stroke="#60d3fa" stroke-width="4" d="M678.4 871.7h0"/><path stroke="#71f2ea" stroke-width="4" d="M674.2 819h0"/><path stroke="#ee8231" stroke-width="4" d="M669 866.9h0"/><path stroke="#ec5c29" stroke-width="4" d="M665.1 846.6h0m1.9-15.1h0"/><path stroke="#001ae3" stroke-width="4.5" d="M817.3 818.7h0"/><path stroke="#001df5" stroke-width="4.5" d="M756.8 835.2h0m12.7 5.7h0"/><path stroke="#001df5" stroke-width="4.5" d="M772.1 843.6h0m49.5-85.6h0"/><path stroke="#0323f5" stroke-width="4.5" d="M821.6 864.3h0"/><path stroke="#092df5" stroke-width="4.5" d="M689.8 797.4h0m6.1 4.2h0"/><path stroke="#1039f5" stroke-width="4.5" d="M687.8 779.9h0m18.6 12.5h0m11.8-4.6h0m0.7 4.4h0m10 14.8h0m0.8 65.4h0m0.3 0h0m87.6-117.7h0"/><path stroke="#2055f5" stroke-width="4.5" d="M726.3 849.6h0m0.4-57.7h0m23.8 36.1h0m14.1 39.2h0"/><path stroke="#2864f6" stroke-width="4.5" d="M766 867.4h0m11.5-5.1h0"/><path stroke="#3073f6" stroke-width="4.5" d="M713.9 811.8h0"/><path stroke="#3986f7" stroke-width="4.5" d="M676.2 865.6h0m98.6-11.3h0"/><path stroke="#4195f7" stroke-width="4.5" d="M686.7 752.6h0"/><path stroke="#49a4f8" stroke-width="4.5" d="M668.2 851.5h0m13.6-22.3h0m9.5 9.2h0m7.2 20.1h0"/><path stroke="#51b4f9" stroke-width="4.5" d="M732.5 819.1h0"/><path stroke="#58c3f9" stroke-width="4.5" d="M679.9 872.2h0m18-34.4h0m3.1 14.5h0m23.7-45.6h0"/><path stroke="#60d3fa" stroke-width="4.5" d="M697 849.1h0"/><path stroke="#68e3f4" stroke-width="4.5" d="M679.1 830.5h0"/><path stroke="#71f2ea" stroke-width="4.5" d="M687.9 857.8h0"/><path stroke="#77fcdf" stroke-width="4.5" d="M675.7 836.1h0m29.5 27.6h0"/><path stroke="#7afcd3" stroke-width="4.5" d="M697.5 861.5h0"/><path stroke="#81fcbc" stroke-width="4.5" d="M678.4 821.5h0"/><path stroke="#8cfca6" stroke-width="4.5" d="M683.4 863.6h0"/><path stroke="#92fc9b" stroke-width="4.5" d="M692.9 844.1h0"/><path stroke="#abfc7b" stroke-width="4.5" d="M692.2 781h0"/><path stroke="#d0fd5e" stroke-width="4.5" d="M688.6 831.1h0"/><path stroke="#eefe55" stroke-width="4.5" d="M683.6 853.7h0"/><path stroke="#ef8f35" stroke-width="4.5" d="M689.1 859.3h0"/><path stroke="#ec5c29" stroke-width="4.5" d="M666.9 868.3h0"/><path stroke="#ea3824" stroke-width="4.5" d="M667.2 865.9h0"/><path stroke="#74140c" stroke-width="4.5" d="M668.8 858.8h0m1 4.8h0"/><path stroke="#001df5" stroke-width="5" d="M749.8 790.8h0m0.3 0.3h0"/><path stroke="#001df5" stroke-width="5" d="M821.6 758.4h0"/><path stroke="#0323f5" stroke-width="5" d="M684.2 786.1h0m82.6 75.9h0"/><path stroke="#092df5" stroke-width="5" d="M685.3 796.9h0"/><path stroke="#1039f5" stroke-width="5" d="M667.4 841.8h0m0.8-99.4h0m39.5 55.7h0m6 14.2h0m4.3-8.3h0m10.7 3.9h0m11 4.1h0m78.7-56.8h0"/><path stroke="#1847f5" stroke-width="5" d="M686.5 785.6h0m90.7 80.7h0"/><path stroke="#2055f5" stroke-width="5" d="M628.7 743.3h0m47.3 12.7h0m6 69.7h0m8.7-34.6h0m6.9-3.6h0m2.4-32.3h0m5.6 34.3h0m1.4 38.7h0m4.8-31.7h0m3.2 16.4h0m5.3 30.7h0m16.8-19.4h0m8.3-103.6h0m19.8 87.3h0m0.3 0h0"/><path stroke="#2864f6" stroke-width="5" d="M663.2 821.7h0m14.4-64.1h0m14 44.4h0m7.6-11.6h0m45.9 41.6h0"/><path stroke="#3073f6" stroke-width="5" d="M703.6 849.9h0m29.5-36.3h0"/><path stroke="#3986f7" stroke-width="5" d="M666.5 842h0m7.3-84.3h0m16.4 114.8h0"/><path stroke="#4195f7" stroke-width="5" d="M700.5 794.7h0"/><path stroke="#49a4f8" stroke-width="5" d="M681.4 830h0m1.4 2.3h0m2.4-45.5h0m32.1 84.9h0"/><path stroke="#51b4f9" stroke-width="5" d="M670.6 867.1h0m14.3-43.3h0"/><path stroke="#58c3f9" stroke-width="5" d="M676.4 852.9h0m2.9 3h0m2.1-12.4h0m14.1 14.7h0m1.8-22.3h0m1.7 0.4h0m3.3 8.7h0"/><path stroke="#7afcd3" stroke-width="5" d="M689 856h0"/><path stroke="#86fcb1" stroke-width="5" d="M665.7 829.9h0"/><path stroke="#8cfca6" stroke-width="5" d="M662.7 824.6h0m24.5 24.9h0"/><path stroke="#92fc9b" stroke-width="5" d="M737.1 823.6h0"/><path stroke="#a3fc85" stroke-width="5" d="M675.9 870.1h0"/><path stroke="#dafe59" stroke-width="5" d="M668 854.5h0"/><path stroke="#eefe55" stroke-width="5" d="M675.2 873.3h0"/><path stroke="#f3ae3d" stroke-width="5" d="M666.3 839h0m27.9 1.1h0"/><path stroke="#ea3e25" stroke-width="5" d="M608 835.2h0"/><path stroke="#961d13" stroke-width="5" d="M663.5 854.3h0"/><path stroke="#85190f" stroke-width="5" d="M665.5 852.6h0"/><path stroke="#001df5" stroke-width="5.5" d="M704.9 810.6h0"/><path stroke="#001df5" stroke-width="5.5" d="M713.2 802.9h0"/><path stroke="#0323f5" stroke-width="5.5" d="M704.4 802.6h0"/><path stroke="#092df5" stroke-width="5.5" d="M723.6 793.9h0m17-0.4h0"/><path stroke="#1039f5" stroke-width="5.5" d="M686.6 801.1h0m10.1 5.1h0m14.3-8.2h0m1-40.7h0m0-0.2h0m19.7 40.4h0m7 33.6h0m85.6 32.6h0"/><path stroke="#1847f5" stroke-width="5.5" d="M687.5 789.3h0m7-1.7h0m12.9 6.6h0m30.4 1.7h0m8.8 33.4h0m75.5-5.2h0"/><path stroke="#2864f6" stroke-width="5.5" d="M668.7 823.8h0m17.9-23.7h0m13.2 60.6h0m32.2-55.7h0"/><path stroke="#3073f6" stroke-width="5.5" d="M733.6 788.1h0"/><path stroke="#3986f7" stroke-width="5.5" d="M694.3 861.3h0m13.5-64.8h0"/><path stroke="#4195f7" stroke-width="5.5" d="M691.9 788.7h0m5.8-4.3h0"/><path stroke="#49a4f8" stroke-width="5.5" d="M673.2 861h0"/><path stroke="#51b4f9" stroke-width="5.5" d="M664 827.2h0m37.9 30.6h0m1-66h0m4-0.9h0m27.7 23.1h0m6.5 8.6h0"/><path stroke="#58c3f9" stroke-width="5.5" d="M672.8 831.8h0m3.5-2.9h0m0.2 40.8h0m4.9-40.4h0m13.9-43h0m5.4 63.3h0m3.2-57.2h0"/><path stroke="#60d3fa" stroke-width="5.5" d="M667.5 828.9h0m1.8 21h0"/><path stroke="#68e3f4" stroke-width="5.5" d="M684.2 844.6h0m12.6-5.2h0"/><path stroke="#7afcd3" stroke-width="5.5" d="M683.8 844.2h0m3.5 24.1h0"/><path stroke="#7dfcc8" stroke-width="5.5" d="M718.2 816.9h0"/><path stroke="#86fcb1" stroke-width="5.5" d="M687.3 876.7h0"/><path stroke="#8cfca6" stroke-width="5.5" d="M657.4 823.4h0"/><path stroke="#99fc91" stroke-width="5.5" d="M689.7 786.3h0"/><path stroke="#bdfd6b" stroke-width="5.5" d="M669.3 862.2h0"/><path stroke="#c6fd64" stroke-width="5.5" d="M662.3 841.4h0m2.8 6.1h0"/><path stroke="#eefe55" stroke-width="5.5" d="M664.6 854.1h0"/><path stroke="#f7f551" stroke-width="5.5" d="M672.6 871.1h0m2.1 1.3h0"/><path stroke="#f6ca45" stroke-width="5.5" d="M675.6 872.1h0"/><path stroke="#f5bc41" stroke-width="5.5" d="M670.2 820.6h0m20 24.9h0"/><path stroke="#f1a039" stroke-width="5.5" d="M676.7 867h0"/><path stroke="#ea3824" stroke-width="5.5" d="M665.8 853.6h0"/><path stroke="#c82a1d" stroke-width="5.5" d="M664.7 852.6h0"/><path stroke="#a72116" stroke-width="5.5" d="M663.1 854.3h0"/><path stroke="#961d13" stroke-width="5.5" d="M665.3 856.7h0"/><path stroke="#85190f" stroke-width="5.5" d="M673.3 873.9h0"/><path stroke="#001ae3" stroke-width="6" d="M818.9 821h0"/><path stroke="#001df5" stroke-width="6" d="M693.2 797.4h0"/><path stroke="#0323f5" stroke-width="6" d="M695.7 788.1h0m30.2-1.1h0m10.1 37.1h0m0.5-29.5h0"/><path stroke="#092df5" stroke-width="6" d="M692.5 787.2h0m28.4 16.6h0m4.9-12.6h0"/><path stroke="#1039f5" stroke-width="6" d="M645.5 748h0m31.8 10.7h0m13.8 47.9h0m12.3-16.7h0m9.2 7.4h0m110.8 22.6h0"/><path stroke="#1847f5" stroke-width="6" d="M688.7 797.2h0m32.2-0.7h0"/><path stroke="#2055f5" stroke-width="6" d="M616.7 746.7h0m69.2 3.5h0m1.7 29.9h0m5.4 17.6h0m7-42.5h0m0.3-0.2h0m11.5 40h0m32.7 34.5h0m2.6 2h0"/><path stroke="#2864f6" stroke-width="6" d="M668 849.9h0m13.5-93.4h0m6.2 106.7h0m27.9 8.5h0m1.7-61.8h0m2.7 33.7h0m11.8-34.9h0m5.1 17.2h0"/><path stroke="#3073f6" stroke-width="6" d="M672.9 752.2h0m26.3 58.2h0"/><path stroke="#3986f7" stroke-width="6" d="M680.6 751.2h0m24.5 107.7h0"/><path stroke="#4195f7" stroke-width="6" d="M671.9 829.9h0m0.4 24.3h0"/><path stroke="#49a4f8" stroke-width="6" d="M680.5 875h0m4.5-83.5h0m1.6 53.6h0m14.4-30.6h0"/><path stroke="#51b4f9" stroke-width="6" d="M686.4 839.7h0m2.7-41.5h0m4.7 34.8h0"/><path stroke="#58c3f9" stroke-width="6" d="M675.9 821.8h0m10.6 28.7h0m58.5-24.3h0"/><path stroke="#60d3fa" stroke-width="6" d="M684.6 870.5h0"/><path stroke="#68e3f4" stroke-width="6" d="M678.4 864.2h0"/><path stroke="#71f2ea" stroke-width="6" d="M686.2 842.3h0"/><path stroke="#77fcdf" stroke-width="6" d="M661.3 819.7h0"/><path stroke="#81fcbc" stroke-width="6" d="M675.1 846.8h0m5.9 9.2h0m22.6 10.3h0"/><path stroke="#8cfca6" stroke-width="6" d="M721.3 810.6h0"/><path stroke="#a3fc85" stroke-width="6" d="M683.4 872.5h0m39.1-59.9h0"/><path stroke="#c6fd64" stroke-width="6" d="M661 836.2h0"/><path stroke="#e4fe56" stroke-width="6" d="M671.1 834.3h0"/><path stroke="#fbe74d" stroke-width="6" d="M696.6 862.3h0"/><path stroke="#f5bc41" stroke-width="6" d="M679.5 860.3h0"/><path stroke="#ef8f35" stroke-width="6" d="M679.9 842.4h0m10.8 33h0"/><path stroke="#ee8231" stroke-width="6" d="M680.5 847h0"/><path stroke="#ea3824" stroke-width="6" d="M672.9 867.4h0"/><path stroke="#85190f" stroke-width="6" d="M663.6 848h0"/><path stroke="#001df5" stroke-width="6.5" d="M684.9 788.6h0"/><path stroke="#001df5" stroke-width="6.5" d="M712 777.9h0m0.3 0.2h0"/><path stroke="#0323f5" stroke-width="6.5" d="M689.7 793.1h0m22.4 5.4h0m24.8 10.8h0"/><path stroke="#092df5" stroke-width="6.5" d="M691.7 853.1h0m8.4-43.7h0m17-3h0m10.2-15.7h0m10.2 8.3h0m4.7 33.3h0"/><path stroke="#1039f5" stroke-width="6.5" d="M705.7 789.2h0m11.8 25.1h0m5-11.4h0"/><path stroke="#1847f5" stroke-width="6.5" d="M721.8 790.7h0m10.5-0.2h0m31.9 77.4h0"/><path stroke="#2055f5" stroke-width="6.5" d="M672.7 749.2h0m8.1 124.5h0m26.8-4h0m20.3-63.4h0"/><path stroke="#2864f6" stroke-width="6.5" d="M675.6 845.7h0m2.7-87.7h0m18.9 114.4h0"/><path stroke="#4195f7" stroke-width="6.5" d="M690 807.4h0"/><path stroke="#49a4f8" stroke-width="6.5" d="M680 825.7h0m22.3 26.7h0"/><path stroke="#51b4f9" stroke-width="6.5" d="M694.8 867h0"/><path stroke="#58c3f9" stroke-width="6.5" d="M686.3 850.5h0"/><path stroke="#60d3fa" stroke-width="6.5" d="M675.4 824.5h0m15.5 20.5h0"/><path stroke="#68e3f4" stroke-width="6.5" d="M690.2 834.5h0m2.7 16.6h0m38.1-44.3h0"/><path stroke="#71f2ea" stroke-width="6.5" d="M674.5 821.7h0m13.4 34.5h0"/><path stroke="#7dfcc8" stroke-width="6.5" d="M679.2 819.6h0m17.1 32.7h0"/><path stroke="#81fcbc" stroke-width="6.5" d="M688.9 869.8h0"/><path stroke="#86fcb1" stroke-width="6.5" d="M683.9 873.5h0"/><path stroke="#8cfca6" stroke-width="6.5" d="M692.2 828h0"/><path stroke="#a3fc85" stroke-width="6.5" d="M668.6 865h0m29.3-14.9h0"/><path stroke="#bdfd6b" stroke-width="6.5" d="M696.3 880h0"/><path stroke="#dafe59" stroke-width="6.5" d="M661.8 825h0"/><path stroke="#fbe74d" stroke-width="6.5" d="M670.9 822.7h0"/><path stroke="#f5bc41" stroke-width="6.5" d="M676.8 845.9h0"/><path stroke="#001df5" stroke-width="7" d="M731.3 809.9h0"/><path stroke="#0323f5" stroke-width="7" d="M692 789.5h0m32.9 14.3h0m48.9 58.9h0"/><path stroke="#092df5" stroke-width="7" d="M692.9 804.2h0m9 9h0m29-20.7h0"/><path stroke="#1039f5" stroke-width="7" d="M687.4 780.3h0m49.5 40.3h0m0.5-27.5h0m5.6 40.7h0m27 26.4h0m0.7-1.8h0"/><path stroke="#1847f5" stroke-width="7" d="M709.4 800.9h0m66.8 62.6h0m43.1-42.4h0"/><path stroke="#2055f5" stroke-width="7" d="M672.5 750.8h0m68 45.6h0"/><path stroke="#2864f6" stroke-width="7" d="M674.9 762.1h0m30.2 28.3h0"/><path stroke="#3073f6" stroke-width="7" d="M678.5 823.2h0m34.1-24.5h0"/><path stroke="#3986f7" stroke-width="7" d="M701 810.5h0"/><path stroke="#4195f7" stroke-width="7" d="M706.1 862.1h0"/><path stroke="#49a4f8" stroke-width="7" d="M698.9 867.6h0"/><path stroke="#51b4f9" stroke-width="7" d="M673.9 872.2h0m5.1 0.5h0m8.3 4.5h0m59.5-46.1h0"/><path stroke="#58c3f9" stroke-width="7" d="M666 855.4h0m17-19.8h0m11.4 12.2h0m7.1 24.7h0"/><path stroke="#60d3fa" stroke-width="7" d="M700.7 872.2h0"/><path stroke="#68e3f4" stroke-width="7" d="M670 852.6h0"/><path stroke="#71f2ea" stroke-width="7" d="M664 829.9h0m18 13.9h0"/><path stroke="#77fcdf" stroke-width="7" d="M667.3 842.2h0m28.7 9.1h0m1.6 24.8h0"/><path stroke="#7afcd3" stroke-width="7" d="M687.3 842.8h0m6.1 13.5h0"/><path stroke="#7dfcc8" stroke-width="7" d="M669 830.7h0"/><path stroke="#92fc9b" stroke-width="7" d="M684.4 832.2h0"/><path stroke="#99fc91" stroke-width="7" d="M735.5 820.2h0"/><path stroke="#b4fd73" stroke-width="7" d="M690.8 849.2h0"/><path stroke="#bdfd6b" stroke-width="7" d="M676.5 859.7h0m6.6-14.3h0"/><path stroke="#eefe55" stroke-width="7" d="M670 837.5h0"/><path stroke="#f3ae3d" stroke-width="7" d="M688.5 843.7h0"/><path stroke="#092df5" stroke-width="7.5" d="M678.6 757.5h0m17.9 35.4h0m2.1 12.9h0m13.3-10.7h0m1.1 2.6h0"/><path stroke="#1039f5" stroke-width="7.5" d="M682.5 754.4h0m51 62h0m34.5 51.9h0"/><path stroke="#1847f5" stroke-width="7.5" d="M677.3 871.5h0"/><path stroke="#2055f5" stroke-width="7.5" d="M720.9 799.5h0m9.3-3.3h0m6.2 28.5h0"/><path stroke="#2864f6" stroke-width="7.5" d="M658.8 818.6h0m30.9-18h0m33.8-4.3h0m38.2 70h0"/><path stroke="#3073f6" stroke-width="7.5" d="M725.7 790.7h0"/><path stroke="#4195f7" stroke-width="7.5" d="M681.8 855.7h0"/><path stroke="#49a4f8" stroke-width="7.5" d="M667.5 842.2h0m35.6 18.7h0"/><path stroke="#51b4f9" stroke-width="7.5" d="M694.7 870.3h0"/><path stroke="#60d3fa" stroke-width="7.5" d="M675.3 845.3h0m9.3 25.5h0"/><path stroke="#68e3f4" stroke-width="7.5" d="M665.2 845.1h0m9.2-19.2h0m18.4 14.6h0"/><path stroke="#7dfcc8" stroke-width="7.5" d="M666.2 858.9h0"/><path stroke="#86fcb1" stroke-width="7.5" d="M682 829.5h0"/><path stroke="#a3fc85" stroke-width="7.5" d="M690 834.4h0"/><path stroke="#001df5" stroke-width="8" d="M686.4 795.4h0"/><path stroke="#0323f5" stroke-width="8" d="M698.1 789.9h0m6.6 19.8h0"/><path stroke="#092df5" stroke-width="8" d="M706.8 808.6h0m5 8.2h0m22.8-22.1h0"/><path stroke="#1039f5" stroke-width="8" d="M732.6 808.9h0"/><path stroke="#2055f5" stroke-width="8" d="M739.4 790.3h0"/><path stroke="#3986f7" stroke-width="8" d="M677.1 844.2h0m14.4-12.6h0"/><path stroke="#49a4f8" stroke-width="8" d="M669.8 857.9h0m23.6-68.9h0"/><path stroke="#58c3f9" stroke-width="8" d="M722.5 804.9h0"/><path stroke="#60d3fa" stroke-width="8" d="M687.1 867.3h0"/><path stroke="#68e3f4" stroke-width="8" d="M687 857.9h0m3.1-11.8h0"/><path stroke="#71f2ea" stroke-width="8" d="M684.8 850.1h0"/><path stroke="#7afcd3" stroke-width="8" d="M681.1 821.3h0"/><path stroke="#86fcb1" stroke-width="8" d="M674.9 867.1h0"/><path stroke="#8cfca6" stroke-width="8" d="M696.4 783.9h0"/><path stroke="#92fc9b" stroke-width="8" d="M694.6 876.4h0"/><path stroke="#a3fc85" stroke-width="8" d="M689.7 837.5h0"/><path stroke="#c6fd64" stroke-width="8" d="M661.2 833.6h0"/><path stroke="#d0fd5e" stroke-width="8" d="M694.8 836.7h0"/><path stroke="#f6ca45" stroke-width="8" d="M684.7 847.1h0"/><path stroke="#f5bc41" stroke-width="8" d="M681.6 844.7h0"/><path stroke="#f1a039" stroke-width="8" d="M681.4 841.8h0"/><path stroke="#001df5" stroke-width="8.5" d="M686.1 786.2h0"/><path stroke="#2055f5" stroke-width="8.5" d="M696.5 782.6h0"/><path stroke="#3986f7" stroke-width="8.5" d="M676.9 837.5h0"/><path stroke="#4195f7" stroke-width="8.5" d="M684.9 843.5h0m5.8-58.5h0m3.8 66.7h0"/><path stroke="#49a4f8" stroke-width="8.5" d="M687.1 871.9h0"/><path stroke="#77fcdf" stroke-width="8.5" d="M667.6 835.1h0"/><path stroke="#e4fe56" stroke-width="8.5" d="M693.5 857.4h0"/><path stroke="#f9d849" stroke-width="8.5" d="M698.1 870.8h0"/><path stroke="#092df5" stroke-width="9" d="M823.8 823.3h0"/><path stroke="#1847f5" stroke-width="9" d="M664.5 845.2h0m24.5-19.8h0"/><path stroke="#2864f6" stroke-width="9" d="M698 867.7h0"/><path stroke="#3073f6" stroke-width="9" d="M692.5 798.1h0"/><path stroke="#51b4f9" stroke-width="9" d="M664.9 847.4h0"/><path stroke="#60d3fa" stroke-width="9" d="M684.4 869.3h0"/><path stroke="#b4fd73" stroke-width="9" d="M721 812.5h0"/><path stroke="#e4fe56" stroke-width="9" d="M697.3 844.8h0"/><path stroke="#001df5" stroke-width="9.5" d="M726.9 794.1h0m58.6 31.5h0"/><path stroke="#1039f5" stroke-width="9.5" d="M716.1 808.7h0m25.2 20.6h0"/><path stroke="#81fcbc" stroke-width="9.5" d="M722.4 814.5h0"/><path stroke="#51b4f9" stroke-width="10" d="M683.6 845.4h0"/><path stroke="#71f2ea" stroke-width="10" d="M685 849h0"/><path stroke="#58c3f9" stroke-width="10.5" d="M672.9 822.3h0"/><path stroke="#0014c0" stroke-width="12" d="M708.8 726.8h0"/></g>
</svg>
<path d="M284.4 363.2V902.2M398.8 363.2V902.2M513.3 363.2V902.2M627.7 363.2V902.2M742.2 363.2V902.2M236.5 385.4H856.5M236.5 489.7H856.5M236.5 594.0H856.5M236.5 698.2H856.5M236.5 802.5H856.5" stroke="#b0b0b0" stroke-width="1.1" fill="none"/>
<rect x="236.5" y="363.2" width="620.0" height="539.0" fill="none" stroke="#000" stroke-width="1.1"/>
<path d="M284.4 902.2v4.8M398.8 902.2v4.8M513.3 902.2v4.8M627.7 902.2v4.8M742.2 902.2v4.8M856.6 902.2v4.8M236.5 385.4h-4.8M236.5 489.7h-4.8M236.5 594.0h-4.8M236.5 698.2h-4.8M236.5 802.5h-4.8" stroke="#000" stroke-width="1.1" fill="none"/>
<text x="266.8" y="923.2" textLength="35.6" lengthAdjust="spacingAndGlyphs" font-family="Liberation Sans" font-size="14.3" fill="#000">−124</text>
<text x="381.2" y="923.2" textLength="35.6" lengthAdjust="spacingAndGlyphs" font-family="Liberation Sans" font-size="14.3" fill="#000">−122</text>
<text x="495.7" y="923.2" textLength="35.6" lengthAdjust="spacingAndGlyphs" font-family="Liberation Sans" font-size="14.3" fill="#000">−120</text>
<text x="610.1" y="923.2" textLength="35.6" lengthAdjust="spacingAndGlyphs" font-family="Liberation Sans" font-size="14.3" fill="#000">−118</text>
<text x="724.6" y="923.2" textLength="35.6" lengthAdjust="spacingAndGlyphs" font-family="Liberation Sans" font-size="14.3" fill="#000">−116</text>
<text x="839.0" y="923.2" textLength="35.6" lengthAdjust="spacingAndGlyphs" font-family="Liberation Sans" font-size="14.3" fill="#000">−114</text>
<text x="209.6" y="391.0" textLength="14.8" lengthAdjust="spacingAndGlyphs" font-family="Liberation Sans" font-size="14.3" fill="#000">42</text>
<text x="209.6" y="495.3" textLength="14.8" lengthAdjust="spacingAndGlyphs" font-family="Liberation Sans" font-size="14.3" fill="#000">40</text>
<text x="209.6" y="599.6" textLength="14.8" lengthAdjust="spacingAndGlyphs" font-family="Liberation Sans" font-size="14.3" fill="#000">38</text>
<text x="209.6" y="703.8" textLength="14.8" lengthAdjust="spacingAndGlyphs" font-family="Liberation Sans" font-size="14.3" fill="#000">36</text>
<text x="209.6" y="808.1" textLength="14.8" lengthAdjust="spacingAndGlyphs" font-family="Liberation Sans" font-size="14.3" fill="#000">34</text>
<text x="513.4" y="942.8" textLength="63.7" lengthAdjust="spacingAndGlyphs" font-family="Liberation Sans" font-size="14.3" fill="#000">longitude</text>
<text transform="translate(200.2 661.1) rotate(-90)" textLength="51.2" lengthAdjust="spacingAndGlyphs" font-family="Liberation Sans" font-size="14.3" fill="#000">latitude</text>
<defs><linearGradient id="cb" x1="0" y1="0" x2="0" y2="1"><stop offset="0.000" stop-color="#74140c"/><stop offset="0.031" stop-color="#921c12"/><stop offset="0.062" stop-color="#b32518"/><stop offset="0.094" stop-color="#d52e1f"/><stop offset="0.125" stop-color="#ea3c24"/><stop offset="0.156" stop-color="#eb4e27"/><stop offset="0.188" stop-color="#ec652b"/><stop offset="0.219" stop-color="#ee7f31"/><stop offset="0.250" stop-color="#f09a37"/><stop offset="0.281" stop-color="#f4b53f"/><stop offset="0.312" stop-color="#f7d147"/><stop offset="0.344" stop-color="#fbee4f"/><stop offset="0.375" stop-color="#e9fe55"/><stop offset="0.406" stop-color="#d5fe5c"/><stop offset="0.438" stop-color="#c2fd67"/><stop offset="0.469" stop-color="#affd77"/><stop offset="0.500" stop-color="#9ffc8a"/><stop offset="0.531" stop-color="#90fc9e"/><stop offset="0.562" stop-color="#85fcb4"/><stop offset="0.594" stop-color="#7cfccb"/><stop offset="0.625" stop-color="#77fce2"/><stop offset="0.656" stop-color="#66dff7"/><stop offset="0.688" stop-color="#56c0f9"/><stop offset="0.719" stop-color="#47a1f8"/><stop offset="0.750" stop-color="#3782f7"/><stop offset="0.781" stop-color="#2864f6"/><stop offset="0.812" stop-color="#1847f5"/><stop offset="0.844" stop-color="#092df5"/><stop offset="0.875" stop-color="#001df5"/><stop offset="0.906" stop-color="#001ae3"/><stop offset="0.938" stop-color="#0014c0"/><stop offset="0.969" stop-color="#000e9d"/><stop offset="1.000" stop-color="#00087a"/></linearGradient></defs>
<rect x="895.2" y="363.2" width="27.4" height="539.0" fill="url(#cb)" stroke="#000" stroke-width="1.1"/>
<path d="M922.6 807.7h4.8M922.6 696.6h4.8M922.6 585.5h4.8M922.6 474.3h4.8M922.6 363.2h4.8" stroke="#000" stroke-width="1.1" fill="none"/>
<text x="932" y="813.6" textLength="49" lengthAdjust="spacingAndGlyphs" font-family="Liberation Sans" font-size="14.3" fill="#000">100000</text>
<text x="932" y="702.5" textLength="49" lengthAdjust="spacingAndGlyphs" font-family="Liberation Sans" font-size="14.3" fill="#000">200000</text>
<text x="932" y="591.4" textLength="49" lengthAdjust="spacingAndGlyphs" font-family="Liberation Sans" font-size="14.3" fill="#000">300000</text>
<text x="932" y="480.2" textLength="49" lengthAdjust="spacingAndGlyphs" font-family="Liberation Sans" font-size="14.3" fill="#000">400000</text>
<text x="932" y="369.1" textLength="49" lengthAdjust="spacingAndGlyphs" font-family="Liberation Sans" font-size="14.3" fill="#000">500000</text>
<text transform="translate(1001.9 707.5) rotate(-90)" textLength="143.7" lengthAdjust="spacingAndGlyphs" font-family="Liberation Sans" font-size="14.3" fill="#000">median_house_value</text>
<rect x="725.5" y="370.5" width="124" height="25" rx="2.5" fill="#fff" fill-opacity="0.8" stroke="#d6d6d6" stroke-width="1"/>
<circle cx="743.8" cy="382.6" r="7" fill="#d62a1e"/>
<text x="770.6" y="387.8" textLength="71.4" lengthAdjust="spacingAndGlyphs" font-family="Liberation Sans" font-size="14.3" fill="#000">population</text>
</svg><!--/FIG-->
<!-- status bar -->
<div class="a" style="left:74px;top:980px;width:1002px;height:25px;background:#383838;border-top:1px solid #5a5a5a;border-radius:0 0 10px 0"></div>
<div class="a" style="left:34px;top:26px;width:1042px;height:979px;border-radius:10px;box-shadow:inset 0 0 0 1px #5c5d5f;pointer-events:none"></div>
<svg class="a" style="left:444px;top:987px" width="14" height="11"><path d="M1 5.5l3.8 3.8L13 1" fill="none" stroke="#4cbb55" stroke-width="1.5"/></svg>
<div class="a mi" style="left:469px;top:984px;color:#e0e0e0">1s</div>
<div class="a mi" style="left:504px;top:984px;color:#e0e0e0">completed at 10:43 AM</div>
<div class="a" style="left:1034.5px;top:987.5px;width:11px;height:11px;border-radius:50%;background:#55c15f"></div>
<svg class="a" style="left:1058px;top:988px" width="11" height="11"><path d="M1 1l9 9M10 1l-9 9" stroke="#eee" stroke-width="1.5"/></svg>
</div>
</body></html>
